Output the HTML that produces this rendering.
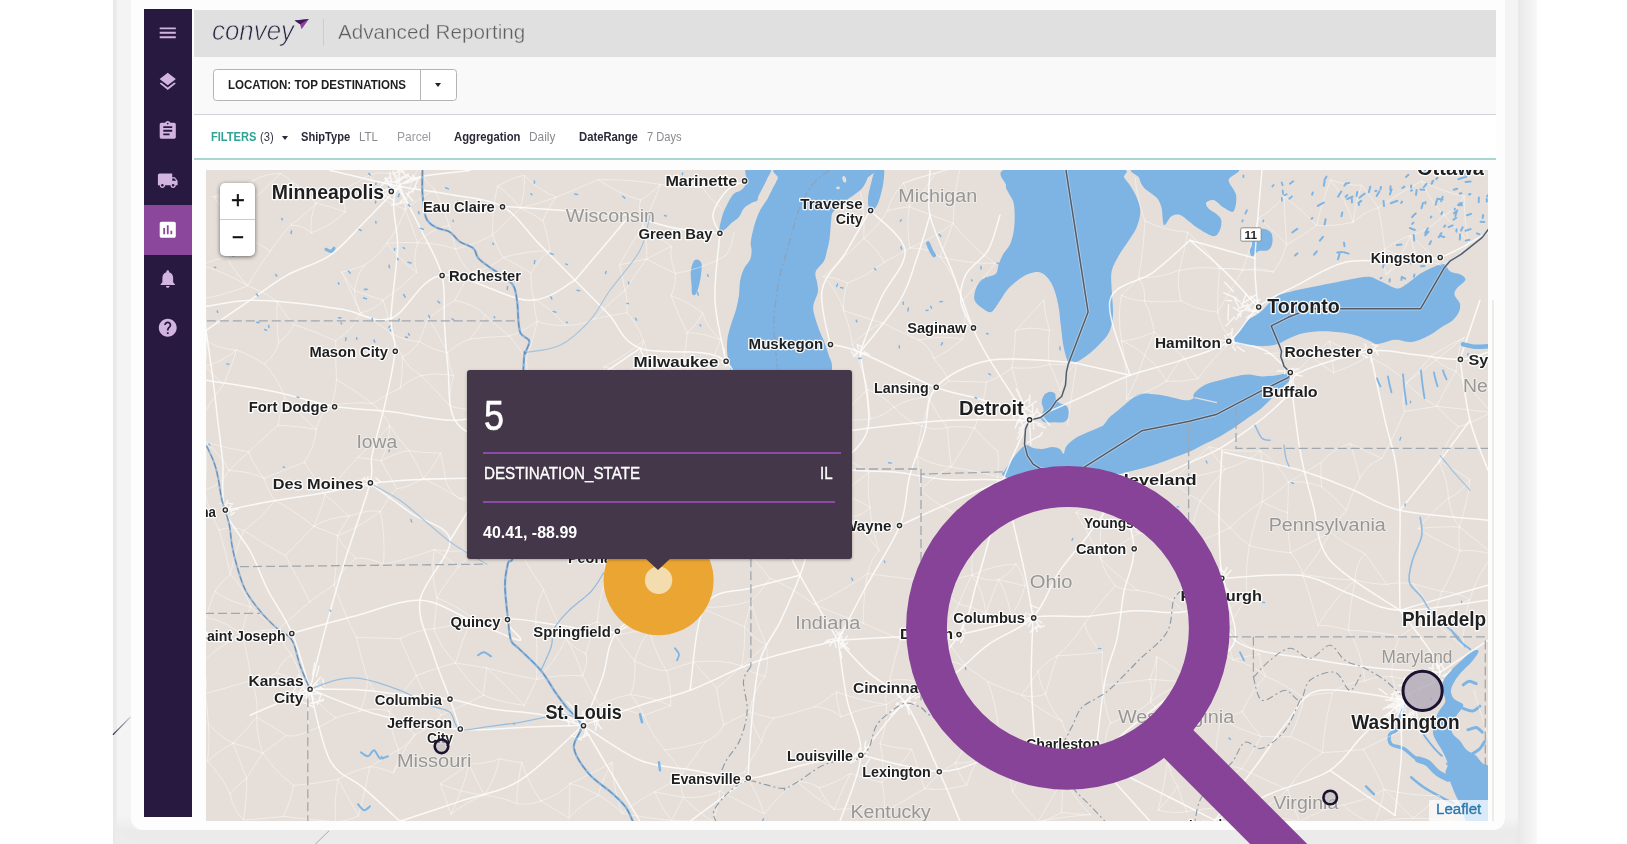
<!DOCTYPE html>
<html lang="en"><head><meta charset="utf-8"><title>Convey - Advanced Reporting</title>
<style>
html,body{margin:0;padding:0;background:#fff;}
body{width:1627px;height:844px;overflow:hidden;position:relative;filter:blur(.55px);font-family:"Liberation Sans",sans-serif;}
.abs{position:absolute;}
.t{position:absolute;white-space:nowrap;line-height:1;transform-origin:0 50%;}
svg{display:block;}
svg text{font-family:"Liberation Sans",sans-serif;}
.lb{font-weight:700;fill:#1f1f1f;stroke:#fff;stroke-width:2.6px;stroke-linejoin:round;paint-order:stroke fill;stroke-opacity:.9}
.sh{font-weight:700;fill:#222}
.st{font-weight:400;fill:#979797;stroke:#f3efeb;stroke-width:2px;stroke-linejoin:round;paint-order:stroke fill;stroke-opacity:.7}

#frame{left:113px;top:-30px;width:1424px;height:900px;background:linear-gradient(90deg,#e8e8e8 0,#ececec 3.5px,#ececec 1400px,#e9e9e9 1406px,#f8f8f8 1424px);}
#bez{left:116.6px;top:-30px;width:1401.6px;height:872px;border-radius:0 0 24px 24px;background:linear-gradient(180deg,#f4f4f4 0,#f4f4f4 846px,#ebebeb 861px);}
#card{left:131px;top:-30px;width:1374.2px;height:860px;background:#fdfdfd;border-radius:0 0 12px 12px;}
#side{left:144px;top:9px;width:47.5px;height:808px;background:#27193f;}
#side .act{left:0;top:196px;width:47.5px;height:49.5px;background:#8a479c;}
#side svg{position:absolute;left:13px;}
#hdr{left:194px;top:9.5px;width:1302px;height:47.5px;background:#e0e0e0;}
#sub{left:194px;top:57px;width:1302px;height:57px;background:#f9f9f9;border-bottom:1.5px solid #d3d2d8;}
#flt{left:194px;top:115.5px;width:1302px;height:42px;background:#fff;border-bottom:2px solid #a9d6d0;}
#dd{left:213px;top:68.8px;width:242px;height:30px;border:1px solid #b4b4b4;border-radius:3.5px;background:#fff;}
#dd i{position:absolute;left:205.5px;top:0;width:1px;height:30px;background:#b4b4b4;}
.car{width:0;height:0;border-left:3.5px solid transparent;border-right:3.5px solid transparent;border-top:4px solid #222;}
#map{left:206px;top:169.7px;width:1282.3px;height:651.3px;overflow:hidden;background:#e6dfd9;}
#zoom{left:219.8px;top:182.8px;width:35.4px;height:73px;background:#fff;border-radius:5px;box-shadow:0 1px 4px rgba(0,0,0,.55);}
#zoom i{position:absolute;left:0;top:36px;width:35px;height:1px;background:#ccc;}
#tip{left:467px;top:370px;width:384.5px;height:188.5px;background:#45374a;border-radius:3px;box-shadow:0 1px 3px rgba(0,0,0,.3);}
#tip:after{content:"";position:absolute;left:178px;top:188px;border-left:13.5px solid transparent;border-right:13.5px solid transparent;border-top:12.5px solid #45374a;}
#tip .ln{position:absolute;height:1.6px;background:#8c4aa8;left:16.3px;}
#leaf{left:1429px;top:799.5px;width:59.5px;height:21.5px;background:rgba(255,255,255,.72);}

</style></head><body>
<div id="frame" class="abs"></div>
<div id="bez" class="abs"></div>
<div id="card" class="abs"></div>
<svg class="abs" style="left:0;top:0" width="1627" height="844" viewBox="0 0 1627 844"><defs><linearGradient id="lg1" x1="113" y1="734" x2="130" y2="717" gradientUnits="userSpaceOnUse"><stop offset="0" stop-color="#2e2444"/><stop offset=".25" stop-color="#6d6680"/><stop offset="1" stop-color="#cfcfd6"/></linearGradient></defs><path d="M113.3 734.4 L130.2 717.2" stroke="url(#lg1)" stroke-width="1.3" stroke-linecap="round"/><path d="M329 830.8 L315 844.5" stroke="#a9a9a9" stroke-width="1"/></svg>
<div id="side" class="abs"><div class="abs act"></div><svg style="top:13.2px" width="21.5" height="21.5" viewBox="0 0 24 24" fill="#d2b4e0"><path d="M3 18h18v-2H3v2zm0-5h18v-2H3v2zm0-7v2h18V6H3z"/></svg><svg style="top:62.2px" width="21.5" height="21.5" viewBox="0 0 24 24" fill="#d2b4e0"><path d="M11.99 18.54l-7.37-5.73L3 14.07l9 7 9-7-1.63-1.27-7.38 5.74zM12 16l7.36-5.73L21 9l-9-7-9 7 1.63 1.27L12 16z"/></svg><svg style="top:111.2px" width="21.5" height="21.5" viewBox="0 0 24 24" fill="#d2b4e0"><path d="M19 3h-4.180C14.400 1.840 13.300 1 12 1c-1.300 0-2.400.840-2.820 2H5c-1.100 0-2 .900-2 2v14c0 1.100.900 2 2 2h14c1.100 0 2-.900 2-2V5c0-1.100-.900-2-2-2zm-7 0c.550 0 1 .450 1 1s-.450 1-1 1-1-.450-1-1 .450-1 1-1zm2 14H7v-2h7v2zm3-4H7v-2h10v2zm0-4H7V7h10v2z"/></svg><svg style="top:161.2px" width="21.5" height="21.5" viewBox="0 0 24 24" fill="#d2b4e0"><path d="M20 8h-3V4H3c-1.100 0-2 .900-2 2v11h2c0 1.660 1.340 3 3 3s3-1.340 3-3h6c0 1.660 1.340 3 3 3s3-1.340 3-3h2v-5l-3-4zM6 18.500c-.830 0-1.500-.670-1.500-1.500s.670-1.500 1.500-1.500 1.500.670 1.500 1.500-.670 1.500-1.500 1.500zm13.500-9l1.960 2.500H17V9.500h2.500zm-1.500 9c-.830 0-1.500-.670-1.500-1.500s.670-1.500 1.500-1.500 1.500.670 1.500 1.500-.670 1.500-1.500 1.500z"/></svg><svg style="top:210.2px" width="21.5" height="21.5" viewBox="0 0 24 24" fill="#fff"><path d="M19 3H5c-1.100 0-2 .900-2 2v14c0 1.100.900 2 2 2h14c1.100 0 2-.900 2-2V5c0-1.100-.900-2-2-2zM9 17H7v-7h2v7zm4 0h-2V7h2v10zm4 0h-2v-4h2v4z"/></svg><svg style="top:259.2px" width="21.5" height="21.5" viewBox="0 0 24 24" fill="#d2b4e0"><path d="M12 22c1.100 0 2-.900 2-2h-4c0 1.100.890 2 2 2zm6-6v-5c0-3.070-1.640-5.640-4.500-6.320V4c0-.830-.670-1.500-1.500-1.500s-1.500.670-1.500 1.500v.680C7.630 5.360 6 7.920 6 11v5l-2 2v1h16v-1l-2-2z"/></svg><svg style="top:308.2px" width="21.5" height="21.5" viewBox="0 0 24 24" fill="#d2b4e0"><path d="M12 2C6.480 2 2 6.480 2 12s4.480 10 10 10 10-4.480 10-10S17.520 2 12 2zm1 17h-2v-2h2v2zm2.070-7.750l-.900.920C13.450 12.900 13 13.500 13 15h-2v-.500c0-1.100.450-2.100 1.170-2.830l1.240-1.260c.370-.360.590-.860.590-1.410 0-1.100-.900-2-2-2s-2 .900-2 2H8c0-2.210 1.790-4 4-4s4 1.790 4 4c0 .880-.360 1.680-.930 2.250z"/></svg></div>
<div id="hdr" class="abs"></div>
<span class="t" style="left:211.6px;top:17.3px;font-size:27.50px;color:#2b2340;font-style:italic;transform:scaleX(0.9411);-webkit-text-stroke:.75px #e0e0e0;">convey</span>
<svg class="abs" style="left:293px;top:17px" width="18" height="14" viewBox="293 17 18 14"><path d="M294.6 20.6 L308.9 18.9 L301.6 29.2 L300 24.2 Z" fill="#8f3f9f"/><path d="M294.6 20.6 L308.9 18.9 L300 24.2 Z" fill="#3d1a55"/></svg>
<div class="abs" style="left:322.5px;top:18.5px;width:1px;height:27.5px;background:#cdcdcd"></div>
<span class="t" style="left:338.3px;top:22.2px;font-size:20.00px;color:#5e5e5e;transform:scaleX(1.0329);-webkit-text-stroke:.35px #e0e0e0;">Advanced Reporting</span>
<div id="sub" class="abs"></div>
<div id="dd" class="abs"><i></i><div class="abs car" style="left:221px;top:13.5px"></div></div>
<span class="t" style="left:227.5px;top:78.7px;font-size:12.20px;color:#1e1e1e;font-weight:700;transform:scaleX(0.9463);">LOCATION: TOP DESTINATIONS</span>
<div id="flt" class="abs"></div>
<span class="t" style="left:210.9px;top:130.9px;font-size:12.40px;color:#2fa394;font-weight:700;transform:scaleX(0.8966);">FILTERS</span>
<span class="t" style="left:260.0px;top:130.9px;font-size:12.40px;color:#3a3545;transform:scaleX(0.9040);">(3)</span>
<div class="abs car" style="left:281.5px;top:136px;border-top-color:#2d2838"></div>
<span class="t" style="left:301.0px;top:130.9px;font-size:12.40px;color:#2d2838;font-weight:700;transform:scaleX(0.8982);">ShipType</span>
<span class="t" style="left:359.4px;top:130.9px;font-size:12.40px;color:#8a8a90;transform:scaleX(0.9243);">LTL</span>
<span class="t" style="left:397.0px;top:130.9px;font-size:12.40px;color:#9a9aa0;transform:scaleX(0.9673);">Parcel</span>
<span class="t" style="left:454.4px;top:130.9px;font-size:12.40px;color:#2d2838;font-weight:700;transform:scaleX(0.9107);">Aggregation</span>
<span class="t" style="left:529.3px;top:130.9px;font-size:12.40px;color:#8a8a90;transform:scaleX(0.9579);">Daily</span>
<span class="t" style="left:578.8px;top:130.9px;font-size:12.40px;color:#2d2838;font-weight:700;transform:scaleX(0.9093);">DateRange</span>
<span class="t" style="left:646.6px;top:130.9px;font-size:12.40px;color:#8a8a90;transform:scaleX(0.8991);">7 Days</span>
<div id="map" class="abs"><svg width="1282.3" height="651.3" viewBox="206 169.7 1282.3 651.3"><rect x="206" y="169" width="1284" height="654" fill="#e6dfd9"/>
<path d="M780.3 168.0 C765.0 169.7 779.1 174.5 777.8 177.9 C776.5 181.3 774.3 184.8 772.6 188.2 C770.9 191.6 769.1 195.6 767.4 198.6 C765.7 201.6 764.0 203.3 762.3 206.3 C760.6 209.3 758.6 212.7 757.1 216.6 C755.6 220.5 754.3 225.2 753.2 229.5 C752.1 233.8 751.0 239.0 750.7 242.4 C750.4 245.8 751.7 247.2 751.6 250.0 C751.5 252.8 751.4 256.1 750.1 259.2 C748.8 262.3 745.6 264.9 743.9 268.5 C742.2 272.1 740.9 276.4 740.1 280.8 C739.3 285.2 739.6 290.1 739.0 294.7 C738.4 299.3 737.4 304.0 736.2 308.6 C735.0 313.2 733.0 317.8 731.6 322.4 C730.2 327.0 728.6 331.7 727.8 336.3 C727.0 340.9 726.8 345.6 727.0 350.2 C727.2 354.8 728.7 360.7 729.3 364.0 C729.9 367.3 729.8 364.2 730.4 370.2 C731.0 376.2 731.1 390.0 733.0 400.0 C734.9 410.0 732.5 423.3 742.0 430.0 C751.5 436.7 776.7 443.3 790.0 440.0 C803.3 436.7 815.0 421.6 822.0 410.0 C829.0 398.4 830.7 379.4 831.8 370.2 C832.9 361.0 830.0 359.7 828.7 354.8 C827.4 349.9 825.5 345.0 824.0 340.9 C822.5 336.8 820.9 334.2 819.4 330.1 C817.9 326.0 815.8 320.4 814.8 316.3 C813.8 312.2 812.8 309.6 813.3 305.5 C813.8 301.4 817.3 295.5 817.9 291.6 C818.5 287.8 817.5 285.7 817.1 282.4 C816.7 279.1 814.5 275.2 815.6 271.6 C816.8 268.0 822.1 264.4 824.0 260.8 C825.9 257.2 826.2 253.5 827.1 250.0 C828.0 246.5 828.9 243.3 829.4 239.9 C829.9 236.5 830.1 232.9 830.4 229.5 C830.7 226.1 830.8 222.2 831.3 219.2 C831.8 216.2 831.0 214.5 833.3 211.5 C835.6 208.5 841.0 204.2 844.9 201.1 C848.8 198.0 853.5 195.1 856.5 192.7 C859.5 190.3 861.1 189.4 862.9 186.9 C864.7 184.4 866.4 181.1 867.5 177.9 C868.6 174.8 883.9 169.7 869.4 168.0 C854.9 166.3 795.6 166.3 780.3 168.0 Z" fill="#7db4e4"/>
<path d="M746.8 168.0 C742.9 170.3 747.7 178.2 746.8 181.8 C745.9 185.4 743.8 187.6 741.6 189.5 C739.5 191.4 736.0 191.5 733.9 193.4 C731.8 195.3 730.3 198.3 728.7 201.1 C727.1 203.9 725.5 207.0 724.2 210.2 C722.9 213.4 721.8 217.2 721.0 220.5 C720.2 223.8 719.1 228.5 719.2 230.3 C719.3 232.1 720.4 231.7 721.5 231.3 C722.6 231.0 724.2 229.8 726.1 228.2 C728.0 226.6 730.5 223.7 732.6 221.8 C734.8 219.9 737.1 219.0 739.0 216.6 C740.9 214.2 742.0 210.0 744.2 207.6 C746.4 205.2 749.9 203.6 752.0 202.4 C754.1 201.2 756.0 201.6 757.1 200.5 C758.2 199.4 757.5 198.1 758.4 196.0 C759.3 193.9 760.8 191.2 762.3 188.2 C763.8 185.2 766.1 181.3 767.4 177.9 C768.7 174.5 773.4 169.7 770.0 168.0 C766.6 166.3 750.7 165.7 746.8 168.0 Z" fill="#7db4e4"/>
<path d="M875.9 168.0 C873.8 170.7 872.0 179.5 870.7 184.4 C869.4 189.3 868.4 193.4 868.1 197.3 C867.8 201.2 868.1 205.3 868.8 207.6 C869.4 209.8 870.6 211.2 872.0 210.8 C873.4 210.4 875.6 207.9 877.1 205.0 C878.6 202.1 879.9 197.5 881.0 193.4 C882.1 189.3 883.2 184.7 883.6 180.5 C884.0 176.3 884.9 170.1 883.6 168.0 C882.3 165.9 878.0 165.3 875.9 168.0 Z" fill="#7db4e4"/>
<path d="M1009.7 168.0 C991.2 170.8 1006.2 180.8 1006.0 184.9 C1005.8 189.0 1007.2 189.5 1008.5 192.4 C1009.8 195.3 1012.5 198.2 1013.5 202.3 C1014.5 206.4 1014.7 212.2 1014.7 217.2 C1014.7 222.2 1014.3 227.6 1013.5 232.2 C1012.7 236.8 1011.4 241.1 1009.7 244.6 C1008.0 248.1 1005.4 250.0 1003.5 253.3 C1001.6 256.6 999.8 261.2 998.6 264.5 C997.4 267.8 998.0 271.1 996.1 273.2 C994.2 275.3 990.1 275.6 987.4 276.9 C984.7 278.1 982.0 278.2 979.9 280.7 C977.8 283.2 975.7 288.5 974.9 291.8 C974.1 295.1 973.6 297.9 974.9 300.6 C976.1 303.3 979.7 306.1 982.4 308.0 C985.1 309.9 988.2 312.9 991.1 311.7 C994.0 310.5 997.1 304.3 999.8 300.6 C1002.5 296.9 1004.2 292.9 1007.3 289.4 C1010.4 285.9 1014.7 282.1 1018.4 279.4 C1022.1 276.7 1026.1 274.4 1029.6 273.2 C1033.1 271.9 1036.7 271.3 1039.6 271.9 C1042.5 272.5 1044.8 274.4 1047.1 276.9 C1049.4 279.4 1051.4 282.3 1053.3 286.9 C1055.2 291.5 1057.0 298.1 1058.2 304.3 C1059.4 310.5 1059.9 317.6 1060.7 324.2 C1061.5 330.8 1062.2 338.3 1063.2 344.1 C1064.2 349.9 1065.8 355.9 1066.9 359.0 C1068.0 362.1 1068.3 362.1 1070.0 362.5 C1071.7 362.9 1074.1 362.7 1076.9 361.5 C1079.7 360.3 1083.1 358.2 1086.8 355.3 C1090.5 352.4 1095.6 348.1 1099.3 344.1 C1103.0 340.2 1106.9 336.6 1109.2 331.6 C1111.5 326.6 1112.6 321.2 1113.0 314.2 C1113.4 307.2 1111.9 296.6 1111.7 289.4 C1111.5 282.1 1110.5 276.5 1111.7 270.7 C1113.0 264.9 1116.3 259.7 1119.2 254.5 C1122.1 249.3 1126.2 244.2 1129.1 239.6 C1132.0 235.0 1134.7 231.8 1136.6 227.2 C1138.5 222.6 1140.1 216.9 1140.3 212.3 C1140.5 207.7 1139.2 204.0 1137.8 199.8 C1136.3 195.7 1133.9 191.1 1131.6 187.4 C1129.3 183.7 1126.7 180.6 1124.2 177.4 C1121.7 174.2 1135.8 169.6 1116.7 168.0 C1097.6 166.4 1028.2 165.2 1009.7 168.0 Z" fill="#7db4e4"/>
<path d="M1137.8 168.0 C1122.0 169.6 1138.1 174.2 1139.1 177.4 C1140.1 180.6 1141.1 184.1 1144.0 187.4 C1146.9 190.7 1153.6 194.0 1156.5 197.3 C1159.4 200.6 1160.2 202.7 1161.5 207.3 C1162.8 211.9 1162.3 223.2 1164.0 224.7 C1165.7 226.1 1168.7 217.7 1171.4 216.0 C1174.1 214.3 1177.2 213.9 1180.1 214.7 C1183.0 215.5 1185.7 218.7 1188.8 221.0 C1191.9 223.3 1194.6 225.9 1198.8 228.4 C1203.0 230.9 1210.2 235.7 1213.7 235.9 C1217.2 236.1 1218.7 232.4 1219.9 229.7 C1221.2 227.0 1221.8 222.4 1221.2 219.7 C1220.6 217.0 1218.3 215.4 1216.2 213.5 C1214.1 211.6 1210.4 210.4 1208.7 208.5 C1207.0 206.6 1205.4 203.8 1206.2 202.3 C1207.0 200.9 1210.8 199.0 1213.7 199.8 C1216.6 200.6 1220.3 205.4 1223.6 207.3 C1226.9 209.2 1231.5 213.1 1233.6 211.0 C1235.7 208.9 1236.9 200.0 1236.1 194.8 C1235.3 189.6 1229.0 184.4 1228.6 179.9 C1228.2 175.4 1248.7 170.0 1233.6 168.0 C1218.5 166.0 1153.5 166.4 1137.8 168.0 Z" fill="#7db4e4"/>
<path d="M1233.9 339.4 C1233.9 337.3 1236.9 334.1 1239.2 330.9 C1241.5 327.7 1244.2 323.4 1247.7 320.2 C1251.2 317.0 1255.9 315.6 1260.5 311.7 C1265.1 307.8 1270.4 300.2 1275.4 296.8 C1280.4 293.4 1284.7 293.0 1290.4 291.4 C1296.1 289.8 1302.8 288.6 1309.6 287.2 C1316.3 285.8 1323.8 284.3 1330.9 282.9 C1338.0 281.5 1345.8 279.7 1352.2 278.6 C1358.6 277.5 1364.3 276.0 1369.3 276.5 C1374.3 277.0 1377.5 279.9 1382.1 281.8 C1386.7 283.8 1392.7 288.0 1397.0 288.2 C1401.3 288.4 1403.8 285.4 1407.7 282.9 C1411.6 280.4 1416.2 276.0 1420.5 273.3 C1424.8 270.6 1429.4 268.5 1433.3 266.9 C1437.2 265.3 1441.1 263.0 1443.9 263.7 C1446.7 264.4 1447.5 269.4 1450.3 271.2 C1453.1 273.0 1458.5 273.0 1461.0 274.4 C1463.5 275.8 1466.0 277.4 1465.3 279.7 C1464.6 282.0 1458.5 285.7 1456.7 288.2 C1454.9 290.7 1454.1 292.1 1454.6 294.6 C1455.1 297.1 1459.2 300.4 1459.9 303.2 C1460.6 306.0 1460.1 308.9 1458.9 311.7 C1457.7 314.5 1455.3 317.7 1452.5 320.2 C1449.7 322.7 1445.7 324.1 1441.8 326.6 C1437.9 329.1 1434.0 332.7 1429.0 335.2 C1424.0 337.7 1417.6 340.9 1411.9 341.6 C1406.2 342.3 1400.6 339.0 1394.9 339.4 C1389.2 339.8 1382.1 343.5 1377.8 343.7 C1373.5 343.9 1372.8 341.9 1369.3 340.5 C1365.8 339.1 1361.5 336.6 1356.5 335.2 C1351.5 333.8 1345.5 332.7 1339.4 332.0 C1333.4 331.3 1326.2 330.7 1320.2 330.9 C1314.2 331.1 1308.5 331.8 1303.2 333.0 C1297.9 334.2 1292.5 336.6 1288.2 338.4 C1283.9 340.2 1281.5 342.5 1277.6 343.7 C1273.7 344.9 1269.4 345.6 1264.8 345.8 C1260.2 346.0 1254.2 345.2 1249.9 344.8 C1245.6 344.4 1241.9 344.6 1239.2 343.7 C1236.5 342.8 1233.9 341.5 1233.9 339.4 Z" fill="#7db4e4"/>
<path d="M1004.5 470.5 C1006.0 467.9 1009.6 462.6 1012.1 459.1 C1014.6 455.6 1017.4 452.0 1019.8 449.6 C1022.2 447.2 1024.2 445.1 1026.4 444.8 C1028.6 444.5 1030.4 447.1 1033.1 447.7 C1035.8 448.3 1039.4 448.8 1042.6 448.6 C1045.8 448.4 1049.3 446.7 1052.2 446.7 C1055.1 446.7 1057.9 447.5 1059.8 448.6 C1061.7 449.7 1062.5 453.9 1063.6 453.4 C1064.7 452.9 1064.6 448.2 1066.5 445.7 C1068.4 443.1 1071.7 440.3 1075.0 438.1 C1078.3 435.9 1082.7 434.1 1086.5 432.4 C1090.3 430.6 1095.1 428.9 1097.9 427.6 C1100.8 426.3 1101.7 426.5 1103.6 424.8 C1105.5 423.1 1106.4 420.1 1109.3 417.2 C1112.2 414.3 1117.0 410.8 1120.8 407.6 C1124.6 404.4 1128.7 400.5 1132.2 398.1 C1135.7 395.7 1137.6 393.9 1141.7 393.3 C1145.8 392.7 1151.9 393.7 1157.0 394.3 C1162.1 394.9 1167.5 396.2 1172.2 397.2 C1177.0 398.1 1182.0 399.9 1185.5 400.0 C1189.0 400.1 1191.8 399.2 1193.2 398.1 C1194.6 397.0 1192.2 395.5 1194.1 393.3 C1196.0 391.1 1200.3 387.0 1204.6 384.8 C1208.9 382.6 1214.7 381.4 1219.8 380.0 C1224.9 378.6 1230.3 377.1 1235.1 376.2 C1239.9 375.2 1244.0 374.3 1248.4 374.3 C1252.9 374.3 1257.3 376.1 1261.8 376.2 C1266.2 376.3 1270.7 375.7 1275.1 375.2 C1279.5 374.7 1285.9 372.6 1288.4 373.3 C1291.0 374.0 1291.7 376.6 1290.4 379.1 C1289.1 381.7 1284.0 385.4 1280.8 388.6 C1277.6 391.8 1274.5 394.9 1271.3 398.1 C1268.1 401.3 1265.6 404.4 1261.8 407.6 C1258.0 410.8 1252.9 414.0 1248.4 417.2 C1244.0 420.4 1239.9 423.5 1235.1 426.7 C1230.3 429.9 1224.9 433.3 1219.8 436.2 C1214.7 439.1 1209.7 441.2 1204.6 443.8 C1199.5 446.4 1194.5 449.3 1189.4 451.5 C1184.3 453.7 1179.2 455.3 1174.1 457.2 C1169.0 459.1 1164.0 461.1 1158.9 462.9 C1153.8 464.6 1148.7 466.3 1143.6 467.7 C1138.5 469.1 1132.5 470.4 1128.4 471.5 C1124.3 472.6 1123.6 472.9 1118.9 474.3 C1114.2 475.7 1109.8 478.4 1100.0 480.0 C1090.2 481.6 1073.3 483.7 1060.0 484.0 C1046.7 484.3 1029.5 483.5 1020.0 482.0 C1010.5 480.5 1005.6 476.9 1003.0 475.0 C1000.4 473.1 1003.0 473.1 1004.5 470.5 Z" fill="#7db4e4"/>
<path d="M1041.7 401.9 C1041.9 399.4 1043.1 396.1 1044.5 394.3 C1045.9 392.6 1048.5 391.6 1050.3 391.4 C1052.0 391.2 1054.0 392.0 1055.0 393.3 C1056.0 394.6 1055.2 397.5 1056.0 399.1 C1056.8 400.7 1058.2 401.9 1059.8 402.9 C1061.4 403.8 1064.1 403.7 1065.5 404.8 C1066.9 405.9 1067.9 407.4 1068.4 409.5 C1068.9 411.6 1069.2 415.1 1068.4 417.2 C1067.6 419.3 1066.0 421.1 1063.6 421.9 C1061.2 422.7 1057.3 421.9 1054.1 421.9 C1050.9 421.9 1046.7 422.7 1044.5 421.9 C1042.3 421.1 1040.9 419.3 1040.7 417.2 C1040.5 415.1 1043.4 412.1 1043.6 409.5 C1043.8 406.9 1041.5 404.4 1041.7 401.9 Z" fill="#7db4e4"/>
<path d="M1471.8 650.9 C1469.0 652.3 1465.4 656.6 1462.1 659.6 C1458.7 662.7 1454.8 665.9 1451.9 669.1 C1448.9 672.3 1445.9 675.6 1444.3 678.6 C1442.6 681.6 1441.9 684.1 1441.9 686.9 C1441.9 689.7 1443.8 692.6 1444.3 695.2 C1444.8 697.7 1446.0 699.5 1445.0 702.3 C1444.0 705.1 1440.1 708.6 1438.4 711.8 C1436.7 714.9 1435.7 717.9 1434.8 721.3 C1433.9 724.6 1432.7 728.8 1432.9 731.9 C1433.1 735.1 1434.3 736.9 1436.0 740.2 C1437.7 743.6 1441.1 748.1 1443.1 752.1 C1445.1 756.0 1447.5 760.6 1447.8 763.9 C1448.2 767.3 1445.1 769.3 1445.5 772.2 C1445.9 775.2 1448.6 778.1 1450.2 781.7 C1451.8 785.3 1453.6 790.4 1455.0 793.5 C1456.3 796.7 1457.1 797.9 1458.5 800.7 C1459.9 803.4 1461.7 806.6 1463.3 810.1 C1464.8 813.7 1463.3 820.0 1468.0 822.0 C1472.7 824.0 1487.7 830.3 1491.7 822.0 C1495.6 813.7 1493.3 782.1 1491.7 772.2 C1490.1 762.3 1485.0 765.7 1482.2 762.7 C1479.4 759.8 1477.7 756.6 1475.1 754.4 C1472.5 752.3 1469.4 752.1 1466.8 749.7 C1464.2 747.3 1462.1 743.0 1459.7 740.2 C1457.3 737.5 1454.0 735.9 1452.6 733.1 C1451.2 730.3 1450.6 726.8 1451.4 723.6 C1452.2 720.5 1455.4 717.3 1457.3 714.1 C1459.3 711.0 1463.8 707.2 1463.3 704.7 C1462.7 702.1 1456.3 701.1 1454.2 698.7 C1452.2 696.4 1450.8 693.4 1450.9 690.4 C1451.0 687.5 1452.9 684.1 1454.7 681.0 C1456.5 677.8 1459.1 674.6 1461.8 671.5 C1464.6 668.3 1468.5 665.4 1471.3 662.0 C1474.1 658.6 1478.6 652.7 1478.7 650.9 C1478.7 649.0 1474.6 649.4 1471.8 650.9 Z" fill="#7db4e4"/>
<path d="M696.9 259.2 C698.3 259.5 701.1 260.3 701.6 263.9 C702.1 267.5 700.9 275.9 700.0 280.8 C699.1 285.7 697.5 290.9 696.2 293.1 C694.9 295.3 693.1 295.4 692.3 293.9 C691.5 292.4 691.8 287.6 691.5 283.9 C691.2 280.2 690.5 275.2 690.8 271.6 C691.1 268.0 692.1 264.4 693.1 262.3 C694.1 260.2 695.5 258.9 696.9 259.2 Z" fill="#7db4e4"/>
<path d="M1262.7 228.5 C1265.9 228.5 1269.6 230.3 1271.2 232.8 C1272.8 235.3 1272.8 240.6 1272.2 243.5 C1271.7 246.3 1270.3 248.6 1268.0 249.9 C1265.7 251.1 1261.1 249.9 1258.4 250.9 C1255.7 252.0 1253.4 256.4 1252.0 256.3 C1250.6 256.1 1249.9 251.8 1249.9 249.9 C1249.9 247.9 1251.6 247.4 1252.0 244.5 C1252.3 241.7 1250.2 235.5 1252.0 232.8 C1253.8 230.1 1259.5 228.5 1262.7 228.5 Z" fill="#7db4e4"/>
<ellipse cx="844.3" cy="179" rx="1.8" ry="3.4" fill="#e6dfd9" transform="rotate(-15 844.3 179)"/>
<ellipse cx="838" cy="187.6" rx="1.8" ry="1.3" fill="#e6dfd9"/>
<path d="M1194.5 397.3 L1217 402.3" stroke="#e6dfd9" stroke-width="1.4" fill="none"/>
<path d="M1404.0 705.8 C1403.2 708.2 1400.4 716.1 1399.3 720.1 C1398.1 724.0 1398.5 727.2 1396.9 729.5 C1395.3 731.9 1390.8 731.9 1389.8 734.3 C1388.8 736.7 1388.6 741.4 1391.0 743.8 C1393.3 746.1 1399.8 746.1 1404.0 748.5 C1408.1 750.9 1411.9 755.6 1415.8 758.0 C1419.8 760.4 1424.1 760.4 1427.7 762.7 C1431.3 765.1 1434.0 769.6 1437.2 772.2 C1440.3 774.8 1445.1 777.2 1446.7 778.1" fill="none" stroke="#7db4e4" stroke-width="3.4" stroke-linecap="round"/>
<path d="M1418.2 759.2 C1419.8 759.8 1424.5 760.6 1427.7 762.7 C1430.9 764.9 1433.8 769.6 1437.2 772.2 C1440.5 774.8 1446.1 777.2 1447.8 778.1" fill="none" stroke="#7db4e4" stroke-width="6.5" stroke-linecap="round"/>
<path d="M1411.1 777.0 C1413.1 778.5 1418.2 783.3 1423.0 786.4 C1427.7 789.6 1434.4 793.2 1439.5 795.9 C1444.7 798.7 1451.4 801.8 1453.8 803.0" fill="none" stroke="#7db4e4" stroke-width="2.4" stroke-linecap="round"/>
<path d="M1418.2 724.8 C1419.4 726.8 1422.6 732.7 1425.3 736.7 C1428.1 740.6 1432.0 745.4 1434.8 748.5 C1437.6 751.7 1440.7 754.4 1441.9 755.6" fill="none" stroke="#7db4e4" stroke-width="2" stroke-linecap="round"/>
<path d="M1451.4 630.0 C1452.6 631.6 1455.4 636.3 1458.5 639.5 C1461.7 642.6 1468.4 647.4 1470.4 649.0" fill="none" stroke="#7db4e4" stroke-width="1.8" stroke-linecap="round"/>
<path d="M1463.3 684.5 C1464.2 683.9 1467.0 681.2 1469.2 681.0 C1471.4 680.8 1475.1 682.9 1476.3 683.3" fill="none" stroke="#7db4e4" stroke-width="3" stroke-linecap="round"/>
<path d="M1463.3 708.2 C1464.8 708.6 1470.0 711.0 1472.7 710.6 C1475.5 710.2 1478.7 706.6 1479.8 705.8" fill="none" stroke="#7db4e4" stroke-width="3" stroke-linecap="round"/>
<path d="M1468.0 729.5 C1469.4 729.2 1473.9 726.8 1476.3 727.2 C1478.7 727.6 1481.2 731.1 1482.2 731.9" fill="none" stroke="#7db4e4" stroke-width="3" stroke-linecap="round"/>
<path d="M1472.7 753.3 C1473.9 752.5 1477.9 750.5 1479.8 748.5 C1481.8 746.5 1483.8 742.6 1484.6 741.4" fill="none" stroke="#7db4e4" stroke-width="3" stroke-linecap="round"/>
<path d="M236.2 349.7 Q248.9 354.1 264.4 363.6 M1246.9 596.8 Q1225.7 609.4 1202.4 627.8 M951.0 466.6 Q966.5 443.3 974.5 427.7 M1144.6 355.3 Q1149.5 343.9 1154.1 331.7 M664.6 749.5 Q651.9 735.0 643.8 715.1 M723.8 724.4 Q719.1 707.7 716.7 687.9 M291.6 654.7 Q298.8 668.4 304.7 685.8 M1262.2 501.3 Q1254.7 519.1 1249.4 545.3 M1228.7 627.0 Q1234.6 615.5 1246.9 596.8 M1171.4 481.0 Q1188.5 465.4 1209.1 446.6 M434.8 189.4 Q416.2 199.9 405.3 209.2 M1187.0 811.4 Q1181.0 798.7 1177.7 785.9 M1012.5 791.4 Q1019.1 774.6 1029.7 766.4 M1318.0 625.2 Q1331.4 624.8 1348.5 629.9 M1242.1 711.3 Q1227.6 717.5 1220.6 719.4 M1311.7 356.4 Q1320.6 363.4 1333.7 372.4 M276.3 672.8 Q267.9 679.1 251.3 679.9 M1150.3 701.9 Q1157.3 682.7 1156.7 656.3 M1332.5 692.4 Q1314.6 692.9 1304.2 697.8 M935.3 173.2 Q943.1 171.0 960.4 165.1 M951.0 466.6 Q981.1 471.2 1008.0 478.9 M1225.2 468.9 Q1216.3 459.3 1209.1 446.6 M1138.6 277.4 Q1143.8 246.5 1145.0 220.7 M880.1 743.5 Q884.5 761.3 881.9 782.1 M229.9 793.6 Q239.6 782.7 246.6 778.2 M1154.1 331.7 Q1134.0 340.4 1121.6 340.8 M814.0 604.0 Q840.9 615.6 863.2 622.9 M634.5 660.5 Q620.5 643.2 615.7 635.1 M943.3 660.2 Q951.2 660.0 965.9 666.0 M1043.9 299.5 Q1044.7 313.7 1049.5 330.3 M863.2 622.9 Q877.3 629.1 900.6 639.1 M251.3 679.9 Q247.9 653.7 241.8 634.0 M434.0 549.4 Q449.6 558.9 458.4 566.9 M1154.1 331.7 Q1151.5 313.7 1144.5 300.6 M335.7 340.5 Q335.5 361.7 336.5 379.1 M440.2 783.6 Q444.0 793.8 450.9 813.9 M678.2 539.4 Q674.1 551.5 663.2 558.1 M1318.0 625.2 Q1334.4 597.9 1355.1 579.7 M1440.3 264.8 Q1428.9 251.1 1410.4 235.3 M979.3 757.3 Q984.2 739.5 998.1 726.8 M1190.1 543.8 Q1191.2 525.1 1200.1 500.6 M1330.4 179.4 Q1320.6 206.4 1316.6 225.1 M245.1 206.4 Q244.5 213.4 238.9 228.8 M1158.1 810.0 Q1164.9 783.4 1167.7 758.9 M1418.5 259.0 Q1404.0 257.4 1384.5 249.1 M1311.7 356.4 Q1298.1 353.7 1288.9 359.2 M880.1 743.5 Q887.8 723.1 886.5 704.3 M1260.5 450.7 Q1265.6 477.9 1262.2 501.3 M1171.4 481.0 Q1188.1 494.1 1200.1 500.6 M643.8 715.1 Q658.5 709.8 670.6 705.4 M1090.6 814.4 Q1073.0 797.4 1064.2 776.5 M383.8 199.3 Q393.8 204.3 405.3 209.2 M599.5 704.5 Q619.3 695.7 630.6 694.3 M250.8 606.7 Q243.1 585.8 230.3 574.1 M1158.1 810.0 Q1174.6 813.7 1187.0 811.4 M1410.4 235.3 Q1412.0 247.6 1418.5 259.0 M455.6 248.7 Q478.8 243.0 492.6 234.6 M428.2 318.3 Q424.2 327.3 419.4 341.2 M1038.0 821.4 Q1059.9 816.5 1090.6 814.4 M1167.7 758.9 Q1152.3 755.5 1138.7 758.1 M678.2 539.4 Q685.3 542.1 696.2 552.1 M509.7 335.8 Q525.5 330.1 537.2 321.1 M1332.5 692.4 Q1324.8 719.8 1322.4 752.4 M903.4 182.9 Q932.1 173.4 960.4 165.1 M630.0 565.4 Q651.0 560.3 663.2 558.1 M889.7 680.0 Q893.2 663.4 900.6 639.1 M1330.5 532.0 Q1344.2 543.3 1365.0 553.4 M434.0 549.4 Q451.8 552.5 472.9 549.4 M1406.4 382.6 Q1419.4 371.4 1431.4 355.1 M1436.7 406.0 Q1418.3 396.0 1406.4 382.6 M400.0 638.4 Q379.2 637.5 356.4 637.3 M1011.0 614.9 Q1020.6 603.5 1025.0 585.5 M909.3 206.5 Q905.8 225.0 910.0 247.7 M1321.6 461.9 Q1320.2 471.2 1321.6 486.5 M337.4 535.4 Q321.2 528.5 313.8 526.1 M1167.7 758.9 Q1169.7 774.5 1177.7 785.9 M911.5 748.9 Q917.5 764.8 924.6 788.5 M1441.8 591.1 Q1425.8 587.0 1413.3 583.6 M1361.6 185.0 Q1356.0 200.2 1353.1 222.0 M778.6 454.8 Q759.3 455.4 748.5 465.9 M415.0 734.1 Q432.9 726.9 440.9 714.7 M419.2 166.9 Q422.8 180.3 434.8 189.4 M304.4 461.9 Q315.1 446.1 316.2 429.1 M393.4 772.6 Q400.3 753.2 415.0 734.1 M1286.6 244.3 Q1284.8 217.1 1284.2 196.1 M315.9 203.0 Q298.6 183.2 280.4 173.3 M909.3 206.5 Q935.4 216.3 953.1 223.1 M400.1 387.8 Q402.6 376.6 402.5 356.6 M437.1 597.6 Q456.1 605.0 472.1 617.4 M894.0 406.7 Q908.6 398.0 928.2 396.6 M560.6 439.5 Q565.3 456.8 579.5 468.7 M653.8 527.7 Q661.9 540.9 663.2 558.1 M1249.4 545.3 Q1266.8 550.3 1290.6 552.5 M766.2 644.0 Q769.2 664.2 765.2 676.0 M960.4 165.1 Q953.5 197.0 953.1 223.1 M367.4 678.3 Q366.9 697.0 359.7 710.9 M847.6 282.6 Q833.7 276.4 823.3 276.4 M1363.1 749.0 Q1386.2 737.6 1402.7 729.8 M972.0 574.8 Q964.0 589.8 958.7 603.7 M233.0 742.9 Q219.3 736.4 208.2 723.2 M1469.5 599.5 Q1463.6 618.5 1462.8 646.7 M1188.8 680.6 Q1170.0 681.1 1149.9 679.0 M881.9 782.1 Q869.3 779.6 850.4 773.1 M676.6 377.1 Q685.9 359.3 687.1 332.6 M502.2 485.6 Q481.2 492.1 460.3 498.6 M955.4 762.7 Q936.6 773.6 924.6 788.5 M202.3 661.2 Q222.8 643.4 241.8 634.0 M658.2 467.8 Q649.8 452.1 637.8 443.0 M275.1 500.4 Q258.9 520.0 243.9 530.3 M417.6 242.4 Q429.3 229.1 449.2 225.0 M717.7 459.7 Q732.5 459.7 748.5 465.9 M1011.0 614.9 Q1007.0 592.1 998.6 579.3 M485.5 314.9 Q501.0 328.9 509.7 335.8 M497.8 185.6 Q511.9 195.9 520.3 207.8 M1418.2 528.0 Q1436.9 540.9 1460.0 550.5 M360.3 312.6 Q351.2 291.4 341.7 271.7 M606.8 552.1 Q616.8 558.1 630.0 565.4 M719.8 790.8 Q718.0 809.2 712.9 821.0 M1481.9 715.2 Q1491.2 742.5 1492.5 776.5 M646.6 258.8 Q659.0 265.3 675.4 273.1 M619.4 264.7 Q622.7 275.9 624.9 290.1 M1299.4 821.4 Q1272.1 814.6 1250.9 816.0 M671.6 246.2 Q657.3 252.1 646.6 258.8 M744.7 771.6 Q759.1 796.7 764.1 813.6 M390.9 332.9 Q408.8 341.8 419.4 341.2 M1025.0 585.5 Q1016.4 583.6 998.6 579.3 M485.5 314.9 Q473.2 303.1 454.7 300.1 M334.1 584.3 Q337.5 560.9 337.4 535.4 M1359.9 477.8 Q1351.0 494.6 1346.2 509.9 M389.6 425.1 Q389.8 442.7 381.0 460.6 M1304.2 697.8 Q1286.3 684.8 1265.5 675.8 M1459.5 526.6 Q1458.2 542.4 1460.0 550.5 M1311.7 356.4 Q1291.0 374.8 1279.7 399.5 M293.9 324.1 Q316.6 331.8 335.7 340.5 M304.4 461.9 Q279.9 471.5 263.8 478.0 M1090.6 814.4 Q1074.8 814.1 1061.5 812.1 M619.4 264.7 Q630.3 245.3 642.8 225.2 M803.5 484.8 Q820.5 488.5 836.3 494.3 M1438.7 460.6 Q1450.5 466.7 1470.1 479.3 M486.8 667.7 Q475.0 665.6 455.5 662.7 M1250.9 816.0 Q1232.0 815.3 1220.9 807.3 M867.6 573.2 Q870.9 557.7 879.1 550.3 M1067.3 424.9 Q1072.2 391.2 1076.6 362.5 M1287.8 789.4 Q1293.5 806.0 1299.4 821.4 M360.3 312.6 Q354.6 302.2 354.4 290.3 M621.9 812.9 Q613.0 787.6 611.9 762.0 M396.8 488.2 Q389.5 495.5 380.4 511.2 M882.4 322.6 Q866.4 329.3 852.4 344.6 M275.1 500.4 Q268.8 492.8 263.8 478.0 M316.2 429.1 Q301.0 415.2 284.8 396.9 M918.8 339.8 Q929.0 345.2 934.0 358.3 M1260.5 450.7 Q1247.8 462.0 1225.2 468.9 M416.3 675.3 Q398.8 696.6 389.3 711.3 M556.3 196.9 Q548.6 205.5 543.0 220.6 M1228.7 627.0 Q1220.2 628.0 1202.4 627.8 M1150.3 701.9 Q1152.8 686.8 1149.9 679.0 M290.5 225.0 Q303.6 224.3 311.2 232.5 M535.9 442.0 Q539.1 456.4 547.6 473.3 M958.3 514.8 Q934.7 503.3 920.9 489.8 M1105.5 744.4 Q1105.2 731.5 1110.6 722.7 M1413.4 818.1 Q1428.3 806.1 1439.0 795.5 M1286.6 244.3 Q1276.4 232.2 1258.5 217.7 M887.4 210.8 Q879.3 225.0 863.8 238.0 M630.6 694.3 Q636.7 681.1 634.5 660.5 M565.1 325.1 Q547.8 325.5 537.2 321.1 M369.6 174.4 Q355.7 183.7 345.0 187.8 M1273.4 271.7 Q1281.8 261.3 1286.6 244.3 M819.1 787.3 Q822.9 797.0 834.3 809.2 M699.6 607.0 Q727.8 608.2 751.3 600.5 M657.3 587.2 Q645.9 571.8 630.0 565.4 M682.0 424.7 Q673.3 428.5 662.6 440.3 M485.5 314.9 Q478.1 329.9 469.8 338.8 M658.2 467.8 Q636.3 492.0 622.1 507.6 M715.7 487.1 Q718.5 470.9 717.7 459.7 M509.7 335.8 Q486.7 336.7 469.8 338.8 M909.3 206.5 Q909.8 195.5 903.4 182.9 M1287.8 789.4 Q1301.2 766.1 1322.4 752.4 M455.5 662.7 Q440.9 648.5 434.0 628.4 M938.9 628.0 Q916.6 634.1 900.6 639.1 M386.8 242.9 Q399.7 259.2 416.7 271.9 M526.7 394.6 Q519.4 405.1 514.6 422.7 M1287.8 789.4 Q1273.1 803.1 1250.9 816.0 M1378.3 207.4 Q1383.3 231.4 1384.5 249.1 M741.5 665.5 Q722.2 658.7 693.9 661.6 M664.6 749.5 Q672.1 757.6 682.7 772.8 M814.0 604.0 Q840.8 592.3 867.6 573.2 M396.5 175.3 Q403.9 187.6 405.3 209.2 M357.5 457.2 Q338.0 479.0 324.9 494.5 M233.0 742.9 Q249.7 746.8 262.8 752.9 M621.9 812.9 Q609.9 800.6 598.3 795.1 M736.0 511.5 Q749.8 500.3 756.8 491.2 M484.4 794.6 Q495.7 777.6 499.6 758.4 M389.3 711.3 Q397.9 721.0 415.0 734.1 M256.7 717.1 Q256.9 738.9 262.8 752.9 M241.8 634.0 Q224.9 620.9 206.2 617.0 M1381.7 458.0 Q1362.6 449.2 1350.1 443.2 M1436.7 406.0 Q1447.2 417.1 1458.3 426.6 M585.6 653.5 Q590.3 636.1 597.2 621.6 M702.6 312.8 Q706.6 327.0 720.5 339.7 M1167.7 758.9 Q1166.5 737.1 1168.6 724.9 M998.6 579.3 Q1006.9 576.4 1016.0 563.7 M369.7 766.5 Q377.0 766.0 393.4 772.6 M516.1 544.7 Q496.2 544.8 472.9 549.4 M243.9 530.3 Q262.2 542.8 285.2 555.3 M712.9 821.0 Q689.9 821.2 671.7 820.1 M1288.4 481.9 Q1288.2 501.8 1287.4 512.4 M285.2 555.3 Q304.4 536.0 313.8 526.1 M834.3 809.2 Q816.0 798.0 796.5 781.3 M1193.2 572.8 Q1201.5 603.0 1202.4 627.8 M1287.8 789.4 Q1266.0 780.2 1241.7 768.3 M1012.5 791.4 Q1009.0 773.6 1008.2 760.1 M304.4 461.9 Q317.6 481.9 324.9 494.5 M200.3 265.0 Q205.4 283.6 201.7 298.5 M214.9 591.3 Q208.6 606.8 206.2 617.0 M1144.6 355.3 Q1138.0 377.2 1126.5 398.9 M1038.0 821.4 Q1052.5 797.5 1064.2 776.5 M683.5 797.0 Q678.1 807.6 671.7 820.1 M247.7 285.4 Q232.9 269.6 227.0 257.1 M1102.6 652.0 Q1101.0 673.5 1102.8 685.2 M450.0 405.8 Q435.3 389.2 421.1 375.2 M566.0 638.1 Q579.0 627.2 597.2 621.6 M1413.4 818.1 Q1392.0 817.2 1373.6 823.7 M1406.4 382.6 Q1400.6 400.5 1404.6 411.0 M626.9 312.4 Q610.0 315.1 594.0 318.9 M751.3 600.5 Q748.7 611.5 744.6 626.5 M543.6 589.4 Q551.4 609.4 566.0 638.1 M716.7 687.9 Q703.3 672.8 693.9 661.6 M756.8 491.2 Q754.9 479.0 748.5 465.9 M785.8 517.5 Q801.0 525.4 807.6 536.5 M849.6 516.5 Q832.8 527.4 807.6 536.5 M1469.5 599.5 Q1477.3 573.7 1493.4 554.4 M1441.8 591.1 Q1451.7 575.7 1460.0 550.5 M671.7 820.1 Q661.8 808.6 654.7 791.6 M660.5 184.2 Q650.9 208.4 642.8 225.2 M1367.5 356.6 Q1344.1 348.6 1329.3 341.0 M986.4 381.7 Q984.4 402.4 974.5 427.7 M849.6 516.5 Q862.0 528.6 879.1 550.3 M947.3 427.2 Q957.6 425.1 974.5 427.7 M337.4 535.4 Q345.3 522.8 349.0 515.8 M599.5 704.5 Q620.6 706.8 643.8 715.1 M1464.3 195.8 Q1443.9 192.1 1421.5 181.0 M643.7 340.0 Q636.8 323.2 626.9 312.4 M955.4 762.7 Q963.3 753.1 966.4 734.2 M841.0 716.7 Q864.8 706.3 886.5 704.3 M1049.5 363.9 Q1033.9 369.4 1012.0 367.4 M951.0 466.6 Q934.3 474.6 920.9 489.8 M372.4 403.4 Q383.1 396.0 400.1 387.8 M910.0 247.7 Q935.3 236.8 953.1 223.1 M1158.1 810.0 Q1172.1 795.1 1177.7 785.9 M715.7 487.1 Q696.3 495.3 680.2 498.5 M386.8 242.9 Q403.7 241.7 417.6 242.4 M678.2 539.4 Q696.8 532.4 711.9 528.6 M903.4 182.9 Q914.9 177.2 935.3 173.2 M421.1 375.2 Q407.3 367.2 402.5 356.6 M537.2 321.1 Q533.9 309.6 533.8 298.3 M205.1 693.3 Q207.6 705.8 208.2 723.2 M1105.5 744.4 Q1121.7 746.4 1138.7 758.1 M560.6 439.5 Q580.1 442.3 591.1 443.8 M1364.9 680.6 Q1361.6 650.8 1348.5 629.9 M445.3 478.8 Q444.1 468.0 440.6 452.7 M250.8 606.7 Q244.6 616.3 241.8 634.0 M1105.5 744.4 Q1089.4 747.1 1080.2 756.9 M860.7 191.9 Q864.9 210.9 863.8 238.0 M1187.7 232.0 Q1206.8 249.3 1219.6 268.2 M882.4 322.6 Q901.0 332.1 918.8 339.8 M205.3 441.9 Q203.9 431.2 201.4 417.3 M536.6 679.1 Q531.5 690.4 524.3 705.1 M1172.0 599.6 Q1157.3 592.5 1137.8 590.2 M1373.6 823.7 Q1381.0 809.1 1384.2 789.2 M702.6 312.8 Q689.6 302.2 671.1 295.4 M972.0 574.8 Q988.0 581.8 998.6 579.3 M417.6 242.4 Q411.0 223.6 405.3 209.2 M1217.6 311.8 Q1199.4 310.6 1180.8 300.5 M484.4 794.6 Q473.1 774.3 469.2 763.8 M233.0 742.9 Q244.6 731.6 256.7 717.1 M1304.2 697.8 Q1300.0 715.8 1290.3 736.4 M972.0 574.8 Q983.9 591.1 985.9 612.9 M550.2 250.6 Q529.3 249.8 503.3 257.1 M1080.2 756.9 Q1066.2 735.1 1061.6 720.6 M867.6 573.2 Q891.0 576.6 923.3 580.0 M660.5 184.2 Q629.8 178.6 598.1 179.4 M1008.2 760.1 Q1007.5 742.1 998.1 726.8 M1413.4 818.1 Q1395.3 800.4 1384.2 789.2 M1138.6 277.4 Q1161.3 277.9 1179.3 269.9 M704.4 380.6 Q687.1 374.1 676.6 377.1 M884.1 261.9 Q876.7 247.4 863.8 238.0 M993.2 499.2 Q1000.3 474.9 997.8 450.7 M1316.6 225.1 Q1301.8 209.0 1284.2 196.1 M569.9 783.4 Q593.9 772.3 611.9 762.0 M1228.7 627.0 Q1242.5 644.6 1259.7 654.1 M364.5 264.9 Q349.2 270.6 341.7 271.7 M416.3 675.3 Q424.3 696.4 440.9 714.7 M923.3 580.0 Q946.7 581.0 972.0 574.8 M233.0 742.9 Q215.9 752.6 207.6 761.0 M924.6 788.5 Q944.7 790.9 966.6 784.8 M283.3 816.1 Q313.8 820.0 335.5 821.3 M598.3 795.1 Q580.8 803.9 568.8 817.7 M1434.3 621.4 Q1435.7 605.6 1441.8 591.1 M841.0 716.7 Q836.1 701.2 836.5 691.7 M526.7 394.6 Q529.0 378.1 526.1 358.7 M917.5 456.1 Q917.6 445.9 921.7 425.7 M1363.1 749.0 Q1340.0 751.4 1322.4 752.4 M1386.3 274.1 Q1382.0 265.3 1384.5 249.1 M1144.6 355.3 Q1159.1 365.9 1166.3 381.1 M560.6 439.5 Q564.0 421.6 562.3 397.3 M987.8 681.4 Q974.7 672.0 965.9 666.0 M917.5 456.1 Q919.0 476.9 920.9 489.8 M1045.6 693.6 Q1050.2 708.9 1061.6 720.6 M1179.3 269.9 Q1184.4 250.5 1187.7 232.0 M909.3 206.5 Q923.1 193.7 935.3 173.2 M850.4 773.1 Q839.5 795.0 834.3 809.2 M1330.4 179.4 Q1344.6 185.0 1361.6 185.0 M1138.6 277.4 Q1133.7 283.0 1121.5 295.0 M309.8 601.6 Q301.1 583.4 285.2 555.3 M364.5 264.9 Q357.4 272.9 354.4 290.3 M1038.0 821.4 Q1045.9 821.5 1061.5 812.1 M236.2 349.7 Q216.4 348.8 206.4 339.6 M250.8 606.7 Q229.3 601.4 214.9 591.3 M1321.6 461.9 Q1331.9 449.2 1350.1 443.2 M1288.4 481.9 Q1306.8 480.1 1321.6 486.5 M1288.4 481.9 Q1273.7 495.8 1262.2 501.3 M741.5 665.5 Q745.2 649.8 744.6 626.5 M389.3 711.3 Q379.3 706.4 359.7 710.9 M839.7 417.9 Q852.5 421.1 870.7 418.5 M369.6 174.4 Q385.0 170.2 396.5 175.3 M649.1 630.8 Q632.4 630.3 615.7 635.1 M1064.2 776.5 Q1062.2 790.4 1061.5 812.1 M785.8 517.5 Q766.5 509.3 756.8 491.2 M666.5 670.4 Q656.0 654.4 649.1 630.8 M749.8 711.5 Q752.0 726.3 761.8 741.2 M1220.9 807.3 Q1200.3 808.6 1187.0 811.4 M453.5 375.5 Q448.5 392.5 450.0 405.8 M606.8 552.1 Q611.0 532.2 622.1 507.6 M1359.9 477.8 Q1355.0 456.6 1350.1 443.2 M671.1 295.4 Q677.6 313.9 687.1 332.6 M962.9 338.7 Q967.1 317.8 962.9 300.0 M481.9 408.7 Q495.4 420.4 514.6 422.7 M499.6 758.4 Q488.2 763.4 469.2 763.8 M1049.5 363.9 Q1047.2 343.8 1049.5 330.3 M569.9 783.4 Q581.8 784.9 598.3 795.1 M683.5 797.0 Q678.5 785.0 682.7 772.8 M993.2 499.2 Q974.9 507.5 958.3 514.8 M516.6 803.3 Q517.8 777.9 521.8 762.2 M472.9 549.4 Q467.5 559.7 458.4 566.9 M520.3 207.8 Q506.9 221.7 492.6 234.6 M734.1 232.5 Q731.6 248.8 725.3 255.5 M1121.6 340.8 Q1127.8 372.0 1126.5 398.9 M277.9 425.0 Q280.4 409.1 284.8 396.9 M1233.0 659.6 Q1216.9 648.4 1202.4 627.8 M540.9 800.7 Q553.7 808.1 568.8 817.7 M535.9 442.0 Q524.3 428.7 514.6 422.7 M380.4 511.2 Q369.7 508.6 349.0 515.8 M1448.4 498.0 Q1460.3 492.9 1470.1 479.3 M1045.6 693.6 Q1039.5 683.2 1038.3 670.5 M502.2 485.6 Q494.5 460.5 489.2 440.7 M883.9 811.8 Q856.1 806.7 834.3 809.2 M1150.3 701.9 Q1133.9 715.1 1110.6 722.7 M910.0 247.7 Q929.0 247.5 939.9 256.3 M651.3 380.9 Q641.8 376.0 628.5 374.6 M1318.0 625.2 Q1311.7 599.9 1302.5 573.7 M396.8 488.2 Q408.2 487.8 423.2 478.0 M445.3 478.8 Q447.8 491.2 460.3 498.6 M702.6 312.8 Q698.4 322.8 687.1 332.6 M277.2 301.1 Q286.5 317.5 293.9 324.1 M409.1 450.2 Q422.2 452.8 440.6 452.7 M316.2 429.1 Q299.5 425.8 277.9 425.0 M243.5 819.7 Q247.2 797.9 246.6 778.2 M338.1 779.0 Q348.6 798.5 358.5 815.7 M1139.1 532.8 Q1109.4 520.7 1076.0 512.2 M1012.0 367.4 Q1015.0 349.3 1015.4 330.3 M867.7 389.2 Q850.9 404.6 839.7 417.9 M995.2 263.2 Q971.8 247.2 953.1 223.1 M939.9 256.3 Q946.2 241.9 953.1 223.1 M706.3 741.0 Q694.7 756.7 682.7 772.8 M202.3 661.2 Q201.4 635.5 206.2 617.0 M1436.7 406.0 Q1468.3 409.4 1491.3 412.2 M579.5 468.7 Q585.6 456.5 591.1 443.8 M284.8 396.9 Q277.7 377.6 264.4 363.6 M254.0 179.9 Q230.6 191.3 213.8 196.4 M245.1 206.4 Q262.4 191.2 280.4 173.3 M1469.3 243.0 Q1458.1 257.8 1440.3 264.8 M1021.6 694.9 Q1033.6 678.1 1038.3 670.5 M867.7 389.2 Q868.0 407.2 870.7 418.5 M604.0 366.6 Q605.6 379.9 600.9 400.7 M724.1 394.7 Q710.8 385.2 704.4 380.6 M369.7 766.5 Q350.0 771.3 338.1 779.0 M360.3 312.6 Q378.7 322.9 390.9 332.9 M428.2 318.3 Q437.4 331.3 447.6 352.5 M1258.5 217.7 Q1270.3 211.9 1284.2 196.1 M372.4 403.4 Q356.4 390.8 336.5 379.1 M1250.9 816.0 Q1235.7 801.1 1221.0 780.1 M331.4 405.3 Q354.5 400.9 372.4 403.4 M744.0 550.1 Q758.8 562.7 770.0 577.9 M1100.4 557.9 Q1088.4 532.4 1076.0 512.2 M1217.6 311.8 Q1217.3 288.4 1219.6 268.2 M200.3 265.0 Q222.8 270.4 247.7 285.4 M1259.7 654.1 Q1259.6 665.6 1265.5 675.8 M993.2 499.2 Q980.4 510.7 976.4 528.6 M489.2 440.7 Q487.7 422.4 481.9 408.7 M484.4 794.6 Q465.8 801.7 450.9 813.9 M409.1 450.2 Q398.4 451.3 381.0 460.6 M565.1 325.1 Q580.9 325.6 594.0 318.9 M847.6 282.6 Q842.7 295.7 843.7 310.4 M699.6 607.0 Q725.0 617.9 744.6 626.5 M814.0 604.0 Q790.7 586.4 770.0 577.9 M223.4 384.1 Q211.8 399.4 201.4 417.3 M626.9 312.4 Q628.0 299.2 624.9 290.1 M948.9 380.7 Q937.6 390.1 928.2 396.6 M1413.4 818.1 Q1435.2 817.8 1450.7 820.5 M1045.6 693.6 Q1050.4 675.3 1057.4 655.5 M1434.3 621.4 Q1428.0 599.4 1413.3 583.6 M711.9 528.6 Q708.8 542.5 696.2 552.1 M1464.3 337.0 Q1434.1 361.5 1406.4 382.6 M275.1 500.4 Q292.7 509.0 313.8 526.1 M883.9 811.8 Q885.5 795.8 881.9 782.1 M708.1 428.7 Q695.3 426.7 682.0 424.7 M1011.0 614.9 Q1002.5 616.5 985.9 612.9 M1436.7 406.0 Q1415.9 409.5 1404.6 411.0 M666.5 670.4 Q679.8 665.6 693.9 661.6 M958.7 603.7 Q975.7 607.5 985.9 612.9 M649.1 630.8 Q652.9 612.9 657.3 587.2 M248.6 451.6 Q238.3 460.8 229.2 470.2 M492.6 234.6 Q498.0 249.1 503.3 257.1 M402.5 356.6 Q412.7 351.3 419.4 341.2 M1438.7 460.6 Q1447.5 439.0 1458.3 426.6 M1459.5 526.6 Q1478.3 541.1 1493.4 554.4 M658.2 467.8 Q671.9 485.8 680.2 498.5 M955.4 762.7 Q957.2 771.0 966.6 784.8 M1084.3 623.3 Q1089.3 640.8 1102.6 652.0 M331.4 405.3 Q319.8 413.1 316.2 429.1 M390.9 332.9 Q389.5 317.0 383.1 299.8 M1343.3 804.5 Q1354.0 815.9 1373.6 823.7 M423.2 478.0 Q436.4 478.2 445.3 478.8 M1456.0 371.0 Q1439.2 365.0 1431.4 355.1 M1012.5 791.4 Q1024.5 807.3 1038.0 821.4 M1438.7 460.6 Q1448.5 482.5 1448.4 498.0 M962.9 300.0 Q955.1 274.6 939.9 256.3 M455.5 662.7 Q462.1 640.2 472.1 617.4 M1330.5 532.0 Q1333.4 525.8 1346.2 509.9 M605.4 580.3 Q599.0 598.5 597.2 621.6 M324.9 494.5 Q335.1 502.7 349.0 515.8 M1190.1 543.8 Q1213.6 536.1 1229.9 527.3 M357.5 457.2 Q369.4 458.1 381.0 460.6 M1121.6 340.8 Q1117.1 316.0 1121.5 295.0 M1469.3 243.0 Q1460.3 232.0 1444.0 214.8 M416.3 675.3 Q439.5 666.5 455.5 662.7 M1434.3 621.4 Q1414.0 624.4 1399.7 636.3 M756.8 491.2 Q768.0 471.7 778.6 454.8 M868.9 472.1 Q857.6 465.2 846.9 458.5 M1311.7 356.4 Q1321.3 347.4 1329.3 341.0 M1311.7 356.4 Q1291.1 351.8 1264.4 353.1 M643.7 340.0 Q628.1 353.9 604.0 366.6 M250.8 606.7 Q260.2 615.8 278.6 628.7 M1423.7 683.6 Q1408.1 679.0 1391.8 676.3 M1322.4 752.4 Q1307.0 742.7 1290.3 736.4 M450.0 405.8 Q463.6 410.2 481.9 408.7 M531.0 272.9 Q530.3 287.7 533.8 298.3 M643.7 340.0 Q639.1 358.2 628.5 374.6 M884.1 261.9 Q865.4 276.6 847.6 282.6 M819.1 787.3 Q834.2 784.0 850.4 773.1 M535.9 442.0 Q508.1 440.6 489.2 440.7 M1105.8 494.4 Q1092.3 498.8 1076.0 512.2 M236.2 349.7 Q233.4 362.6 223.4 384.1 M1115.2 585.4 Q1100.7 601.1 1084.3 623.3 M807.6 536.5 Q826.2 516.0 836.3 494.3 M736.0 511.5 Q743.0 530.8 744.0 550.1 M248.6 451.6 Q228.7 448.5 205.3 441.9 M658.2 467.8 Q658.3 451.2 662.6 440.3 M682.0 424.7 Q663.3 430.3 637.8 443.0 M200.3 265.0 Q217.8 258.1 227.0 257.1 M640.4 199.8 Q637.6 208.4 642.8 225.2 M741.5 665.5 Q756.2 675.2 765.2 676.0 M293.8 785.2 Q315.1 783.7 338.1 779.0 M204.6 490.0 Q209.5 513.9 219.2 529.6 M819.1 787.3 Q809.6 780.9 796.5 781.3 M1171.4 481.0 Q1193.9 476.9 1225.2 468.9 M995.2 263.2 Q963.0 263.1 939.9 256.3 M1008.2 760.1 Q1016.9 760.6 1029.7 766.4 M219.2 529.6 Q225.6 550.0 230.3 574.1 M437.1 597.6 Q436.1 609.6 434.0 628.4 M1330.4 179.4 Q1345.9 198.9 1353.1 222.0 M678.2 539.4 Q669.4 530.0 653.8 527.7 M449.2 225.0 Q445.0 212.0 434.8 189.4 M634.5 660.5 Q640.7 641.0 649.1 630.8 M599.5 704.5 Q589.9 691.3 582.7 675.4 M453.5 375.5 Q447.8 364.5 447.6 352.5 M683.5 797.0 Q665.0 793.9 654.7 791.6 M995.2 263.2 Q981.3 280.9 962.9 300.0 M1410.4 235.3 Q1399.2 238.3 1384.5 249.1 M1459.5 526.6 Q1468.1 499.2 1470.1 479.3 M229.2 470.2 Q221.2 485.1 204.6 490.0 M711.9 528.6 Q732.3 539.6 744.0 550.1 M803.5 484.8 Q788.9 468.3 778.6 454.8 M1008.2 760.1 Q996.2 758.7 979.3 757.3 M1043.9 299.5 Q1033.9 310.8 1015.4 330.3 M484.4 794.6 Q462.1 792.8 440.2 783.6 M741.5 665.5 Q754.8 655.1 766.2 644.0 M1386.3 274.1 Q1398.3 263.0 1418.5 259.0 M1355.1 579.7 Q1349.5 608.7 1348.5 629.9 M380.4 511.2 Q385.5 534.9 383.6 564.1 M1367.5 356.6 Q1391.2 364.9 1406.4 382.6 M640.4 199.8 Q620.2 194.3 598.1 179.4 M947.3 427.2 Q933.0 430.9 921.7 425.7 M1038.3 670.5 Q1049.4 658.5 1057.4 655.5 M335.9 717.5 Q346.1 713.7 359.7 710.9 M540.9 800.7 Q528.8 783.9 521.8 762.2 M1439.0 795.5 Q1408.4 795.2 1384.2 789.2 M972.0 574.8 Q992.0 564.9 1016.0 563.7 M1299.4 821.4 Q1321.9 809.0 1343.3 804.5 M416.7 271.9 Q400.4 288.7 383.1 299.8 M469.2 763.8 Q455.7 773.3 440.2 783.6 M486.8 667.7 Q507.0 673.5 536.6 679.1 M230.3 574.1 Q218.6 584.2 214.9 591.3 M708.1 428.7 Q712.4 412.5 724.1 394.7 M369.6 174.4 Q375.2 185.6 383.8 199.3 M276.3 672.8 Q292.2 675.9 304.7 685.8 M308.4 731.0 Q294.1 737.5 286.3 735.3 M335.9 717.5 Q318.6 705.1 304.7 685.8 M205.1 693.3 Q231.9 686.4 251.3 679.9 M1179.3 269.9 Q1176.5 281.2 1180.8 300.5 M653.8 527.7 Q641.8 513.8 622.1 507.6 M354.4 290.3 Q368.7 295.4 383.1 299.8 M1100.4 557.9 Q1115.3 573.7 1137.8 590.2 M337.4 535.4 Q343.3 546.9 355.9 557.8 M315.9 203.0 Q330.6 205.9 345.2 211.5 M248.6 451.6 Q253.1 463.8 263.8 478.0 M1456.0 371.0 Q1470.7 387.9 1491.3 412.2 M238.9 228.8 Q230.4 246.7 227.0 257.1 M1381.7 458.0 Q1393.1 438.4 1404.6 411.0 M889.7 680.0 Q883.3 696.6 886.5 704.3 M962.9 338.7 Q948.4 351.4 934.0 358.3 M1333.7 372.4 Q1351.3 366.4 1367.5 356.6 M293.8 785.2 Q275.6 771.6 262.8 752.9 M604.0 366.6 Q612.8 368.2 628.5 374.6 M715.7 487.1 Q721.2 498.2 736.0 511.5 M1183.6 356.7 Q1169.0 342.1 1154.1 331.7 M843.7 310.4 Q837.4 289.3 823.3 276.4 M277.2 301.1 Q263.2 290.6 247.7 285.4 M341.7 271.7 Q349.0 283.9 354.4 290.3 M469.8 338.8 Q460.8 341.2 447.6 352.5 M749.8 711.5 Q734.2 719.0 723.8 724.4 M889.7 680.0 Q909.3 677.1 919.3 683.4 M1258.5 217.7 Q1251.6 245.9 1242.4 270.2 M1219.6 268.2 Q1234.2 267.7 1242.4 270.2 M524.3 175.1 Q525.4 191.1 520.3 207.8 M921.7 425.7 Q929.2 406.2 928.2 396.6 M923.3 580.0 Q945.4 590.9 958.7 603.7 M1215.2 757.9 Q1216.9 734.6 1220.6 719.4 M1436.7 406.0 Q1443.8 390.9 1456.0 371.0 M206.4 339.6 Q207.5 349.4 205.1 366.2 M277.2 301.1 Q276.3 318.3 278.6 342.7 M1364.9 680.6 Q1375.3 675.6 1391.8 676.3 M894.0 406.7 Q906.2 421.0 921.7 425.7 M360.3 312.6 Q353.0 329.5 335.7 340.5 M1172.0 599.6 Q1182.4 586.2 1193.2 572.8 M205.3 441.9 Q207.8 470.0 204.6 490.0 M671.1 295.4 Q675.8 285.6 675.4 273.1 M1183.6 356.7 Q1171.9 370.1 1166.3 381.1 M736.0 511.5 Q727.4 522.9 711.9 528.6 M1115.2 585.4 Q1122.4 589.9 1137.8 590.2 M416.3 675.3 Q406.7 653.4 400.0 638.4 M1410.4 235.3 Q1403.0 256.4 1386.3 274.1 M526.1 358.7 Q534.1 336.2 537.2 321.1 M1386.8 584.1 Q1379.2 573.1 1365.0 553.4 M948.9 380.7 Q945.5 371.9 934.0 358.3 M223.4 384.1 Q217.6 378.2 205.1 366.2 M839.7 417.9 Q844.2 437.5 846.9 458.5 M642.8 225.2 Q648.0 244.8 646.6 258.8 M229.2 470.2 Q221.0 454.0 205.3 441.9 M229.9 793.6 Q223.4 777.6 207.6 761.0 M841.0 716.7 Q832.4 707.7 814.8 706.4 M536.6 679.1 Q556.0 661.5 566.0 638.1 M1102.8 685.2 Q1104.2 707.3 1110.6 722.7 M335.5 821.3 Q334.1 797.2 338.1 779.0 M979.3 757.3 Q972.4 743.1 966.4 734.2 M489.2 440.7 Q501.8 435.7 514.6 422.7 M1262.2 501.3 Q1276.7 509.0 1287.4 512.4 M640.4 199.8 Q649.3 194.8 660.5 184.2 M867.7 389.2 Q863.0 368.7 852.4 344.6 M360.3 312.6 Q376.1 309.5 383.1 299.8 M400.0 638.4 Q416.1 629.3 434.0 628.4 M540.9 800.7 Q530.3 805.4 516.6 803.3 M516.1 544.7 Q503.3 526.9 493.6 507.2 M643.7 340.0 Q650.9 363.4 651.3 380.9 M903.4 182.9 Q890.4 196.7 887.4 210.8 M671.6 246.2 Q652.4 231.8 642.8 225.2 M1150.3 701.9 Q1162.6 712.6 1168.6 724.9 M1330.5 532.0 Q1311.6 541.8 1290.6 552.5 M1287.4 512.4 Q1287.4 529.6 1290.6 552.5 M766.2 644.0 Q753.9 638.7 744.6 626.5 M836.3 494.3 Q842.8 474.3 846.9 458.5 M761.8 741.2 Q763.8 727.2 774.1 717.8 M1149.9 679.0 Q1155.3 667.1 1156.7 656.3 M396.8 488.2 Q390.5 477.5 381.0 460.6 M1464.3 337.0 Q1444.0 347.8 1431.4 355.1 M1260.5 450.7 Q1230.2 451.8 1209.1 446.6 M1150.3 701.9 Q1166.4 688.9 1188.8 680.6 M619.4 264.7 Q637.6 260.4 646.6 258.8 M229.9 793.6 Q233.9 810.5 243.5 819.7 M997.8 450.7 Q987.2 443.1 974.5 427.7 M334.1 584.3 Q320.9 593.0 309.8 601.6 M493.6 507.2 Q481.5 503.0 460.3 498.6 M1469.5 599.5 Q1460.5 592.2 1441.8 591.1 M206.4 339.6 Q207.4 315.7 201.7 298.5 M419.2 166.9 Q408.1 166.1 396.5 175.3 M535.6 622.8 Q547.5 634.9 566.0 638.1 M247.7 285.4 Q224.2 295.0 201.7 298.5 M400.1 387.8 Q408.1 380.0 421.1 375.2 M1149.9 679.0 Q1122.3 682.6 1102.8 685.2 M1261.0 736.1 Q1279.2 736.4 1290.3 736.4 M1220.9 807.3 Q1219.7 798.0 1221.0 780.1 M393.4 772.6 Q399.9 762.7 398.6 749.4 M278.6 628.7 Q280.8 642.9 291.6 654.7 M423.2 478.0 Q431.4 469.9 440.6 452.7 M409.1 450.2 Q398.0 439.3 389.6 425.1 M520.3 207.8 Q533.0 212.9 543.0 220.6 M621.9 812.9 Q647.0 818.3 671.7 820.1 M1190.1 543.8 Q1168.7 538.3 1139.1 532.8 M337.4 535.4 Q357.5 528.0 380.4 511.2 M286.3 735.3 Q270.1 747.4 262.8 752.9 M526.1 358.7 Q519.7 347.8 509.7 335.8 M880.1 743.5 Q895.3 748.7 911.5 748.9 M236.2 349.7 Q224.5 360.3 205.1 366.2 M594.0 318.9 Q611.9 299.8 624.9 290.1 M1493.4 554.4 Q1475.0 548.8 1460.0 550.5 M637.8 443.0 Q630.1 448.0 613.3 445.1 M1102.6 652.0 Q1076.5 654.6 1057.4 655.5 M836.3 494.3 Q854.0 496.1 870.1 506.9 M1021.6 694.9 Q1040.5 710.2 1061.6 720.6 M1217.6 311.8 Q1231.4 288.8 1242.4 270.2 M1439.0 795.5 Q1447.5 805.9 1450.7 820.5 M369.7 766.5 Q384.6 757.2 398.6 749.4 M660.5 184.2 Q686.5 187.3 702.9 187.4 M386.8 242.9 Q378.7 255.7 364.5 264.9 M724.1 394.7 Q699.1 390.5 676.6 377.1 M1049.5 363.9 Q1065.1 365.1 1076.6 362.5 M536.6 679.1 Q557.4 673.9 582.7 675.4 M398.6 749.4 Q407.5 745.0 415.0 734.1 M884.1 261.9 Q900.0 253.3 910.0 247.7 M702.9 187.4 Q708.9 198.0 722.1 208.3 M248.6 451.6 Q267.0 434.9 277.9 425.0 M1179.3 269.9 Q1201.8 265.8 1219.6 268.2 M962.9 338.7 Q939.0 334.8 918.8 339.8 M1259.7 654.1 Q1244.4 655.7 1233.0 659.6 M987.8 681.4 Q997.6 708.8 998.1 726.8 M1273.4 271.7 Q1243.4 268.1 1219.6 268.2 M229.2 470.2 Q250.9 471.0 263.8 478.0 M1261.0 736.1 Q1249.7 723.1 1242.1 711.3 M535.6 622.8 Q535.7 603.7 543.6 589.4 M909.3 206.5 Q897.3 207.5 887.4 210.8 M630.6 694.3 Q655.2 697.5 670.6 705.4 M1464.3 195.8 Q1463.8 223.5 1469.3 243.0 M868.9 472.1 Q852.1 486.6 836.3 494.3 M233.0 742.9 Q241.2 763.4 246.6 778.2 M1361.6 185.0 Q1368.1 192.7 1378.3 207.4 M1200.1 500.6 Q1217.6 513.6 1229.9 527.3 M369.7 766.5 Q364.7 792.8 358.5 815.7 M372.4 403.4 Q383.5 412.0 389.6 425.1 M751.3 600.5 Q759.3 593.4 770.0 577.9 M428.2 318.3 Q441.8 307.1 454.7 300.1 M470.3 272.3 Q463.8 283.8 454.7 300.1 M938.9 628.0 Q943.8 639.5 943.3 660.2 M526.7 394.6 Q547.8 396.6 562.3 397.3 M1261.0 736.1 Q1249.9 756.6 1241.7 768.3 M315.9 203.0 Q328.1 192.8 345.0 187.8 M585.6 653.5 Q571.5 646.3 566.0 638.1 M579.5 468.7 Q598.9 458.7 613.3 445.1 M419.4 341.2 Q432.6 349.9 447.6 352.5 M311.2 232.5 Q309.6 215.9 315.9 203.0 M386.8 242.9 Q397.5 230.7 405.3 209.2 M357.5 457.2 Q374.9 443.1 389.6 425.1 M308.4 731.0 Q309.3 707.3 304.7 685.8 M1021.6 694.9 Q1009.1 690.6 987.8 681.4 M676.6 377.1 Q662.4 377.9 651.3 380.9 M1025.0 585.5 Q1023.5 573.1 1016.0 563.7 M254.0 179.9 Q246.4 196.8 245.1 206.4 M556.3 196.9 Q577.5 188.4 598.1 179.4 M1045.6 693.6 Q1035.3 698.2 1021.6 694.9 M879.1 550.3 Q871.0 527.0 870.1 506.9 M1100.4 557.9 Q1103.5 570.8 1115.2 585.4 M947.3 427.2 Q937.8 415.4 928.2 396.6 M556.3 196.9 Q540.0 203.1 520.3 207.8 M516.1 544.7 Q528.9 567.8 543.6 589.4 M951.0 466.6 Q932.0 464.8 917.5 456.1 M911.5 748.9 Q899.6 768.9 881.9 782.1 M1200.1 500.6 Q1209.2 486.5 1225.2 468.9 M919.3 683.4 Q905.5 693.9 886.5 704.3 M1464.3 195.8 Q1458.1 209.3 1444.0 214.8 M836.5 691.7 Q863.9 701.2 886.5 704.3 M579.5 468.7 Q565.0 474.8 547.6 473.3 M1215.2 757.9 Q1224.7 765.2 1241.7 768.3 M1330.5 532.0 Q1318.5 554.0 1302.5 573.7 M867.6 573.2 Q863.2 593.7 863.2 622.9 M894.0 406.7 Q883.4 415.9 870.7 418.5 M390.9 332.9 Q394.5 341.9 402.5 356.6 M719.8 790.8 Q729.5 777.2 744.7 771.6 M1333.7 372.4 Q1333.3 361.4 1329.3 341.0 M666.5 670.4 Q671.6 686.5 670.6 705.4 M290.5 225.0 Q282.4 233.6 270.4 250.8 M919.3 683.4 Q934.7 670.0 943.3 660.2 M1100.4 557.9 Q1114.8 546.6 1139.1 532.8 M1135.2 177.9 Q1136.5 197.0 1145.0 220.7 M270.4 250.8 Q250.3 239.2 238.9 228.8 M569.9 783.4 Q569.9 803.7 568.8 817.7 M706.3 741.0 Q680.8 748.5 664.6 749.5 M751.3 600.5 Q754.9 619.5 766.2 644.0 M1346.2 509.9 Q1335.2 496.6 1321.6 486.5 M966.4 734.2 Q980.6 731.2 998.1 726.8 M1458.3 426.6 Q1472.0 422.4 1491.3 412.2 M308.4 731.0 Q319.2 727.6 335.9 717.5 M469.2 763.8 Q463.1 789.3 450.9 813.9 M1217.6 311.8 Q1220.6 328.7 1233.0 340.0 M417.6 242.4 Q412.4 257.2 416.7 271.9 M334.1 584.3 Q344.2 566.7 355.9 557.8 M708.1 428.7 Q714.2 446.5 717.7 459.7 M286.3 735.3 Q272.3 725.2 256.7 717.1 M814.8 706.4 Q794.6 713.0 774.1 717.8 M761.8 741.2 Q750.5 760.1 744.7 771.6 M205.1 693.3 Q208.6 680.3 202.3 661.2 M605.4 580.3 Q622.3 571.2 630.0 565.4 M585.6 653.5 Q589.0 660.2 582.7 675.4 M849.6 516.5 Q842.8 501.8 836.3 494.3 M486.8 667.7 Q484.7 683.1 483.5 694.8 M630.6 694.3 Q639.3 704.3 643.8 715.1 M1064.2 776.5 Q1070.6 763.6 1080.2 756.9 M423.2 478.0 Q440.8 486.1 460.3 498.6 M389.3 711.3 Q390.9 732.7 398.6 749.4 M1434.3 621.4 Q1448.7 633.4 1462.8 646.7 M1144.5 300.6 Q1159.6 302.6 1180.8 300.5 M1246.9 596.8 Q1245.1 568.7 1249.4 545.3 M1229.9 527.3 Q1240.2 538.3 1249.4 545.3 M749.8 711.5 Q766.6 717.2 774.1 717.8 M1363.1 749.0 Q1378.1 773.3 1384.2 789.2 M1355.1 579.7 Q1373.2 584.1 1386.8 584.1 M1076.6 362.5 Q1064.0 373.6 1060.2 390.7 M434.0 549.4 Q430.7 577.2 437.1 597.6 M682.7 772.8 Q670.9 783.5 654.7 791.6 M699.6 607.0 Q676.1 595.7 657.3 587.2 M1402.7 729.8 Q1409.8 708.0 1423.7 683.6 M293.9 324.1 Q291.2 331.4 278.6 342.7 M531.0 272.9 Q512.6 261.8 503.3 257.1 M986.4 381.7 Q997.8 378.5 1012.0 367.4 M566.0 638.1 Q577.4 656.3 582.7 675.4 M383.8 199.3 Q386.2 183.3 396.5 175.3 M606.8 552.1 Q602.6 568.9 605.4 580.3 M334.1 584.3 Q345.0 615.7 356.4 637.3 M706.3 741.0 Q719.2 735.7 723.8 724.4 M683.5 797.0 Q698.0 812.2 712.9 821.0 M1381.7 458.0 Q1367.1 464.0 1359.9 477.8 M883.9 811.8 Q904.9 800.2 924.6 788.5 M1386.8 584.1 Q1397.2 581.3 1413.3 583.6 M1190.1 543.8 Q1186.9 562.4 1193.2 572.8 M311.2 232.5 Q330.3 226.5 345.2 211.5 M251.3 679.9 Q258.8 697.9 256.7 717.1 M1459.5 526.6 Q1441.2 526.2 1418.2 528.0 M843.7 310.4 Q851.2 330.9 852.4 344.6 M1015.4 330.3 Q1028.7 325.4 1049.5 330.3 M283.3 816.1 Q260.5 818.8 243.5 819.7 M550.2 250.6 Q539.4 256.9 531.0 272.9 M958.3 514.8 Q970.7 524.5 976.4 528.6 M1049.5 363.9 Q1054.5 372.7 1060.2 390.7 M1084.3 623.3 Q1074.8 639.7 1057.4 655.5 M1399.7 636.3 Q1391.5 654.5 1391.8 676.3 M803.5 484.8 Q795.9 505.0 785.8 517.5 M814.8 706.4 Q825.5 700.4 836.5 691.7 M1440.3 264.8 Q1426.4 259.3 1418.5 259.0 M290.5 225.0 Q307.2 212.8 315.9 203.0 M1418.2 528.0 Q1429.3 513.9 1448.4 498.0 M1168.6 724.9 Q1149.9 738.5 1138.7 758.1 M367.4 678.3 Q361.5 658.7 356.4 637.3 M331.4 405.3 Q335.3 394.3 336.5 379.1 M947.3 427.2 Q948.6 442.6 951.0 466.6 M1233.0 659.6 Q1251.5 663.3 1265.5 675.8 M993.2 499.2 Q1000.3 488.0 1008.0 478.9 M613.3 445.1 Q603.9 446.6 591.1 443.8 M868.9 472.1 Q866.9 491.0 870.1 506.9 M653.8 527.7 Q668.9 512.8 680.2 498.5 M972.0 574.8 Q970.6 555.8 976.4 528.6 M565.1 325.1 Q550.5 307.3 533.8 298.3 M1459.5 526.6 Q1451.3 517.2 1448.4 498.0 M1262.2 501.3 Q1243.3 513.2 1229.9 527.3 M1343.3 804.5 Q1366.6 800.1 1384.2 789.2 M283.3 816.1 Q289.9 803.1 293.8 785.2 M671.6 246.2 Q668.9 255.6 675.4 273.1 M696.2 552.1 Q684.5 558.2 663.2 558.1 M1364.9 680.6 Q1344.1 682.0 1332.5 692.4 M1166.3 381.1 Q1143.8 394.3 1126.5 398.9 M270.4 250.8 Q256.3 269.8 247.7 285.4 M278.6 342.7 Q275.8 354.5 264.4 363.6 M417.6 242.4 Q440.8 243.2 455.6 248.7 M560.6 439.5 Q544.8 435.9 535.9 442.0 M524.3 175.1 Q513.6 176.4 497.8 185.6 M1302.5 573.7 Q1301.3 565.2 1290.6 552.5 M524.3 175.1 Q537.2 189.1 556.3 196.9 M986.4 381.7 Q964.3 381.3 948.9 380.7 M598.3 795.1 Q601.2 781.4 611.9 762.0 M1410.4 235.3 Q1431.1 229.2 1444.0 214.8 M1288.4 481.9 Q1300.0 475.4 1321.6 461.9 M472.1 617.4 Q453.6 626.1 434.0 628.4 M938.9 628.0 Q952.5 648.2 965.9 666.0 M1144.5 300.6 Q1134.0 300.8 1121.5 295.0 M749.8 711.5 Q753.3 689.3 765.2 676.0 M278.6 628.7 Q260.6 629.2 241.8 634.0 M276.3 672.8 Q282.9 658.8 291.6 654.7 M1402.7 729.8 Q1399.7 698.3 1391.8 676.3 M540.9 800.7 Q558.7 795.2 569.9 783.4 M254.0 179.9 Q266.8 172.8 280.4 173.3 M1144.6 355.3 Q1134.6 345.1 1121.6 340.8 M1353.1 222.0 Q1365.0 210.8 1378.3 207.4 M1138.6 277.4 Q1146.3 289.5 1144.5 300.6 M600.9 400.7 Q613.2 383.6 628.5 374.6 M1139.1 532.8 Q1124.8 517.1 1105.8 494.4 M1288.4 481.9 Q1277.9 462.3 1260.5 450.7 M345.2 211.5 Q343.8 197.7 345.0 187.8 M1421.5 181.0 Q1402.6 190.7 1378.3 207.4 M675.4 273.1 Q701.4 269.1 725.3 255.5 M243.9 530.3 Q234.2 525.0 219.2 529.6 M1228.7 627.0 Q1226.6 639.5 1233.0 659.6 M423.2 478.0 Q418.1 465.1 409.1 450.2 M278.6 628.7 Q294.4 614.7 309.8 601.6 M1261.0 736.1 Q1239.8 728.9 1220.6 719.4 M449.2 225.0 Q453.8 241.0 455.6 248.7 M938.9 628.0 Q951.1 618.8 958.7 603.7 M955.4 762.7 Q971.5 763.4 979.3 757.3 M1064.2 776.5 Q1049.1 766.8 1029.7 766.4 M600.9 400.7 Q583.4 402.5 562.3 397.3 M455.5 662.7 Q468.8 682.5 483.5 694.8 M741.5 665.5 Q725.9 681.1 716.7 687.9 M704.4 380.6 Q711.9 362.2 720.5 339.7 M1233.0 340.0 Q1213.0 357.2 1197.9 378.4 M502.2 485.6 Q496.4 494.6 493.6 507.2 M470.3 272.3 Q458.9 259.9 455.6 248.7 M615.7 635.1 Q611.3 629.9 597.2 621.6 M1215.2 757.9 Q1222.4 771.6 1221.0 780.1 M666.5 670.4 Q653.9 670.4 634.5 660.5 M1348.5 629.9 Q1376.6 630.8 1399.7 636.3 M966.6 784.8 Q970.5 770.2 979.3 757.3 M419.2 166.9 Q407.5 185.3 405.3 209.2 M849.6 516.5 Q863.7 515.9 870.1 506.9 M434.0 549.4 Q407.1 559.4 383.6 564.1 M938.9 628.0 Q933.9 607.9 923.3 580.0 M201.4 417.3 Q206.2 392.1 205.1 366.2 M335.5 821.3 Q343.0 821.8 358.5 815.7 M1183.6 356.7 Q1188.9 368.8 1197.9 378.4 M646.6 258.8 Q634.4 274.8 624.9 290.1 M245.1 206.4 Q234.1 198.0 213.8 196.4 M1172.0 599.6 Q1187.5 615.2 1202.4 627.8 M1481.9 715.2 Q1478.4 707.2 1474.1 690.4 M1187.7 232.0 Q1165.4 230.5 1145.0 220.7 M470.3 272.3 Q488.7 269.4 503.3 257.1 M1100.4 557.9 Q1099.0 523.3 1105.8 494.4 M1421.5 181.0 Q1430.6 202.0 1444.0 214.8 M560.6 439.5 Q549.2 454.0 547.6 473.3 M719.8 790.8 Q703.8 798.8 683.5 797.0 M389.3 711.3 Q375.1 694.2 367.4 678.3 M535.6 622.8 Q538.0 652.8 536.6 679.1 M1355.1 579.7 Q1331.3 579.2 1302.5 573.7 M1242.1 711.3 Q1251.2 691.1 1265.5 675.8 M483.5 694.8 Q499.2 701.9 524.3 705.1 M1264.4 353.1 Q1273.8 353.7 1288.9 359.2 M882.4 322.6 Q867.7 318.0 843.7 310.4 M1221.0 780.1 Q1232.2 775.8 1241.7 768.3 M1166.3 381.1 Q1183.1 381.7 1197.9 378.4 M720.5 339.7 Q701.9 331.8 687.1 332.6 M1434.3 621.4 Q1447.5 605.6 1469.5 599.5 M243.9 530.3 Q235.7 548.6 230.3 574.1 M796.5 781.3 Q776.4 797.4 764.1 813.6 M499.6 758.4 Q515.4 762.2 521.8 762.2 M1027.4 411.2 Q1017.4 392.0 1012.0 367.4 M497.8 185.6 Q492.0 206.1 492.6 234.6 M637.8 443.0 Q648.2 440.7 662.6 440.3 M486.8 667.7 Q507.5 685.9 524.3 705.1 M207.6 761.0 Q210.2 738.0 208.2 723.2 M894.0 406.7 Q885.2 396.4 867.7 389.2 M1273.4 271.7 Q1261.2 266.3 1242.4 270.2 M823.3 276.4 Q846.8 254.5 863.8 238.0 M657.3 587.2 Q663.8 575.7 663.2 558.1 M1188.8 680.6 Q1174.5 666.2 1156.7 656.3 M1355.1 579.7 Q1355.1 563.4 1365.0 553.4 M453.5 375.5 Q441.3 372.0 421.1 375.2 M550.2 250.6 Q548.2 236.5 543.0 220.6 M621.9 812.9 Q639.9 799.1 654.7 791.6 M349.0 515.8 Q327.8 516.9 313.8 526.1 M484.4 794.6 Q505.3 797.8 516.6 803.3 M1286.6 244.3 Q1303.1 235.4 1316.6 225.1 M1464.3 337.0 Q1457.4 349.7 1456.0 371.0 M458.4 566.9 Q442.9 585.8 437.1 597.6 M262.8 752.9 Q251.0 770.2 246.6 778.2 M998.6 579.3 Q990.9 598.4 985.9 612.9 M483.5 694.8 Q458.6 707.6 440.9 714.7 M719.8 790.8 Q739.5 800.9 764.1 813.6 M383.6 564.1 Q370.0 557.1 355.9 557.8 M1316.6 225.1 Q1332.3 226.5 1353.1 222.0 M238.9 228.8 Q224.2 211.4 213.8 196.4 M324.9 494.5 Q322.0 507.5 313.8 526.1" fill="none" stroke="#fff" stroke-width="1" stroke-opacity=".42" stroke-linecap="round"/>
<path d="M330.0 170.0 C341.5 172.7 379.3 182.0 399.0 186.0 C418.7 190.0 431.2 190.7 448.4 194.0 C465.5 197.4 487.1 198.0 502.0 206.0 C516.9 214.0 525.5 229.7 537.7 242.1 C549.9 254.4 563.2 268.0 575.0 280.0 C586.8 292.0 597.7 302.5 608.5 313.8 C619.3 325.1 620.4 340.1 640.0 348.0 C659.6 355.9 708.0 344.8 726.0 361.0 C744.0 377.2 744.3 431.0 748.0 445.0" fill="none" stroke="#fff" stroke-width="1.5" stroke-opacity="0.80" stroke-linecap="round" stroke-linejoin="round"/>
<path d="M470.0 170.0 C458.2 172.7 411.1 172.9 399.0 186.0 C386.9 199.1 398.9 226.9 397.6 248.9 C396.3 270.9 391.4 301.0 391.0 318.0 C390.6 335.0 396.1 336.4 395.0 351.0 C393.9 365.6 388.5 388.0 384.6 405.4 C380.8 422.7 374.4 442.1 372.0 455.0 C369.6 467.9 374.5 465.5 370.0 483.0 C365.5 500.5 352.5 535.5 345.0 560.0 C337.5 584.5 330.8 608.5 325.0 630.0 C319.2 651.5 312.5 679.2 310.0 689.0" fill="none" stroke="#fff" stroke-width="1.5" stroke-opacity="0.80" stroke-linecap="round" stroke-linejoin="round"/>
<path d="M206.0 306.0 C213.3 305.0 235.1 300.5 250.0 300.0 C264.9 299.5 279.5 301.2 295.1 302.7 C310.7 304.3 327.6 306.8 343.6 309.3 C359.5 311.9 374.6 323.7 391.0 318.0 C407.4 312.3 419.2 278.0 442.0 275.0 C464.8 272.0 505.8 299.2 528.0 300.0 C550.2 300.8 567.2 283.3 575.0 280.0" fill="none" stroke="#fff" stroke-width="1.5" stroke-opacity="0.80" stroke-linecap="round" stroke-linejoin="round"/>
<path d="M399.0 186.0 C393.2 192.0 375.7 210.5 364.2 222.0 C352.7 233.5 342.8 246.2 330.0 255.0 C317.2 263.8 300.5 267.3 287.2 274.8 C273.8 282.3 263.5 290.8 250.0 300.0 C236.5 309.2 213.3 325.0 206.0 330.0" fill="none" stroke="#fff" stroke-width="1.5" stroke-opacity="0.80" stroke-linecap="round" stroke-linejoin="round"/>
<path d="M399.0 186.0 C402.6 193.0 413.2 213.4 420.4 228.2 C427.5 243.1 438.0 259.2 442.0 275.0 C446.0 290.8 443.4 307.3 444.4 322.9 C445.4 338.5 446.2 352.5 448.0 368.6 C449.8 384.8 447.2 406.4 455.0 420.0 C462.8 433.6 487.5 440.3 495.0 450.0 C502.5 459.7 499.2 473.3 500.0 478.0" fill="none" stroke="#fff" stroke-width="1.5" stroke-opacity="0.80" stroke-linecap="round" stroke-linejoin="round"/>
<path d="M225.0 510.0 C232.9 508.5 255.7 503.7 272.4 500.8 C289.0 497.8 308.4 495.3 324.7 492.4 C341.0 489.4 352.1 485.3 370.0 483.0 C387.9 480.7 410.3 479.4 432.0 478.6 C453.7 477.7 481.2 477.8 500.0 478.0 C518.8 478.2 537.5 479.7 545.0 480.0" fill="none" stroke="#fff" stroke-width="1.5" stroke-opacity="0.80" stroke-linecap="round" stroke-linejoin="round"/>
<path d="M206.0 330.0 C207.1 337.6 210.4 359.9 212.5 375.4 C214.5 391.0 216.4 408.8 218.1 423.2 C219.8 437.7 221.6 447.8 222.8 462.3 C223.9 476.7 220.4 495.2 225.0 510.0 C229.6 524.8 243.3 537.9 250.4 551.2 C257.6 564.5 260.9 576.1 267.8 589.7 C274.8 603.3 285.0 616.4 292.0 633.0 C299.0 649.6 307.0 679.7 310.0 689.0" fill="none" stroke="#fff" stroke-width="1.5" stroke-opacity="0.80" stroke-linecap="round" stroke-linejoin="round"/>
<path d="M206.0 380.0 C217.1 381.8 251.2 386.7 272.6 391.0 C293.9 395.3 314.2 402.6 334.0 406.0 C353.8 409.4 371.4 409.0 391.6 411.4 C411.7 413.7 435.2 420.7 455.0 420.0 C474.8 419.3 493.0 411.4 510.5 407.2 C528.0 403.1 551.7 397.0 560.0 395.0" fill="none" stroke="#fff" stroke-width="1.5" stroke-opacity="0.80" stroke-linecap="round" stroke-linejoin="round"/>
<path d="M310.0 689.0 C318.0 689.1 342.8 688.5 358.3 689.4 C373.8 690.3 387.7 692.8 403.0 694.4 C418.3 696.0 435.1 696.6 450.0 699.0 C464.9 701.4 477.7 706.4 492.3 708.8 C506.9 711.3 522.6 711.0 537.7 713.7 C552.8 716.4 575.4 723.1 583.0 725.0" fill="none" stroke="#fff" stroke-width="1.5" stroke-opacity="0.80" stroke-linecap="round" stroke-linejoin="round"/>
<path d="M310.0 689.0 L250.0 715.0" fill="none" stroke="#fff" stroke-width="1.5" stroke-opacity="0.80" stroke-linecap="round" stroke-linejoin="round"/>
<path d="M310.0 689.0 C321.7 693.3 355.0 708.3 380.0 715.0 C405.0 721.7 435.9 727.0 460.0 729.0 C484.1 731.0 504.4 727.5 524.9 726.9 C545.4 726.2 573.3 725.3 583.0 725.0" fill="none" stroke="#fff" stroke-width="1.5" stroke-opacity="0.80" stroke-linecap="round" stroke-linejoin="round"/>
<path d="M310.0 689.0 C313.3 700.8 321.2 743.7 330.0 760.0 C338.8 776.3 351.1 776.9 362.8 787.1 C374.4 797.2 393.8 815.3 400.0 821.0" fill="none" stroke="#fff" stroke-width="1.5" stroke-opacity="0.80" stroke-linecap="round" stroke-linejoin="round"/>
<path d="M400.0 821.0 C410.2 817.6 441.1 807.4 461.1 800.6 C481.1 793.8 499.7 792.6 520.0 780.0 C540.3 767.4 572.5 734.2 583.0 725.0" fill="none" stroke="#fff" stroke-width="1.5" stroke-opacity="0.80" stroke-linecap="round" stroke-linejoin="round"/>
<path d="M292.0 633.0 C302.1 630.2 331.3 621.8 352.7 616.3 C374.0 610.8 400.2 599.3 420.0 600.0 C439.8 600.7 455.0 613.6 471.7 620.3 C488.3 626.9 514.1 640.2 520.0 640.0 C525.9 639.8 500.3 621.5 507.0 619.0 C513.7 616.5 541.8 623.0 560.1 625.0 C578.5 627.0 598.7 636.8 617.0 631.0 C635.3 625.2 661.2 596.8 670.0 590.0" fill="none" stroke="#fff" stroke-width="1.5" stroke-opacity="0.80" stroke-linecap="round" stroke-linejoin="round"/>
<path d="M370.0 483.0 C376.8 487.9 397.4 503.1 410.7 512.6 C424.1 522.1 448.5 525.4 450.0 540.0 C451.5 554.6 422.9 581.4 420.0 600.0 C417.1 618.6 427.5 635.1 432.5 651.6 C437.5 668.1 445.4 686.1 450.0 699.0 C454.6 711.9 458.3 724.0 460.0 729.0" fill="none" stroke="#fff" stroke-width="1.5" stroke-opacity="0.80" stroke-linecap="round" stroke-linejoin="round"/>
<path d="M495.0 450.0 C491.8 457.8 483.1 481.7 475.6 496.7 C468.1 511.7 454.3 532.8 450.0 540.0" fill="none" stroke="#fff" stroke-width="1.5" stroke-opacity="0.80" stroke-linecap="round" stroke-linejoin="round"/>
<path d="M583.0 725.0 C586.3 717.0 596.8 692.7 602.5 677.1 C608.2 661.4 605.8 645.5 617.0 631.0 C628.2 616.5 656.2 608.5 670.0 590.0 C683.8 571.5 687.0 544.2 700.0 520.0 C713.0 495.8 740.0 457.5 748.0 445.0" fill="none" stroke="#fff" stroke-width="1.5" stroke-opacity="0.80" stroke-linecap="round" stroke-linejoin="round"/>
<path d="M583.0 725.0 C592.4 721.7 621.5 711.1 639.3 705.3 C657.2 699.4 669.9 697.5 690.0 690.0 C710.1 682.5 735.3 668.3 760.0 660.0 C784.7 651.7 825.0 643.3 838.0 640.0" fill="none" stroke="#fff" stroke-width="1.5" stroke-opacity="0.80" stroke-linecap="round" stroke-linejoin="round"/>
<path d="M583.0 725.0 C592.5 730.8 621.8 752.6 640.0 760.0 C658.2 767.4 674.1 766.7 692.1 769.7 C710.1 772.7 728.8 779.0 748.0 778.0 C767.2 777.0 788.5 767.4 807.3 763.6 C826.1 759.7 852.1 756.4 861.0 755.0" fill="none" stroke="#fff" stroke-width="1.5" stroke-opacity="0.80" stroke-linecap="round" stroke-linejoin="round"/>
<path d="M583.0 725.0 C587.4 732.5 600.0 753.8 609.5 769.8 C619.0 785.8 634.9 812.5 640.0 821.0" fill="none" stroke="#fff" stroke-width="1.5" stroke-opacity="0.80" stroke-linecap="round" stroke-linejoin="round"/>
<path d="M690.0 690.0 C692.5 675.8 694.7 622.1 705.0 605.0 C715.3 587.9 736.2 592.5 752.1 587.5 C767.9 582.5 792.0 577.1 800.0 575.0" fill="none" stroke="#fff" stroke-width="1.5" stroke-opacity="0.80" stroke-linecap="round" stroke-linejoin="round"/>
<path d="M640.0 566.0 C645.0 570.0 659.2 583.5 670.0 590.0 C680.8 596.5 699.2 602.5 705.0 605.0" fill="none" stroke="#fff" stroke-width="1.5" stroke-opacity="0.80" stroke-linecap="round" stroke-linejoin="round"/>
<path d="M748.0 778.0 L690.0 821.0" fill="none" stroke="#fff" stroke-width="1.5" stroke-opacity="0.80" stroke-linecap="round" stroke-linejoin="round"/>
<path d="M748.0 778.0 C748.6 768.5 749.8 740.4 751.8 720.7 C753.8 701.1 755.2 676.7 760.0 660.0 C764.8 643.3 773.9 634.7 780.6 620.6 C787.2 606.4 794.0 591.3 800.0 575.0 C806.0 558.7 811.0 540.6 816.8 522.8 C822.6 504.9 832.0 477.1 835.0 468.0" fill="none" stroke="#fff" stroke-width="1.5" stroke-opacity="0.80" stroke-linecap="round" stroke-linejoin="round"/>
<path d="M720.0 233.0 C718.8 229.8 711.8 221.2 713.0 214.0 C714.2 206.8 721.7 195.5 727.0 190.0 C732.3 184.5 742.0 182.5 745.0 181.0" fill="none" stroke="#fff" stroke-width="1.5" stroke-opacity="0.80" stroke-linecap="round" stroke-linejoin="round"/>
<path d="M720.0 233.0 C719.2 244.2 714.0 278.7 715.0 300.0 C716.0 321.3 724.2 350.8 726.0 361.0" fill="none" stroke="#fff" stroke-width="1.5" stroke-opacity="0.80" stroke-linecap="round" stroke-linejoin="round"/>
<path d="M630.0 215.0 C636.9 217.0 656.6 224.1 671.6 227.1 C686.6 230.1 711.9 232.0 720.0 233.0" fill="none" stroke="#fff" stroke-width="1.5" stroke-opacity="0.80" stroke-linecap="round" stroke-linejoin="round"/>
<path d="M502.0 206.0 C512.4 206.7 542.8 208.8 564.1 210.3 C585.5 211.8 619.0 214.2 630.0 215.0" fill="none" stroke="#fff" stroke-width="1.5" stroke-opacity="0.80" stroke-linecap="round" stroke-linejoin="round"/>
<path d="M575.0 280.0 L630.0 215.0" fill="none" stroke="#fff" stroke-width="1.5" stroke-opacity="0.80" stroke-linecap="round" stroke-linejoin="round"/>
<path d="M640.0 348.0 C633.3 352.4 613.4 366.8 600.1 374.6 C586.7 382.5 566.7 391.6 560.0 395.0" fill="none" stroke="#fff" stroke-width="1.5" stroke-opacity="0.80" stroke-linecap="round" stroke-linejoin="round"/>
<path d="M640.0 348.0 C643.3 356.7 656.3 382.8 660.0 400.0 C663.7 417.2 661.5 435.4 662.4 450.9 C663.4 466.4 664.6 478.1 665.8 493.0 C667.1 507.9 669.1 524.2 669.8 540.4 C670.5 556.6 670.0 581.7 670.0 590.0" fill="none" stroke="#fff" stroke-width="1.5" stroke-opacity="0.80" stroke-linecap="round" stroke-linejoin="round"/>
<path d="M748.0 445.0 C762.5 448.8 810.6 463.6 835.0 468.0 C859.4 472.4 876.1 469.8 894.5 471.7 C912.8 473.6 927.0 477.8 945.1 479.2 C963.2 480.6 983.8 477.9 1003.0 480.0 C1022.2 482.1 1040.5 490.3 1060.0 492.0 C1079.5 493.7 1104.7 492.2 1120.0 490.0 C1135.3 487.8 1141.0 483.3 1152.0 479.0 C1163.0 474.7 1174.7 469.2 1186.0 464.0 C1197.3 458.8 1209.8 453.7 1220.0 448.0 C1230.2 442.3 1238.7 436.0 1247.0 430.0 C1255.3 424.0 1262.5 418.7 1270.0 412.0 C1277.5 405.3 1287.0 396.7 1292.0 390.0 C1297.0 383.3 1287.0 378.5 1300.0 372.0 C1313.0 365.5 1351.0 353.9 1370.0 351.0 C1389.0 348.1 1398.8 353.0 1413.8 354.3 C1428.8 355.7 1447.6 359.4 1460.0 359.0 C1472.4 358.6 1483.3 353.2 1488.0 352.0" fill="none" stroke="#fff" stroke-width="1.5" stroke-opacity="0.80" stroke-linecap="round" stroke-linejoin="round"/>
<path d="M748.0 445.0 C750.7 452.4 759.0 475.2 764.2 489.5 C769.5 503.8 773.4 516.5 779.3 530.8 C785.3 545.0 790.2 556.8 800.0 575.0 C809.8 593.2 831.7 629.2 838.0 640.0" fill="none" stroke="#fff" stroke-width="1.5" stroke-opacity="0.80" stroke-linecap="round" stroke-linejoin="round"/>
<path d="M838.0 640.0 C839.5 650.0 843.3 680.6 847.1 699.8 C851.0 719.0 862.2 734.8 861.0 755.0 C859.8 775.2 843.5 810.0 840.0 821.0" fill="none" stroke="#fff" stroke-width="1.5" stroke-opacity="0.80" stroke-linecap="round" stroke-linejoin="round"/>
<path d="M838.0 640.0 C843.0 645.3 856.8 661.4 868.0 671.8 C879.2 682.1 893.2 685.5 905.0 702.0 C916.8 718.5 929.8 751.2 939.0 771.0 C948.2 790.8 956.5 812.7 960.0 821.0" fill="none" stroke="#fff" stroke-width="1.5" stroke-opacity="0.80" stroke-linecap="round" stroke-linejoin="round"/>
<path d="M838.0 640.0 C847.8 639.4 876.6 637.7 896.8 636.7 C917.0 635.7 936.3 637.3 959.0 634.0 C981.7 630.7 1011.9 620.0 1033.0 617.0 C1054.1 614.0 1068.7 617.2 1085.8 616.1 C1102.8 615.1 1117.8 611.5 1135.1 610.5 C1152.5 609.5 1175.5 615.4 1190.0 610.0 C1204.5 604.6 1216.7 583.3 1222.0 578.0" fill="none" stroke="#fff" stroke-width="1.5" stroke-opacity="0.80" stroke-linecap="round" stroke-linejoin="round"/>
<path d="M838.0 640.0 C842.7 631.0 856.0 604.9 866.3 585.7 C876.7 566.6 892.8 543.2 900.0 525.0 C907.2 506.8 905.5 491.7 909.5 476.5 C913.6 461.2 919.7 448.5 924.2 433.6 C928.6 418.7 925.0 399.3 936.0 387.0 C947.0 374.7 967.3 364.2 990.0 360.0 C1012.7 355.8 1058.3 361.7 1072.0 362.0" fill="none" stroke="#fff" stroke-width="1.5" stroke-opacity="0.80" stroke-linecap="round" stroke-linejoin="round"/>
<path d="M830.0 344.0 C835.0 345.3 842.3 344.8 860.0 352.0 C877.7 359.2 915.1 378.9 936.0 387.0 C956.9 395.1 969.7 394.9 985.2 400.4 C1000.7 405.9 1021.7 416.7 1029.0 420.0" fill="none" stroke="#fff" stroke-width="1.5" stroke-opacity="0.80" stroke-linecap="round" stroke-linejoin="round"/>
<path d="M748.0 445.0 C755.0 444.2 770.0 442.8 790.0 440.0 C810.0 437.2 841.3 431.3 868.0 428.0 C894.7 424.7 923.2 421.3 950.0 420.0 C976.8 418.7 1015.8 420.0 1029.0 420.0" fill="none" stroke="#fff" stroke-width="1.5" stroke-opacity="0.80" stroke-linecap="round" stroke-linejoin="round"/>
<path d="M860.0 352.0 C861.3 364.7 872.2 408.7 868.0 428.0 C863.8 447.3 840.5 461.3 835.0 468.0" fill="none" stroke="#fff" stroke-width="1.5" stroke-opacity="0.80" stroke-linecap="round" stroke-linejoin="round"/>
<path d="M860.0 352.0 C863.4 343.1 873.1 315.7 880.6 298.7 C888.1 281.7 906.8 264.8 905.0 250.0 C903.2 235.2 875.8 216.7 870.0 210.0" fill="none" stroke="#fff" stroke-width="1.5" stroke-opacity="0.80" stroke-linecap="round" stroke-linejoin="round"/>
<path d="M1029.0 420.0 C1022.5 410.0 999.3 375.3 990.0 360.0 C980.7 344.7 979.3 342.8 973.0 328.0 C966.7 313.2 959.3 290.0 952.1 271.2 C944.9 252.3 933.7 231.9 930.0 215.0 C926.3 198.1 930.0 177.5 930.0 170.0" fill="none" stroke="#fff" stroke-width="1.5" stroke-opacity="0.80" stroke-linecap="round" stroke-linejoin="round"/>
<path d="M973.0 328.0 C971.0 323.7 962.2 311.0 961.0 302.0 C959.8 293.0 961.5 282.7 966.0 274.0 C970.5 265.3 982.3 259.8 988.0 250.0 C993.7 240.2 998.0 220.8 1000.0 215.0" fill="none" stroke="#fff" stroke-width="1.5" stroke-opacity="0.80" stroke-linecap="round" stroke-linejoin="round"/>
<path d="M830.0 344.0 C828.7 335.0 819.4 305.2 822.0 290.0 C824.6 274.8 837.4 266.1 845.4 252.7 C853.4 239.4 865.9 217.1 870.0 210.0" fill="none" stroke="#fff" stroke-width="1.5" stroke-opacity="0.80" stroke-linecap="round" stroke-linejoin="round"/>
<path d="M860.0 352.0 C866.7 343.3 890.6 315.3 900.0 300.0 C909.4 284.7 911.1 274.2 916.1 260.0 C921.1 245.9 927.7 222.5 930.0 215.0" fill="none" stroke="#fff" stroke-width="1.5" stroke-opacity="0.80" stroke-linecap="round" stroke-linejoin="round"/>
<path d="M1029.0 420.0 C1024.7 430.0 1009.2 461.7 1003.0 480.0 C996.8 498.3 995.9 512.7 991.5 529.7 C987.2 546.7 982.2 564.6 976.8 582.0 C971.3 599.4 971.0 614.0 959.0 634.0 C947.0 654.0 914.0 690.7 905.0 702.0" fill="none" stroke="#fff" stroke-width="1.5" stroke-opacity="0.80" stroke-linecap="round" stroke-linejoin="round"/>
<path d="M1120.0 490.0 C1114.6 497.5 1098.0 521.7 1087.9 535.2 C1077.7 548.8 1068.4 557.7 1059.2 571.3 C1050.1 584.9 1044.7 604.9 1033.0 617.0 C1021.3 629.1 1002.5 634.0 988.9 643.9 C975.2 653.7 964.9 666.6 950.9 676.3 C937.0 686.0 920.0 688.9 905.0 702.0 C890.0 715.1 868.3 746.2 861.0 755.0" fill="none" stroke="#fff" stroke-width="1.5" stroke-opacity="0.80" stroke-linecap="round" stroke-linejoin="round"/>
<path d="M1120.0 490.0 C1122.3 499.7 1133.4 531.0 1134.0 548.0 C1134.6 565.0 1126.6 577.2 1123.8 592.2 C1121.0 607.2 1120.2 623.5 1117.1 638.1 C1114.0 652.8 1108.7 659.7 1105.0 680.0 C1101.3 700.3 1096.7 746.7 1095.0 760.0" fill="none" stroke="#fff" stroke-width="1.5" stroke-opacity="0.80" stroke-linecap="round" stroke-linejoin="round"/>
<path d="M861.0 755.0 C874.0 757.7 917.8 770.5 939.0 771.0 C960.2 771.5 972.1 762.4 988.1 758.1 C1004.1 753.8 1017.2 744.7 1035.0 745.0 C1052.8 745.3 1085.0 757.5 1095.0 760.0" fill="none" stroke="#fff" stroke-width="1.5" stroke-opacity="0.80" stroke-linecap="round" stroke-linejoin="round"/>
<path d="M1033.0 617.0 C1032.7 627.4 1031.0 657.9 1031.3 679.2 C1031.6 700.5 1034.4 734.0 1035.0 745.0" fill="none" stroke="#fff" stroke-width="1.5" stroke-opacity="0.80" stroke-linecap="round" stroke-linejoin="round"/>
<path d="M1003.0 480.0 C1004.9 487.7 1010.4 510.6 1014.1 526.3 C1017.8 542.0 1022.0 559.0 1025.1 574.1 C1028.3 589.2 1031.7 609.9 1033.0 617.0" fill="none" stroke="#fff" stroke-width="1.5" stroke-opacity="0.80" stroke-linecap="round" stroke-linejoin="round"/>
<path d="M900.0 525.0 C909.1 520.9 937.6 507.8 954.7 500.3 C971.9 492.8 995.0 483.4 1003.0 480.0" fill="none" stroke="#fff" stroke-width="1.5" stroke-opacity="0.80" stroke-linecap="round" stroke-linejoin="round"/>
<path d="M1120.0 490.0 C1130.0 495.0 1163.0 505.3 1180.0 520.0 C1197.0 534.7 1215.0 568.3 1222.0 578.0" fill="none" stroke="#fff" stroke-width="1.5" stroke-opacity="0.80" stroke-linecap="round" stroke-linejoin="round"/>
<path d="M1222.0 450.0 C1221.5 461.1 1219.0 495.4 1219.0 516.8 C1219.0 538.1 1219.3 557.5 1222.0 578.0 C1224.7 598.5 1238.6 625.0 1235.0 640.0 C1231.4 655.0 1211.9 658.1 1200.5 667.8 C1189.0 677.5 1178.4 688.1 1166.3 698.3 C1154.3 708.5 1140.0 718.8 1128.2 729.1 C1116.3 739.3 1100.5 754.8 1095.0 760.0" fill="none" stroke="#fff" stroke-width="1.5" stroke-opacity="0.80" stroke-linecap="round" stroke-linejoin="round"/>
<path d="M1222.0 578.0 C1235.0 577.5 1278.6 572.4 1300.0 575.0 C1321.4 577.6 1333.5 587.9 1350.2 593.7 C1366.8 599.6 1377.0 609.0 1400.0 610.0 C1423.0 611.0 1473.3 601.7 1488.0 600.0" fill="none" stroke="#fff" stroke-width="1.5" stroke-opacity="0.80" stroke-linecap="round" stroke-linejoin="round"/>
<path d="M1222.0 578.0 C1224.2 588.3 1218.7 626.3 1235.0 640.0 C1251.3 653.7 1296.3 655.4 1320.0 660.0 C1343.7 664.6 1357.0 665.7 1377.0 667.7 C1397.0 669.7 1429.5 671.3 1440.0 672.0" fill="none" stroke="#fff" stroke-width="1.5" stroke-opacity="0.80" stroke-linecap="round" stroke-linejoin="round"/>
<path d="M1029.0 420.0 C1037.6 416.2 1063.5 404.8 1080.4 397.3 C1097.2 389.8 1113.3 381.2 1130.0 375.0 C1146.7 368.8 1164.2 365.8 1180.7 360.1 C1197.2 354.4 1216.1 349.8 1229.0 341.0 C1241.9 332.2 1246.5 316.4 1258.0 307.0 C1269.5 297.6 1283.6 291.8 1298.1 284.3 C1312.6 276.8 1329.1 265.9 1345.0 262.0 C1360.9 258.1 1377.9 261.8 1393.7 261.0 C1409.6 260.1 1424.3 261.8 1440.0 257.0 C1455.7 252.2 1480.0 236.2 1488.0 232.0" fill="none" stroke="#fff" stroke-width="1.5" stroke-opacity="0.80" stroke-linecap="round" stroke-linejoin="round"/>
<path d="M1072.0 362.0 L1130.0 375.0" fill="none" stroke="#fff" stroke-width="1.5" stroke-opacity="0.80" stroke-linecap="round" stroke-linejoin="round"/>
<path d="M1258.0 307.0 C1257.5 298.8 1254.3 280.8 1255.0 258.0 C1255.7 235.2 1260.8 184.7 1262.0 170.0" fill="none" stroke="#fff" stroke-width="1.5" stroke-opacity="0.80" stroke-linecap="round" stroke-linejoin="round"/>
<path d="M1229.0 341.0 C1235.0 342.5 1254.8 344.8 1265.0 350.0 C1275.2 355.2 1285.8 368.3 1290.0 372.0" fill="none" stroke="#fff" stroke-width="1.5" stroke-opacity="0.80" stroke-linecap="round" stroke-linejoin="round"/>
<path d="M1190.0 240.0 L1255.0 258.0" fill="none" stroke="#fff" stroke-width="1.5" stroke-opacity="0.80" stroke-linecap="round" stroke-linejoin="round"/>
<path d="M1190.0 240.0 C1195.8 245.2 1213.7 260.1 1225.0 271.3 C1236.4 282.4 1252.5 301.0 1258.0 307.0" fill="none" stroke="#fff" stroke-width="1.5" stroke-opacity="0.80" stroke-linecap="round" stroke-linejoin="round"/>
<path d="M1130.0 375.0 C1126.7 362.5 1106.1 317.2 1110.0 300.0 C1113.9 282.8 1139.9 282.0 1153.2 272.0 C1166.5 262.0 1183.9 245.3 1190.0 240.0" fill="none" stroke="#fff" stroke-width="1.5" stroke-opacity="0.80" stroke-linecap="round" stroke-linejoin="round"/>
<path d="M1290.0 372.0 C1291.7 385.0 1296.1 427.9 1300.0 450.0 C1303.9 472.1 1308.1 486.2 1313.1 504.5 C1318.1 522.8 1315.5 542.4 1330.0 560.0 C1344.5 577.6 1388.3 601.7 1400.0 610.0" fill="none" stroke="#fff" stroke-width="1.5" stroke-opacity="0.80" stroke-linecap="round" stroke-linejoin="round"/>
<path d="M1370.0 351.0 C1372.5 362.5 1380.7 401.3 1385.0 420.0 C1389.3 438.7 1393.2 448.0 1395.7 463.0 C1398.2 478.0 1399.4 493.3 1400.0 510.0 C1400.6 526.7 1399.4 546.6 1399.4 563.2 C1399.4 579.9 1399.9 602.2 1400.0 610.0" fill="none" stroke="#fff" stroke-width="1.5" stroke-opacity="0.80" stroke-linecap="round" stroke-linejoin="round"/>
<path d="M1460.0 359.0 C1461.7 369.2 1465.3 401.5 1470.0 420.0 C1474.7 438.5 1485.0 461.7 1488.0 470.0" fill="none" stroke="#fff" stroke-width="1.5" stroke-opacity="0.80" stroke-linecap="round" stroke-linejoin="round"/>
<path d="M1460.0 359.0 L1480.0 300.0" fill="none" stroke="#fff" stroke-width="1.5" stroke-opacity="0.80" stroke-linecap="round" stroke-linejoin="round"/>
<path d="M1470.0 420.0 C1464.6 427.2 1449.5 448.1 1437.8 463.1 C1426.1 478.1 1406.3 502.2 1400.0 510.0" fill="none" stroke="#fff" stroke-width="1.5" stroke-opacity="0.80" stroke-linecap="round" stroke-linejoin="round"/>
<path d="M1224.0 452.0 C1236.7 455.0 1278.7 463.8 1300.0 470.0 C1321.3 476.2 1335.0 482.4 1351.6 489.0 C1368.3 495.7 1377.3 504.8 1400.0 510.0 C1422.7 515.2 1473.3 518.3 1488.0 520.0" fill="none" stroke="#fff" stroke-width="1.5" stroke-opacity="0.80" stroke-linecap="round" stroke-linejoin="round"/>
<path d="M1400.0 610.0 C1406.7 620.3 1439.2 657.0 1440.0 672.0 C1440.8 687.0 1411.5 685.4 1405.0 700.0 C1398.5 714.6 1402.8 740.2 1401.1 759.4 C1399.5 778.5 1396.0 805.7 1395.0 815.0" fill="none" stroke="#fff" stroke-width="1.5" stroke-opacity="0.80" stroke-linecap="round" stroke-linejoin="round"/>
<path d="M1405.0 700.0 C1398.3 705.5 1377.4 721.4 1364.9 733.1 C1352.4 744.7 1345.7 759.9 1330.0 770.0 C1314.3 780.1 1289.7 785.0 1270.5 793.4 C1251.3 801.7 1224.3 815.6 1215.0 820.0" fill="none" stroke="#fff" stroke-width="1.5" stroke-opacity="0.80" stroke-linecap="round" stroke-linejoin="round"/>
<path d="M1405.0 700.0 C1390.8 698.3 1339.7 686.3 1320.0 690.0 C1300.3 693.7 1296.7 710.8 1286.7 722.5 C1276.7 734.1 1272.0 743.7 1260.0 760.0 C1248.0 776.3 1222.5 810.0 1215.0 820.0" fill="none" stroke="#fff" stroke-width="1.5" stroke-opacity="0.80" stroke-linecap="round" stroke-linejoin="round"/>
<path d="M1095.0 760.0 C1104.9 764.9 1134.3 779.4 1154.3 789.4 C1174.3 799.4 1204.9 814.9 1215.0 820.0" fill="none" stroke="#fff" stroke-width="1.5" stroke-opacity="0.80" stroke-linecap="round" stroke-linejoin="round"/>
<path d="M1395.0 815.0 L1330.0 770.0" fill="none" stroke="#fff" stroke-width="1.5" stroke-opacity="0.80" stroke-linecap="round" stroke-linejoin="round"/>
<path d="M1400.0 610.0 C1406.8 608.0 1426.4 602.2 1441.0 598.1 C1455.7 593.9 1480.2 587.2 1488.0 585.0" fill="none" stroke="#fff" stroke-width="1.5" stroke-opacity="0.80" stroke-linecap="round" stroke-linejoin="round"/>
<path d="M1440.0 672.0 L1488.0 640.0" fill="none" stroke="#fff" stroke-width="1.5" stroke-opacity="0.80" stroke-linecap="round" stroke-linejoin="round"/>
<path d="M1095.0 760.0 L1150.0 821.0" fill="none" stroke="#fff" stroke-width="1.5" stroke-opacity="0.80" stroke-linecap="round" stroke-linejoin="round"/>
<path d="M409.5 182.0 L421.4 176.2 M393.1 199.8 L381.3 193.2 M396.0 188.4 L385.4 193.7 M390.2 176.1 L380.2 186.4 M396.3 182.3 L408.3 174.5 M407.1 177.9 L401.2 168.3 M389.7 191.7 L386.7 188.9 M405.1 197.6 L400.3 201.5 M410.8 177.5 L406.5 174.2 M415.1 179.0 L413.0 174.5 M395.1 191.4 L401.1 186.1 M404.6 183.3 L413.4 175.7 M397.0 180.1 L392.8 171.1 M405.4 201.6 L391.5 205.0 M393.1 189.1 L384.8 178.2 M400.1 182.7 L387.6 180.9 M403.9 172.2 L391.0 166.5 M390.2 187.6 L386.2 177.2 M408.5 193.6 L415.9 186.8 M391.8 185.0 L389.9 172.3 M400.2 192.5 L398.5 177.6 M401.0 192.7 L403.3 196.9 M391.8 187.7 L381.8 190.7 M394.0 199.5 L393.5 204.1 M394.6 185.6 L394.2 192.0 M406.4 192.9 L412.8 200.4 M397.8 189.0 L389.4 184.9 M412.6 192.0 L418.0 178.7 M407.0 182.7 L419.7 177.8 M397.9 179.1 L406.7 175.4 M394.8 181.1 L408.4 173.7 M396.2 184.9 L397.3 180.2 M399.1 171.7 L399.0 177.4 M394.6 173.3 L407.0 164.6" fill="none" stroke="#fff" stroke-width="1.5" stroke-opacity=".7" stroke-linecap="round"/>
<path d="M1023.5 409.9 L1036.1 401.0 M1021.6 414.4 L1015.1 427.6 M1021.8 423.6 L1019.4 413.5 M1025.5 418.8 L1042.1 424.1 M1023.3 415.6 L1029.0 419.4 M1032.6 404.9 L1032.6 420.3 M1025.6 425.5 L1017.3 438.5 M1022.4 401.6 L1016.2 388.8 M1037.3 408.4 L1035.9 412.1 M1029.9 428.1 L1030.8 444.7 M1023.2 426.5 L1018.3 432.8 M1031.1 419.2 L1016.6 422.3 M1012.2 412.5 L1021.5 401.8 M1029.5 403.4 L1029.8 394.8 M1022.1 422.9 L1025.2 431.0 M1032.5 412.6 L1019.6 402.7 M1041.1 434.5 L1027.4 442.4 M1033.0 415.7 L1036.0 411.9 M1042.2 432.2 L1039.5 436.3 M1025.0 429.8 L1028.4 417.4 M1037.7 411.2 L1049.7 424.6 M1031.6 418.0 L1019.1 428.6 M1026.1 415.0 L1017.9 400.2 M1019.5 405.3 L1029.4 398.5 M1033.3 420.6 L1033.6 428.7 M1013.7 418.5 L1012.6 404.1 M1030.9 414.4 L1029.4 427.2 M1037.4 424.4 L1045.5 427.5 M1028.4 414.7 L1034.4 414.6" fill="none" stroke="#fff" stroke-width="1.5" stroke-opacity=".7" stroke-linecap="round"/>
<path d="M1231.6 300.5 L1226.9 300.3 M1228.6 304.5 L1228.0 319.9 M1241.0 303.4 L1248.8 308.3 M1240.1 301.3 L1234.2 298.2 M1243.0 302.9 L1255.6 294.7 M1245.5 309.8 L1258.1 312.0 M1252.2 311.0 L1259.7 298.9 M1247.5 303.7 L1250.0 308.1 M1258.4 311.2 L1249.0 309.1 M1233.4 291.3 L1224.7 281.9 M1250.6 304.9 L1241.4 305.9 M1240.5 316.3 L1241.3 310.0 M1246.3 293.6 L1242.7 302.7 M1248.7 315.9 L1255.2 313.7 M1240.1 311.5 L1233.2 307.0 M1238.2 308.5 L1247.2 304.8 M1250.5 295.7 L1260.0 304.4 M1237.6 314.6 L1246.9 307.6 M1251.9 315.4 L1246.4 317.2 M1234.6 316.7 L1226.0 325.4 M1235.8 319.4 L1240.4 313.5 M1239.0 307.3 L1234.4 297.9 M1256.0 299.7 L1250.5 304.2 M1236.5 298.0 L1223.8 292.6" fill="none" stroke="#fff" stroke-width="1.5" stroke-opacity=".7" stroke-linecap="round"/>
<path d="M584.8 721.2 L583.9 727.1 M595.4 729.8 L597.0 723.8 M579.6 726.4 L578.3 716.8 M585.9 723.5 L582.8 718.3 M582.8 711.0 L583.5 721.5 M581.8 720.6 L577.5 720.5 M586.5 726.3 L583.8 737.2 M587.2 732.4 L579.3 739.1 M575.7 711.2 L567.2 701.5 M579.5 731.9 L583.8 718.4 M594.9 724.6 L591.8 711.7 M585.9 714.6 L596.1 717.1 M593.7 717.7 L601.4 728.4 M577.6 721.0 L582.0 724.3 M595.4 728.9 L598.7 718.2 M589.1 734.2 L581.9 737.1 M581.7 720.5 L582.9 728.7 M597.9 721.2 L595.1 713.8 M581.3 739.5 L571.0 735.1 M577.8 736.5 L573.5 742.6 M574.4 720.7 L563.2 711.7 M569.4 725.7 L566.3 714.2 M569.8 718.5 L573.2 720.7 M579.7 722.9 L584.4 725.1 M588.6 719.1 L592.9 711.5 M581.3 726.8 L575.5 735.9" fill="none" stroke="#fff" stroke-width="1.5" stroke-opacity=".7" stroke-linecap="round"/>
<path d="M308.8 695.7 L312.3 685.7 M306.6 684.5 L298.2 674.6 M306.5 689.6 L306.4 696.4 M299.4 681.1 L293.0 691.4 M313.4 684.8 L316.8 687.4 M320.7 695.0 L317.4 704.2 M312.2 686.9 L320.4 677.0 M311.5 692.5 L300.1 696.2 M309.7 693.1 L321.2 693.7 M310.0 702.9 L323.2 700.2 M305.2 703.1 L296.9 699.6 M314.8 682.9 L321.7 687.7 M308.9 691.6 L310.9 683.4 M316.4 676.0 L319.1 665.8 M303.1 686.6 L296.2 697.0 M296.1 691.7 L288.2 695.3 M316.2 688.0 L323.7 688.5 M324.3 685.3 L322.6 678.8 M305.4 697.3 L309.4 699.0 M311.0 692.5 L313.3 699.6 M312.5 675.0 L314.6 662.4 M314.7 702.7 L323.6 698.8 M305.5 702.9 L314.1 707.0 M305.9 691.3 L300.3 684.4" fill="none" stroke="#fff" stroke-width="1.5" stroke-opacity=".7" stroke-linecap="round"/>
<path d="M1412.6 713.5 L1399.8 724.7 M1414.2 701.3 L1417.5 718.6 M1406.0 705.7 L1401.3 713.2 M1397.1 690.8 L1391.3 694.3 M1407.3 717.3 L1402.7 720.6 M1386.8 694.2 L1379.3 688.6 M1402.5 701.9 L1388.6 705.9 M1399.4 706.6 L1397.9 710.7 M1402.9 702.5 L1390.2 699.3 M1408.0 714.8 L1421.3 704.8 M1399.9 706.5 L1405.3 705.6 M1401.2 697.9 L1404.7 686.4 M1391.2 698.5 L1394.8 692.1 M1411.9 716.4 L1401.5 728.0 M1400.2 705.7 L1400.2 695.7 M1397.3 702.4 L1395.3 691.5 M1411.4 696.1 L1406.7 690.0 M1402.3 686.6 L1404.7 676.9 M1396.0 712.5 L1397.3 706.4 M1397.3 709.4 L1388.4 704.8 M1401.4 704.4 L1387.5 707.8 M1399.2 685.3 L1403.7 684.5 M1410.9 705.4 L1412.8 699.3 M1395.3 693.4 L1406.6 705.6 M1406.0 702.1 L1396.5 704.2 M1393.0 700.4 L1385.3 699.4 M1397.1 696.7 L1405.4 710.2 M1403.2 703.5 L1395.3 719.5 M1403.3 700.2 L1399.0 703.4 M1410.8 696.5 L1396.7 706.1 M1404.1 692.3 L1394.1 690.9 M1398.7 699.9 L1383.3 708.7 M1414.3 706.2 L1413.8 714.7 M1411.8 706.1 L1425.1 709.5 M1390.1 713.0 L1385.0 721.7 M1401.9 706.0 L1399.0 693.4 M1409.9 716.7 L1403.6 723.5 M1399.0 700.2 L1404.0 698.8" fill="none" stroke="#fff" stroke-width="1.5" stroke-opacity=".7" stroke-linecap="round"/>
<path d="M1117.3 497.4 L1122.2 490.7 M1127.3 487.5 L1125.0 482.7 M1119.5 486.8 L1118.5 478.8 M1120.8 494.7 L1127.6 493.5 M1118.0 486.7 L1112.3 479.5 M1117.2 480.6 L1121.6 489.9 M1114.3 489.6 L1104.6 490.2 M1124.5 490.9 L1129.6 492.7 M1114.7 491.7 L1110.3 493.1 M1114.5 496.6 L1118.4 502.3 M1119.6 485.5 L1119.7 479.6 M1125.2 492.1 L1122.5 499.8 M1128.2 483.2 L1133.1 480.5 M1118.4 492.6 L1124.0 496.0 M1119.1 496.8 L1128.3 500.3 M1124.3 485.3 L1121.8 489.6" fill="none" stroke="#fff" stroke-width="1.5" stroke-opacity=".7" stroke-linecap="round"/>
<path d="M1216.2 570.9 L1208.8 563.9 M1225.2 573.8 L1220.8 568.4 M1225.5 587.1 L1227.1 591.6 M1221.0 585.0 L1218.3 591.1 M1225.9 587.0 L1229.5 592.0 M1223.6 579.7 L1228.3 573.2 M1218.1 576.1 L1220.8 566.7 M1225.6 575.7 L1231.2 570.0 M1211.5 576.9 L1212.1 572.1 M1223.2 583.0 L1223.2 578.9 M1222.7 583.3 L1219.9 573.9 M1222.3 585.9 L1222.6 578.3 M1217.2 576.4 L1223.7 579.8 M1224.5 577.8 L1216.5 578.6 M1225.6 585.1 L1222.8 579.1 M1222.9 575.1 L1227.0 567.0" fill="none" stroke="#fff" stroke-width="1.5" stroke-opacity=".7" stroke-linecap="round"/>
<path d="M915.0 698.0 L920.0 695.8 M907.9 702.0 L908.6 706.0 M899.5 705.5 L890.4 711.1 M908.5 708.2 L904.4 703.8 M900.9 700.9 L907.1 702.0 M899.3 697.0 L894.0 690.6 M902.8 691.8 L901.9 684.2 M902.5 706.7 L896.2 704.1 M910.4 700.5 L901.3 706.3 M907.4 708.9 L909.5 714.1 M906.6 695.6 L908.5 691.7 M897.2 709.6 L890.5 714.9 M898.3 702.1 L898.2 706.6 M906.8 705.4 L915.4 702.2 M899.2 693.0 L896.7 688.8 M896.9 702.9 L898.3 708.7" fill="none" stroke="#fff" stroke-width="1.5" stroke-opacity=".7" stroke-linecap="round"/>
<path d="M1036.3 627.3 L1044.5 625.6 M1031.7 619.8 L1028.6 626.4 M1034.3 619.2 L1028.9 624.6 M1026.1 612.5 L1022.3 620.7 M1037.2 625.5 L1030.4 631.8 M1024.2 620.5 L1032.7 617.3 M1035.9 626.7 L1037.0 631.3 M1025.9 624.3 L1022.8 620.8 M1035.5 620.9 L1040.8 627.3 M1036.3 619.0 L1028.3 613.4 M1031.1 616.3 L1033.5 611.6 M1041.7 622.6 L1034.4 617.2 M1038.1 623.5 L1032.2 617.1 M1038.0 607.8 L1030.2 604.8" fill="none" stroke="#fff" stroke-width="1.5" stroke-opacity=".7" stroke-linecap="round"/>
<path d="M840.2 636.1 L842.6 631.1 M840.4 651.3 L841.8 657.5 M829.8 640.8 L824.8 641.6 M826.9 640.3 L835.8 638.2 M834.6 641.7 L836.1 646.9 M837.0 634.5 L843.1 632.6 M841.5 643.3 L847.2 635.8 M841.5 636.4 L835.9 630.6 M835.7 637.7 L829.6 645.4 M840.0 631.4 L838.4 639.9 M841.7 638.9 L844.2 643.4 M842.1 636.9 L838.3 640.2 M841.2 647.1 L847.7 642.4 M841.0 647.9 L840.3 643.9 M841.6 638.3 L843.3 646.5 M843.1 643.8 L849.1 649.1" fill="none" stroke="#fff" stroke-width="1.5" stroke-opacity=".7" stroke-linecap="round"/>
<path d="M1293.0 370.8 L1298.3 368.2 M1296.0 374.6 L1302.1 375.8 M1289.7 369.3 L1294.4 367.9 M1289.7 379.8 L1289.6 384.9 M1284.8 373.6 L1284.8 368.7 M1297.1 373.7 L1291.2 371.7 M1290.8 376.9 L1290.4 370.5 M1282.8 370.6 L1277.2 370.6" fill="none" stroke="#fff" stroke-width="1.5" stroke-opacity=".7" stroke-linecap="round"/>
<path d="M373.4 480.2 L376.8 484.6 M366.9 481.4 L368.0 476.4 M375.8 477.6 L380.1 481.1 M371.7 485.6 L376.8 483.8 M365.0 477.3 L360.1 480.9 M368.8 481.2 L371.3 486.3 M370.3 485.4 L365.4 485.5 M371.0 479.3 L364.6 479.1" fill="none" stroke="#fff" stroke-width="1.5" stroke-opacity=".7" stroke-linecap="round"/>
<path d="M869.6 758.9 L864.8 766.0 M859.1 748.3 L859.3 752.9 M855.3 756.3 L861.2 754.5 M862.3 764.7 L863.5 772.1 M856.5 759.2 L850.7 762.9 M858.6 751.7 L854.6 756.0 M857.2 751.9 L852.0 758.8 M864.1 752.7 L866.8 755.9 M852.2 758.2 L846.1 758.8 M861.2 752.2 L867.8 752.3 M864.5 747.3 L865.8 741.0 M864.2 755.3 L865.7 747.4" fill="none" stroke="#fff" stroke-width="1.5" stroke-opacity=".7" stroke-linecap="round"/>
<path d="M1432.4 669.4 L1433.5 659.9 M1436.1 674.3 L1442.3 682.8 M1429.2 667.4 L1433.4 668.7 M1444.8 676.1 L1450.9 669.6 M1438.8 678.9 L1442.8 679.8 M1434.9 673.4 L1427.6 674.8 M1433.0 671.6 L1426.2 671.8 M1443.7 669.0 L1439.8 659.4 M1442.1 676.1 L1446.5 673.5 M1437.1 667.9 L1442.8 661.9 M1433.9 670.9 L1431.0 676.9 M1438.4 668.4 L1434.9 661.3 M1436.1 671.6 L1432.7 680.3" fill="none" stroke="#fff" stroke-width="1.5" stroke-opacity=".7" stroke-linecap="round"/>
<path d="M724.3 353.6 L724.4 348.7 M728.4 359.0 L724.9 356.2 M723.0 359.6 L718.5 356.2 M728.8 362.6 L725.5 365.9 M721.5 362.0 L725.8 361.8" fill="none" stroke="#fff" stroke-width="1.5" stroke-opacity=".7" stroke-linecap="round"/>
<path d="M1233.9 339.2 L1231.3 335.6 M1227.3 334.6 L1232.3 332.4 M1233.9 340.1 L1233.7 344.7 M1230.3 339.2 L1225.4 345.7 M1232.6 346.2 L1235.6 349.9 M1237.3 346.3 L1244.3 351.3 M1231.5 335.0 L1232.3 328.5 M1226.7 340.9 L1218.2 339.5 M1224.6 335.2 L1227.5 340.7 M1221.2 342.9 L1213.7 342.8" fill="none" stroke="#fff" stroke-width="1.5" stroke-opacity=".7" stroke-linecap="round"/>
<path d="M861.2 354.4 L864.9 351.6 M858.4 349.3 L857.3 344.0 M861.5 346.4 L857.8 344.6 M857.7 352.8 L854.5 348.3 M853.4 356.1 L856.8 353.1 M864.2 353.4 L869.7 354.5 M855.4 355.6 L851.2 351.3 M863.2 351.9 L867.2 353.0" fill="none" stroke="#fff" stroke-width="1.5" stroke-opacity=".7" stroke-linecap="round"/>
<path d="M962.9 628.0 L958.3 633.5 M961.9 629.3 L963.2 624.2 M958.6 639.7 L952.9 639.3 M961.1 635.6 L957.8 639.9 M956.9 633.9 L963.8 635.7 M959.1 631.7 L958.4 636.6 M965.1 630.7 L962.0 626.1 M963.6 637.5 L960.6 642.4" fill="none" stroke="#fff" stroke-width="1.5" stroke-opacity=".7" stroke-linecap="round"/>
<path d="M1374.9 348.6 L1378.1 354.7 M1366.4 346.9 L1362.0 350.3 M1366.5 347.1 L1364.7 343.5 M1366.9 357.6 L1362.9 354.9 M1372.5 349.4 L1376.4 346.0 M1370.9 357.2 L1371.3 361.6 M1372.4 344.5 L1377.9 345.6 M1366.9 353.7 L1370.5 349.1" fill="none" stroke="#fff" stroke-width="1.5" stroke-opacity=".7" stroke-linecap="round"/>
<path d="M226.1 502.5 L232.6 503.6 M227.6 510.9 L226.1 516.4 M227.1 509.0 L231.1 505.6 M229.8 507.8 L231.4 511.8 M226.6 505.2 L220.3 503.1 M230.3 515.0 L234.2 512.3 M232.2 510.0 L238.5 508.5 M225.8 504.3 L227.7 500.3" fill="none" stroke="#fff" stroke-width="1.5" stroke-opacity=".7" stroke-linecap="round"/>
<path d="M1412.2 223.6 l1.2 -1.3 M1457.9 204.7 l4.0 0.3 M1412.1 216.9 l1.1 -1.4 M1459.6 173.5 l2.0 0.4 M1423.5 172.5 l2.6 -3.9 M1480.6 221.5 l3.7 0.3 M1436.2 178.8 l1.3 -1.4 M1414.3 240.1 l-0.6 -5.5 M1432.3 181.2 l1.0 -0.8 M1482.7 217.7 l0.4 -3.0 M1413.7 214.9 l2.0 -1.8 M1437.2 198.4 l5.3 0.9 M1401.2 202.6 l0.8 -1.4 M1435.6 204.4 l1.5 -5.2 M1469.0 194.2 l1.4 -0.5 M1406.0 176.6 l2.4 -2.1 M1441.0 200.8 l1.7 -4.2 M1454.6 209.3 l0.3 -1.0 M1476.9 233.0 l2.5 1.1 M1454.6 212.7 l1.4 -0.2 M1431.5 183.4 l1.1 -1.2 M1425.2 232.6 l2.6 -4.7 M1467.1 215.0 l3.9 -1.4 M1411.1 190.5 l0.9 -0.6 M1461.0 230.3 l1.7 -3.3 M1441.2 236.0 l3.1 0.7 M1396.9 244.7 l4.5 -0.4 M1458.5 178.8 l5.7 -1.8 M1423.8 186.8 l2.7 -3.3 M1458.8 205.2 l2.2 -2.0 M1416.0 194.5 l0.6 -4.7 M1465.7 240.3 l3.7 -0.9 M1453.8 189.5 l3.4 -1.1 M1487.1 196.1 l3.9 -4.5 M1463.0 174.7 l2.9 -2.0 M1456.5 231.4 l-0.0 -2.5 M1402.3 187.7 l2.1 -1.4 M1478.7 201.9 l0.2 -4.7 M1411.1 187.1 l0.1 -1.8 M1444.1 226.5 l1.1 -1.3 M1425.2 203.2 l0.2 -1.4 M1425.2 234.9 l3.2 -3.4 M1429.5 243.9 l1.5 -3.0 M1409.8 227.7 l5.1 2.0 M1465.6 181.8 l5.0 -0.6 M1465.9 176.8 l1.4 -2.4 M1420.4 189.2 l3.8 0.3 M1430.7 217.2 l0.6 -0.9 M1459.2 203.5 l2.7 -0.9 M1441.4 213.8 l0.7 -1.9 M1453.9 213.0 l2.2 -1.7 M1459.8 239.2 l0.3 -5.3 M1448.5 226.9 l4.1 -1.8 M1453.6 219.3 l2.6 -1.8 M1455.3 215.7 l1.9 -5.6 M1438.7 236.9 l2.7 -4.1 M1459.7 193.3 l1.7 -0.3 M1465.5 230.5 l5.0 -1.7 M1421.5 207.9 l1.5 -5.3 M1486.9 201.1 l-0.2 -2.5" fill="none" stroke="#7db4e4" stroke-width="2.0" stroke-linecap="round"/>
<path d="M1390.3 189.4 l0.3 -3.5 M1317.8 205.6 l5.9 -3.3 M1319.9 240.4 l3.1 -3.8 M1337.3 252.3 l5.0 -0.6 M1390.9 202.9 l6.4 -2.4 M1368.8 192.0 l1.5 -5.5 M1376.7 195.7 l2.7 -4.7 M1359.4 197.4 l5.3 -4.2 M1358.4 202.8 l2.8 -2.2 M1295.0 255.2 l2.4 -2.1 M1344.5 245.9 l-0.5 -3.5 M1356.6 195.6 l0.7 -3.9 M1389.9 194.0 l1.7 -4.8 M1312.1 194.3 l0.7 -2.1 M1345.2 183.8 l3.8 -1.2 M1384.0 205.6 l-0.5 -5.0 M1311.5 218.6 l0.9 -0.9 M1324.5 179.7 l2.0 -3.4 M1344.0 251.9 l4.6 1.4 M1344.4 185.4 l1.6 -2.3 M1352.0 202.1 l-0.2 -3.9 M1375.3 190.6 l1.1 -0.1 M1341.5 216.0 l0.8 -3.9 M1338.0 259.0 l1.5 -5.4 M1323.8 185.5 l0.8 -4.3 M1358.9 204.6 l-0.1 -1.6 M1347.2 198.7 l5.3 -2.4 M1338.2 196.3 l3.0 -5.1 M1380.5 188.9 l0.4 -2.2 M1324.6 224.3 l1.0 -5.3 M1292.3 232.2 l4.9 -3.6 M1290.0 183.4 l3.1 -2.4 M1314.1 254.4 l2.7 -3.4 M1345.7 196.4 l1.6 -1.6" fill="none" stroke="#7db4e4" stroke-width="2.0" stroke-linecap="round"/>
<path d="M1282.6 184.9 l-1.0 -2.7 M1272.4 186.3 l1.2 -1.7 M1284.5 195.0 l2.2 -1.1 M1289.3 198.4 l2.7 -2.3 M1283.1 193.5 l-0.4 -3.3 M1245.4 213.2 l1.6 -3.3 M1263.2 221.4 l0.2 -1.2 M1242.2 221.2 l0.5 -1.2 M1281.9 200.3 l-0.1 -2.6 M1243.4 176.9 l0.1 -1.7" fill="none" stroke="#7db4e4" stroke-width="1.8" stroke-linecap="round"/>
<path d="M1383.1 267.1 l0.6 -3.3 M1421.1 266.0 l3.3 -0.3 M1410.6 263.2 l1.9 -0.8 M1401.7 276.6 l3.5 1.8 M1389.6 281.2 l0.2 -2.3 M1380.5 278.2 l1.0 -0.8 M1401.4 279.6 l0.3 -2.2 M1413.8 276.5 l0.7 -2.2" fill="none" stroke="#7db4e4" stroke-width="2.0" stroke-linecap="round"/>
<path d="M275.6 274.3 l1.1 1.3 M232.7 255.3 l1.2 0.3 M214.6 267.0 l1.1 0.3 M372.1 318.2 l0.5 2.8 M418.6 211.5 l0.4 1.9 M399.2 319.0 l-0.6 1.8 M233.3 203.3 l-0.3 2.6 M291.5 230.7 l-0.3 2.4 M389.8 325.7 l-0.8 1.7 M256.5 293.7 l1.4 1.7 M390.4 329.4 l-0.0 1.3 M368.8 173.3 l1.4 1.4 M374.0 339.9 l0.7 1.7 M256.9 322.1 l2.2 0.2 M403.7 294.3 l1.5 2.5 M376.0 183.0 l-0.3 1.0 M264.6 329.3 l1.9 0.6 M403.3 247.3 l1.2 0.8 M408.1 262.0 l2.9 0.7 M268.6 325.2 l0.3 1.9 M375.8 221.3 l0.2 1.4 M348.3 270.7 l1.8 2.1 M375.7 201.1 l-0.2 1.6 M405.6 336.8 l1.7 0.4 M217.3 310.8 l0.3 1.3 M420.4 228.0 l2.8 1.0 M399.3 193.6 l-1.0 2.8 M397.6 258.2 l0.4 1.2 M356.7 337.4 l-0.0 1.5 M363.6 297.6 l2.8 0.9 M227.4 190.3 l1.7 1.0 M346.0 337.6 l-0.4 2.5 M364.5 289.1 l2.5 0.0 M338.4 282.6 l0.4 1.0 M338.5 317.4 l2.3 0.2 M408.5 204.4 l1.2 1.7 M394.7 248.3 l-0.3 1.6 M437.9 300.9 l1.8 1.8 M389.1 264.9 l0.3 2.5 M428.8 315.2 l0.8 2.3 M281.8 218.1 l0.5 1.4 M388.2 186.3 l1.6 1.4 M359.1 229.1 l2.0 1.1 M408.5 333.4 l0.8 1.4 M341.1 322.5 l0.5 1.0" fill="none" stroke="#7db4e4" stroke-width="1.6" stroke-linecap="round"/>
<path d="M550.3 253.2 l2.8 0.9 M565.8 263.7 l1.6 0.6 M465.8 274.7 l-0.3 1.0 M458.0 201.0 l2.1 1.6 M700.1 324.5 l0.6 1.2 M707.6 274.5 l0.6 1.5 M492.7 243.0 l0.8 1.1 M530.9 193.4 l1.1 1.0 M550.9 296.6 l0.9 2.0 M577.1 290.0 l2.4 0.5 M606.2 271.2 l-0.7 2.0 M622.8 196.0 l2.0 1.8 M445.7 187.5 l2.7 1.1 M566.4 321.7 l0.9 0.6 M664.5 215.2 l1.6 0.5 M635.4 318.0 l1.2 1.9 M453.1 220.0 l0.0 1.2 M534.4 180.8 l0.0 2.1 M645.1 228.3 l0.8 2.0 M574.8 193.8 l2.7 0.4 M628.5 281.6 l0.2 1.8 M452.1 318.5 l2.3 1.7 M494.2 316.3 l0.5 1.2 M514.8 279.4 l-0.9 1.6 M627.0 303.1 l1.5 0.0 M507.6 286.3 l-0.3 2.8 M553.2 311.1 l2.6 0.9 M697.4 291.9 l0.9 2.8 M682.7 172.7 l-0.4 1.4 M534.8 260.3 l-0.4 2.8" fill="none" stroke="#7db4e4" stroke-width="1.5" stroke-linecap="round"/>
<path d="M840.7 287.2 l2.2 0.4 M856.3 319.9 l0.4 1.6 M942.4 342.4 l-1.1 2.2 M926.1 310.1 l1.9 -0.2 M971.6 279.6 l0.4 1.0 M916.4 383.1 l0.7 0.9 M901.0 246.5 l0.5 2.2 M908.4 307.8 l-0.5 2.8 M930.7 306.1 l0.9 1.7 M975.0 397.2 l1.7 0.7 M903.2 301.9 l0.2 2.1 M986.7 333.2 l1.4 0.5 M874.6 268.3 l1.1 1.1 M837.5 283.7 l-0.9 2.4 M899.3 345.5 l-0.0 2.1 M939.1 234.0 l1.7 2.1 M901.2 219.5 l-0.7 1.5 M940.0 301.4 l2.4 -0.1 M988.9 373.6 l1.6 0.7 M935.8 320.5 l1.8 1.3 M986.0 277.5 l0.1 2.9 M980.9 266.1 l0.2 2.6 M858.5 358.1 l2.7 -0.1 M997.2 262.8 l1.9 0.7" fill="none" stroke="#7db4e4" stroke-width="1.5" stroke-linecap="round"/>
<path d="M208.8 443.7 l1.1 1.1 M630.7 597.3 l2.1 0.1 M1098.6 648.2 l2.1 0.1 M1116.1 524.0 l1.1 2.6 M1177.0 506.6 l1.6 -0.1 M226.9 363.7 l2.1 0.1 M884.3 560.6 l0.6 1.6 M888.5 462.5 l2.9 0.3 M1157.4 717.0 l-0.4 1.9 M508.7 425.9 l0.3 2.6 M1405.3 503.6 l-0.3 1.9 M1206.3 460.7 l0.7 2.0 M1461.7 601.0 l-0.2 1.1 M1229.0 737.8 l1.4 1.1 M1291.4 482.3 l2.2 0.8 M1262.7 602.0 l1.9 0.3 M965.5 666.8 l0.2 2.4 M1468.1 353.1 l-0.3 1.6 M283.3 466.7 l1.1 0.5 M784.4 788.3 l0.4 1.4 M501.1 387.5 l0.5 1.1 M763.5 818.5 l-1.0 2.4 M693.7 555.5 l1.1 2.1 M330.0 609.9 l0.6 1.0 M514.2 722.8 l-0.2 1.1 M1072.8 538.3 l-0.8 1.6 M381.4 756.0 l1.6 2.4 M575.0 385.8 l1.0 2.6 M410.8 519.2 l0.9 2.5 M509.6 554.4 l-0.3 2.7 M851.6 577.9 l1.2 2.3 M389.4 449.6 l-0.3 1.6 M297.1 396.7 l1.8 0.6 M1446.5 763.0 l1.1 1.4 M949.1 590.8 l2.8 0.9 M1410.5 400.8 l0.0 1.7 M623.1 440.8 l0.3 1.3 M1400.8 437.1 l-0.9 2.7 M1431.3 698.0 l-0.2 1.1 M1059.8 346.6 l0.3 2.9" fill="none" stroke="#7db4e4" stroke-width="1.4" stroke-linecap="round"/>
<path d="M326.0 249.0 C326.8 249.3 329.7 251.2 331.0 251.0 C332.3 250.8 333.5 248.5 334.0 248.0" fill="none" stroke="#7db4e4" stroke-width="3.2" stroke-linecap="round" stroke-linejoin="round" stroke-opacity="1.00"/>
<path d="M928.0 243.0 C928.5 244.2 930.0 248.0 931.0 250.0 C932.0 252.0 933.5 254.2 934.0 255.0" fill="none" stroke="#7db4e4" stroke-width="4.0" stroke-linecap="round" stroke-linejoin="round" stroke-opacity="1.00"/>
<path d="M1463.0 344.0 C1465.0 344.4 1471.0 346.2 1475.0 346.5 C1479.0 346.8 1485.0 346.1 1487.0 346.0" fill="none" stroke="#7db4e4" stroke-width="4.5" stroke-linecap="round" stroke-linejoin="round" stroke-opacity="1.00"/>
<path d="M1388.0 376.0 C1388.2 377.3 1388.9 381.3 1389.5 384.0 C1390.1 386.7 1391.2 390.7 1391.5 392.0" fill="none" stroke="#7db4e4" stroke-width="1.8" stroke-linecap="round" stroke-linejoin="round" stroke-opacity="1.00"/>
<path d="M1403.0 374.0 C1403.2 376.5 1403.9 384.0 1404.5 389.0 C1405.1 394.0 1406.2 401.5 1406.5 404.0" fill="none" stroke="#7db4e4" stroke-width="1.8" stroke-linecap="round" stroke-linejoin="round" stroke-opacity="1.00"/>
<path d="M1421.0 370.0 C1421.2 372.3 1421.9 379.3 1422.5 384.0 C1423.1 388.7 1424.2 395.7 1424.5 398.0" fill="none" stroke="#7db4e4" stroke-width="1.8" stroke-linecap="round" stroke-linejoin="round" stroke-opacity="1.00"/>
<path d="M1434.0 372.0 C1434.2 373.2 1434.9 376.7 1435.5 379.0 C1436.1 381.3 1437.2 384.8 1437.5 386.0" fill="none" stroke="#7db4e4" stroke-width="1.8" stroke-linecap="round" stroke-linejoin="round" stroke-opacity="1.00"/>
<path d="M1443.0 370.0 C1443.2 370.8 1443.9 373.0 1444.5 374.5 C1445.1 376.0 1446.2 378.2 1446.5 379.0" fill="none" stroke="#7db4e4" stroke-width="1.8" stroke-linecap="round" stroke-linejoin="round" stroke-opacity="1.00"/>
<path d="M1377.0 378.0 C1377.2 378.7 1377.9 380.7 1378.5 382.0 C1379.1 383.3 1380.2 385.3 1380.5 386.0" fill="none" stroke="#7db4e4" stroke-width="1.8" stroke-linecap="round" stroke-linejoin="round" stroke-opacity="1.00"/>
<path d="M361.0 752.0 C362.2 752.7 365.8 756.3 368.0 756.0 C370.2 755.7 372.0 749.7 374.0 750.0 C376.0 750.3 377.7 757.0 380.0 758.0 C382.3 759.0 386.7 756.3 388.0 756.0" fill="none" stroke="#7db4e4" stroke-width="2.0" stroke-linecap="round" stroke-linejoin="round" stroke-opacity="1.00"/>
<path d="M358.0 804.0 C359.0 805.0 362.0 809.7 364.0 810.0 C366.0 810.3 369.0 806.7 370.0 806.0" fill="none" stroke="#7db4e4" stroke-width="2.0" stroke-linecap="round" stroke-linejoin="round" stroke-opacity="1.00"/>
<path d="M478.0 655.0 C479.0 654.5 481.8 651.8 484.0 652.0 C486.2 652.2 489.8 655.3 491.0 656.0" fill="none" stroke="#7db4e4" stroke-width="2.0" stroke-linecap="round" stroke-linejoin="round" stroke-opacity="1.00"/>
<path d="M640.0 714.0 L642.0 722.0" fill="none" stroke="#7db4e4" stroke-width="2.6" stroke-linecap="round" stroke-linejoin="round" stroke-opacity="1.00"/>
<path d="M659.0 762.0 L660.0 770.0" fill="none" stroke="#7db4e4" stroke-width="2.4" stroke-linecap="round" stroke-linejoin="round" stroke-opacity="1.00"/>
<path d="M675.0 648.0 C675.7 649.0 678.7 652.0 679.0 654.0 C679.3 656.0 677.3 659.0 677.0 660.0" fill="none" stroke="#7db4e4" stroke-width="1.8" stroke-linecap="round" stroke-linejoin="round" stroke-opacity="1.00"/>
<path d="M1366.0 786.0 L1374.0 794.0" fill="none" stroke="#7db4e4" stroke-width="2.4" stroke-linecap="round" stroke-linejoin="round" stroke-opacity="1.00"/>
<path d="M1240.0 652.0 L1244.0 660.0" fill="none" stroke="#7db4e4" stroke-width="1.8" stroke-linecap="round" stroke-linejoin="round" stroke-opacity="1.00"/>
<path d="M422.5 170.0 C422.5 173.9 421.9 185.8 422.5 193.7 C423.1 201.6 423.8 211.9 426.0 217.4 C428.2 222.9 431.6 224.5 435.6 226.9 C439.6 229.3 445.9 229.2 449.8 231.6 C453.8 234.0 455.4 238.3 459.3 241.1 C463.2 243.9 470.4 245.4 473.5 248.2 C476.6 251.0 475.4 254.5 478.2 257.7 C480.9 260.9 485.6 264.0 490.0 267.2 C494.4 270.4 500.3 273.5 504.3 276.7 C508.3 279.9 511.6 281.8 513.8 286.1 C516.0 290.4 516.5 296.8 517.3 302.7 C518.1 308.6 517.9 316.6 518.5 321.7 C519.1 326.8 519.1 330.3 520.9 333.5 C522.7 336.7 528.4 337.5 529.2 340.7 C530.0 343.9 526.6 347.6 525.6 352.5 C524.6 357.4 525.1 338.8 523.3 370.0 C521.5 401.2 517.5 507.8 515.0 540.0 C512.5 572.2 509.7 555.5 508.0 563.0 C506.3 570.5 505.0 575.7 505.0 585.0 C505.0 594.3 507.0 609.8 508.0 619.0 C509.0 628.2 509.2 635.2 511.0 640.0 C512.8 644.8 513.6 643.0 518.6 648.0 C523.6 653.0 534.6 662.6 540.7 670.0 C546.9 677.4 551.2 686.0 555.5 692.2 C559.8 698.4 562.2 701.5 566.5 707.0 C570.8 712.5 580.1 718.6 581.3 725.4 C582.5 732.1 572.7 739.5 573.9 747.5 C575.1 755.5 582.5 765.9 588.6 773.3 C594.8 780.7 604.6 786.3 610.8 791.8 C616.9 797.3 621.8 801.6 625.5 806.5 C629.2 811.4 631.7 818.8 632.9 821.3" fill="none" stroke="#80b2e2" stroke-width="2.3" stroke-linecap="round" stroke-linejoin="round" stroke-opacity="0.95"/>
<path d="M422.5 170.0 C422.5 173.9 421.9 185.8 422.5 193.7 C423.1 201.6 423.8 211.9 426.0 217.4 C428.2 222.9 431.6 224.5 435.6 226.9 C439.6 229.3 445.9 229.2 449.8 231.6 C453.8 234.0 455.4 238.3 459.3 241.1 C463.2 243.9 470.4 245.4 473.5 248.2 C476.6 251.0 475.4 254.5 478.2 257.7 C480.9 260.9 485.6 264.0 490.0 267.2 C494.4 270.4 500.3 273.5 504.3 276.7 C508.3 279.9 511.6 281.8 513.8 286.1 C516.0 290.4 516.5 296.8 517.3 302.7 C518.1 308.6 517.9 316.6 518.5 321.7 C519.1 326.8 519.1 330.3 520.9 333.5 C522.7 336.7 528.4 337.5 529.2 340.7 C530.0 343.9 526.6 347.6 525.6 352.5 C524.6 357.4 525.1 338.8 523.3 370.0 C521.5 401.2 517.5 507.8 515.0 540.0 C512.5 572.2 509.7 555.5 508.0 563.0 C506.3 570.5 505.0 575.7 505.0 585.0 C505.0 594.3 507.0 609.8 508.0 619.0 C509.0 628.2 509.2 635.2 511.0 640.0 C512.8 644.8 513.6 643.0 518.6 648.0 C523.6 653.0 534.6 662.6 540.7 670.0 C546.9 677.4 551.2 686.0 555.5 692.2 C559.8 698.4 562.2 701.5 566.5 707.0 C570.8 712.5 580.1 718.6 581.3 725.4 C582.5 732.1 572.7 739.5 573.9 747.5 C575.1 755.5 582.5 765.9 588.6 773.3 C594.8 780.7 604.6 786.3 610.8 791.8 C616.9 797.3 621.8 801.6 625.5 806.5 C629.2 811.4 631.7 818.8 632.9 821.3" fill="none" stroke="#66778a" stroke-width="1.0" stroke-dasharray="6 3" stroke-opacity=".8"/>
<path d="M603.6 572.5 C601.5 575.6 596.9 584.8 591.2 591.0 C585.6 597.2 575.9 603.3 569.7 609.5 C563.6 615.7 557.4 621.8 554.3 628.0 C551.2 634.2 553.4 639.5 551.2 646.5 C549.0 653.5 542.7 666.1 541.0 670.0" fill="none" stroke="#86b6e0" stroke-width="1.2" stroke-linecap="round" stroke-linejoin="round" stroke-opacity="0.90"/>
<path d="M310.0 689.0 C314.2 687.5 326.7 681.8 335.0 680.0 C343.3 678.2 349.2 676.3 360.0 678.0 C370.8 679.7 388.3 685.5 400.0 690.0 C411.7 694.5 421.7 701.3 430.0 705.0 C438.3 708.7 445.0 708.0 450.0 712.0 C455.0 716.0 453.3 726.7 460.0 729.0 C466.7 731.3 480.0 727.2 490.0 726.0 C500.0 724.8 510.0 723.7 520.0 722.0 C530.0 720.3 541.7 717.2 550.0 716.0 C558.3 714.8 564.8 714.0 570.0 715.0 C575.2 716.0 579.2 720.8 581.0 722.0" fill="none" stroke="#86b6e0" stroke-width="1.3" stroke-linecap="round" stroke-linejoin="round" stroke-opacity="0.80"/>
<path d="M206.8 446.0 C208.0 448.7 212.1 456.8 214.0 462.0 C215.9 467.2 216.7 470.7 218.0 477.0 C219.3 483.3 220.2 492.3 222.0 500.0 C223.8 507.7 227.3 515.5 229.0 523.0 C230.7 530.5 230.7 537.8 232.0 545.0 C233.3 552.2 234.7 558.3 237.0 566.0 C239.3 573.7 241.8 583.2 246.0 591.0 C250.2 598.8 256.8 606.8 262.0 613.0 C267.2 619.2 272.0 623.5 277.0 628.0 C282.0 632.5 288.2 633.8 292.0 640.0 C295.8 646.2 297.0 656.8 300.0 665.0 C303.0 673.2 308.3 685.0 310.0 689.0" fill="none" stroke="#8fb6dc" stroke-width="2.0" stroke-linecap="round" stroke-linejoin="round" stroke-opacity="0.90"/>
<path d="M206.8 446.0 C208.0 448.7 212.1 456.8 214.0 462.0 C215.9 467.2 216.7 470.7 218.0 477.0 C219.3 483.3 220.2 492.3 222.0 500.0 C223.8 507.7 227.3 515.5 229.0 523.0 C230.7 530.5 230.7 537.8 232.0 545.0 C233.3 552.2 234.7 558.3 237.0 566.0 C239.3 573.7 241.8 583.2 246.0 591.0 C250.2 598.8 256.8 606.8 262.0 613.0 C267.2 619.2 272.0 623.5 277.0 628.0 C282.0 632.5 288.2 633.8 292.0 640.0 C295.8 646.2 297.0 656.8 300.0 665.0 C303.0 673.2 308.3 685.0 310.0 689.0" fill="none" stroke="#66778a" stroke-width="1.0" stroke-dasharray="6 3" stroke-opacity=".8"/>
<path d="M650.0 215.0 C648.3 220.8 646.7 237.5 640.0 250.0 C633.3 262.5 618.3 278.3 610.0 290.0 C601.7 301.7 598.3 310.8 590.0 320.0 C581.7 329.2 570.5 339.7 560.0 345.0 C549.5 350.3 532.5 350.8 527.0 352.0" fill="none" stroke="#86b6e0" stroke-width="1.1" stroke-linecap="round" stroke-linejoin="round" stroke-opacity="0.70"/>
<path d="M370.0 483.0 C375.0 485.8 390.0 493.0 400.0 500.0 C410.0 507.0 420.8 517.5 430.0 525.0 C439.2 532.5 445.5 538.5 455.0 545.0 C464.5 551.5 481.7 560.8 487.0 564.0" fill="none" stroke="#86b6e0" stroke-width="1.1" stroke-linecap="round" stroke-linejoin="round" stroke-opacity="0.70"/>
<path d="M1440.2 455.4 C1442.8 458.5 1450.6 468.1 1455.6 473.9 C1460.6 479.7 1467.6 487.3 1470.0 490.0" fill="none" stroke="#86b6e0" stroke-width="1.2" stroke-linecap="round" stroke-linejoin="round" stroke-opacity="0.70"/>
<path d="M1420.2 517.0 C1420.5 520.1 1423.0 528.3 1421.7 535.5 C1420.4 542.7 1414.5 552.3 1412.5 560.0 C1410.5 567.7 1407.9 575.5 1409.4 581.7 C1410.9 587.9 1417.6 591.4 1421.7 597.0 C1425.8 602.6 1428.3 609.4 1434.0 615.6 C1439.7 621.8 1450.5 628.9 1455.6 634.0 C1460.7 639.1 1463.3 644.3 1464.8 646.4" fill="none" stroke="#86b6e0" stroke-width="1.7" stroke-linecap="round" stroke-linejoin="round" stroke-opacity="0.85"/>
<path d="M1255.0 425.0 C1256.2 427.2 1259.5 435.5 1262.0 438.0 C1264.5 440.5 1268.7 439.7 1270.0 440.0" fill="none" stroke="#86b6e0" stroke-width="1.6" stroke-linecap="round" stroke-linejoin="round" stroke-opacity="0.90"/>
<path d="M1284.0 445.0 C1284.3 447.2 1285.2 454.5 1286.0 458.0 C1286.8 461.5 1288.5 464.7 1289.0 466.0" fill="none" stroke="#86b6e0" stroke-width="1.4" stroke-linecap="round" stroke-linejoin="round" stroke-opacity="0.80"/>
<path d="M1222.0 578.0 C1219.2 577.5 1210.3 573.8 1205.0 575.0 C1199.7 576.2 1195.1 581.2 1190.0 585.0 C1184.9 588.8 1178.2 590.2 1174.4 598.0 C1170.6 605.8 1173.2 621.1 1167.2 631.5 C1161.2 641.9 1148.1 650.6 1138.5 660.2 C1128.9 669.8 1117.0 682.6 1109.8 689.0 C1102.6 695.4 1100.2 695.3 1095.4 698.5 C1090.6 701.7 1085.0 703.2 1081.0 708.0 C1077.0 712.8 1075.0 721.0 1071.5 727.2 C1068.0 733.4 1065.2 741.5 1060.0 745.0 C1054.8 748.5 1046.7 748.8 1040.0 748.0 C1033.3 747.2 1026.7 742.2 1020.0 740.0 C1013.3 737.8 1007.5 737.0 1000.0 735.0 C992.5 733.0 983.3 730.2 975.0 728.0 C966.7 725.8 957.5 724.2 950.0 722.0 C942.5 719.8 934.9 717.5 930.0 715.0 C925.1 712.5 924.7 709.0 920.5 707.0 C916.3 705.0 910.1 702.2 905.0 703.0 C899.9 703.8 894.8 708.3 890.0 712.0 C885.2 715.7 879.8 719.5 876.3 725.4 C872.8 731.3 872.0 742.0 868.9 747.5 C865.8 753.0 862.6 756.5 857.8 758.6 C853.0 760.7 846.1 758.8 840.0 760.0 C833.9 761.2 827.7 762.7 821.0 766.0 C814.3 769.3 806.1 776.3 800.0 780.0 C793.9 783.7 789.8 787.3 784.1 788.0 C778.4 788.7 771.8 785.6 765.6 784.4 C759.5 783.2 753.3 779.5 747.2 780.7 C741.1 781.9 734.3 786.9 728.8 791.8 C723.3 796.7 716.1 805.3 714.0 810.2 C711.9 815.1 715.6 819.4 715.9 821.3" fill="none" stroke="#8f9ca8" stroke-width="1.2" stroke-dasharray="7 3 2 3"/>
<path d="M750.9 666.0 C749.7 668.5 744.1 673.6 743.5 681.0 C742.9 688.4 747.8 700.8 747.2 710.6 C746.6 720.4 743.5 731.4 739.8 740.0 C736.1 748.6 728.8 754.9 725.1 762.3 C721.4 769.7 718.9 780.7 717.7 784.4" fill="none" stroke="#8f9ca8" stroke-width="1.2" stroke-dasharray="7 3 2 3"/>
<path d="M206.8 320.5 L517.3 320.5" fill="none" stroke="#a0a8af" stroke-width="1.3" stroke-dasharray="9 4" />
<path d="M240.0 566.4 L483.4 563.9" fill="none" stroke="#a0a8af" stroke-width="1.3" stroke-dasharray="9 4" />
<path d="M205.0 613.0 L260.0 613.0" fill="none" stroke="#a0a8af" stroke-width="1.3" stroke-dasharray="9 4" />
<path d="M307.8 698.0 L307.8 822.0" fill="none" stroke="#a0a8af" stroke-width="1.3" stroke-dasharray="9 4" />
<path d="M750.9 558.0 L750.9 666.0" fill="none" stroke="#a0a8af" stroke-width="1.3" stroke-dasharray="9 4" />
<path d="M830.0 468.7 L921.0 468.7 L921.0 473.8 L1004.9 471.5" fill="none" stroke="#a0a8af" stroke-width="1.3" stroke-dasharray="9 4" />
<path d="M921.0 473.8 L921.0 700.0" fill="none" stroke="#a0a8af" stroke-width="1.3" stroke-dasharray="9 4" />
<path d="M1188.6 421.0 L1188.6 600.0" fill="none" stroke="#a0a8af" stroke-width="1.3" stroke-dasharray="9 4" />
<path d="M1236.0 406.7 L1236.0 448.0 L1489.0 448.0" fill="none" stroke="#a0a8af" stroke-width="1.3" stroke-dasharray="9 4" />
<path d="M1229.0 636.5 L1485.3 636.5 L1485.3 770.0" fill="none" stroke="#a0a8af" stroke-width="1.3" stroke-dasharray="9 4" />
<path d="M1253.4 636.5 L1253.4 677.0" fill="none" stroke="#a0a8af" stroke-width="1.3" stroke-dasharray="9 4" />
<path d="M206.8 613.0 L206.8 613.0" fill="none" stroke="#a0a8af" stroke-width="1.3" stroke-dasharray="9 4" />
<path d="M829.4 169.9 C826.6 172.3 817.5 178.1 812.6 184.4 C807.7 190.7 803.4 198.8 799.7 207.6 C796.1 216.4 793.3 228.6 790.7 237.3 C788.1 246.0 786.1 253.3 784.2 260.0 C782.3 266.7 781.0 269.6 779.4 277.7 C777.8 285.8 775.6 299.9 774.7 308.6 C773.8 317.3 773.5 319.4 774.0 330.0 C774.5 340.6 777.2 365.0 777.8 372.0" fill="none" stroke="#8da2b8" stroke-width="1.2" stroke-dasharray="8 3 2 3"/>
<path d="M1188.6 421.0 L1188.6 452.0" fill="none" stroke="#a0a8af" stroke-width="1.3" stroke-dasharray="9 4" stroke-opacity=".7"/>
<path d="M1253.4 677.0 C1256.2 674.2 1263.9 664.8 1270.0 660.0 C1276.1 655.2 1283.3 648.3 1290.0 648.0 C1296.7 647.7 1303.3 658.5 1310.0 658.0 C1316.7 657.5 1324.2 644.7 1330.0 645.0 C1335.8 645.3 1339.2 656.2 1345.0 660.0 C1350.8 663.8 1358.3 664.7 1365.0 668.0 C1371.7 671.3 1379.2 675.7 1385.0 680.0 C1390.8 684.3 1397.5 691.7 1400.0 694.0" fill="none" stroke="#8f9ca8" stroke-width="1.1" stroke-dasharray="7 3 2 3"/>
<path d="M1253.4 677.0 C1254.8 680.8 1256.7 697.8 1262.0 700.0 C1267.3 702.2 1278.7 690.0 1285.0 690.0 C1291.3 690.0 1295.8 701.7 1300.0 700.0 C1304.2 698.3 1304.2 684.7 1310.0 680.0 C1315.8 675.3 1328.3 670.3 1335.0 672.0 C1341.7 673.7 1345.5 690.0 1350.0 690.0 C1354.5 690.0 1360.0 675.0 1362.0 672.0" fill="none" stroke="#8f9ca8" stroke-width="1.1" stroke-dasharray="7 3 2 3"/>
<path d="M1300.0 700.0 C1297.5 705.0 1291.3 722.0 1285.0 730.0 C1278.7 738.0 1268.7 746.0 1262.0 748.0 C1255.3 750.0 1250.0 739.7 1245.0 742.0 C1240.0 744.3 1237.0 756.0 1232.0 762.0 C1227.0 768.0 1220.3 771.7 1215.0 778.0 C1209.7 784.3 1203.3 792.8 1200.0 800.0 C1196.7 807.2 1195.8 817.5 1195.0 821.0" fill="none" stroke="#8f9ca8" stroke-width="1.1" stroke-dasharray="7 3 2 3"/>
<path d="M1060.0 745.0 C1060.3 749.2 1059.5 762.5 1062.0 770.0 C1064.5 777.5 1070.3 784.2 1075.0 790.0 C1079.7 795.8 1085.0 799.8 1090.0 805.0 C1095.0 810.2 1102.5 818.3 1105.0 821.0" fill="none" stroke="#8f9ca8" stroke-width="1.1" stroke-dasharray="7 3 2 3"/>
<path d="M1065.7 168.0 L1088.1 311.7 L1068.2 364.0 L1066.5 371.4 L1065.5 384.8 L1061.7 396.2 L1056.0 401.0 L1050.3 409.5 L1040.7 417.2 L1029.3 420.0 L1025.5 428.6 L1024.5 443.8 L1027.4 455.3 L1033.1 463.8 L1040.7 468.6 L1082.0 468.4 L1141.7 430.5 L1189.4 421.0 L1216.0 414.3 L1259.9 391.4 L1288.4 377.1 L1290.4 372.5 L1284.0 366.0 L1282.5 361.0 L1280.8 356.5 L1281.5 351.0 L1279.7 345.8 L1271.2 325.6 L1288.2 317.0 L1310.0 308.5 L1420.5 308.5 L1443.9 268.0 L1450.3 260.5 L1461.0 254.1 L1471.7 245.6 L1482.3 237.1 L1488.7 228.5" fill="none" stroke="#d9e4ee" stroke-width="3.2" stroke-linejoin="round" stroke-opacity=".55"/>
<path d="M1065.7 168.0 L1088.1 311.7 L1068.2 364.0 L1066.5 371.4 L1065.5 384.8 L1061.7 396.2 L1056.0 401.0 L1050.3 409.5 L1040.7 417.2 L1029.3 420.0 L1025.5 428.6 L1024.5 443.8 L1027.4 455.3 L1033.1 463.8 L1040.7 468.6 L1082.0 468.4 L1141.7 430.5 L1189.4 421.0 L1216.0 414.3 L1259.9 391.4 L1288.4 377.1 L1290.4 372.5 L1284.0 366.0 L1282.5 361.0 L1280.8 356.5 L1281.5 351.0 L1279.7 345.8 L1271.2 325.6 L1288.2 317.0 L1310.0 308.5 L1420.5 308.5 L1443.9 268.0 L1450.3 260.5 L1461.0 254.1 L1471.7 245.6 L1482.3 237.1 L1488.7 228.5" fill="none" stroke="#565c66" stroke-width="1.5" stroke-linejoin="round"/>
<circle cx="391.3" cy="191.1" r="2.1" fill="#f4f1ee" stroke="#fff" stroke-width="3.6" stroke-opacity=".8"/><circle cx="391.3" cy="191.1" r="2.1" fill="#e9e5e1" stroke="#2a2a2a" stroke-width="1.4"/>
<circle cx="502.5" cy="206.5" r="2.1" fill="#f4f1ee" stroke="#fff" stroke-width="3.6" stroke-opacity=".8"/><circle cx="502.5" cy="206.5" r="2.1" fill="#e9e5e1" stroke="#2a2a2a" stroke-width="1.4"/>
<circle cx="744.6" cy="180.6" r="2.1" fill="#f4f1ee" stroke="#fff" stroke-width="3.6" stroke-opacity=".8"/><circle cx="744.6" cy="180.6" r="2.1" fill="#e9e5e1" stroke="#2a2a2a" stroke-width="1.4"/>
<circle cx="719.9" cy="233.0" r="2.1" fill="#f4f1ee" stroke="#fff" stroke-width="3.6" stroke-opacity=".8"/><circle cx="719.9" cy="233.0" r="2.1" fill="#e9e5e1" stroke="#2a2a2a" stroke-width="1.4"/>
<circle cx="870.6" cy="210.2" r="2.1" fill="#f4f1ee" stroke="#fff" stroke-width="3.6" stroke-opacity=".8"/><circle cx="870.6" cy="210.2" r="2.1" fill="#e9e5e1" stroke="#2a2a2a" stroke-width="1.4"/>
<circle cx="442.1" cy="275.2" r="2.1" fill="#f4f1ee" stroke="#fff" stroke-width="3.6" stroke-opacity=".8"/><circle cx="442.1" cy="275.2" r="2.1" fill="#e9e5e1" stroke="#2a2a2a" stroke-width="1.4"/>
<circle cx="395.3" cy="351.0" r="2.1" fill="#f4f1ee" stroke="#fff" stroke-width="3.6" stroke-opacity=".8"/><circle cx="395.3" cy="351.0" r="2.1" fill="#e9e5e1" stroke="#2a2a2a" stroke-width="1.4"/>
<circle cx="334.6" cy="406.5" r="2.1" fill="#f4f1ee" stroke="#fff" stroke-width="3.6" stroke-opacity=".8"/><circle cx="334.6" cy="406.5" r="2.1" fill="#e9e5e1" stroke="#2a2a2a" stroke-width="1.4"/>
<circle cx="726.1" cy="360.9" r="2.1" fill="#f4f1ee" stroke="#fff" stroke-width="3.6" stroke-opacity=".8"/><circle cx="726.1" cy="360.9" r="2.1" fill="#e9e5e1" stroke="#2a2a2a" stroke-width="1.4"/>
<circle cx="830.5" cy="344.2" r="2.1" fill="#f4f1ee" stroke="#fff" stroke-width="3.6" stroke-opacity=".8"/><circle cx="830.5" cy="344.2" r="2.1" fill="#e9e5e1" stroke="#2a2a2a" stroke-width="1.4"/>
<circle cx="973.5" cy="327.6" r="2.1" fill="#f4f1ee" stroke="#fff" stroke-width="3.6" stroke-opacity=".8"/><circle cx="973.5" cy="327.6" r="2.1" fill="#e9e5e1" stroke="#2a2a2a" stroke-width="1.4"/>
<circle cx="936.2" cy="387.0" r="2.1" fill="#f4f1ee" stroke="#fff" stroke-width="3.6" stroke-opacity=".8"/><circle cx="936.2" cy="387.0" r="2.1" fill="#e9e5e1" stroke="#2a2a2a" stroke-width="1.4"/>
<circle cx="1029.6" cy="419.5" r="2.1" fill="#f4f1ee" stroke="#fff" stroke-width="3.6" stroke-opacity=".8"/><circle cx="1029.6" cy="419.5" r="2.1" fill="#e9e5e1" stroke="#2a2a2a" stroke-width="1.4"/>
<circle cx="1228.8" cy="340.9" r="2.1" fill="#f4f1ee" stroke="#fff" stroke-width="3.6" stroke-opacity=".8"/><circle cx="1228.8" cy="340.9" r="2.1" fill="#e9e5e1" stroke="#2a2a2a" stroke-width="1.4"/>
<circle cx="1440.2" cy="257.2" r="2.1" fill="#f4f1ee" stroke="#fff" stroke-width="3.6" stroke-opacity=".8"/><circle cx="1440.2" cy="257.2" r="2.1" fill="#e9e5e1" stroke="#2a2a2a" stroke-width="1.4"/>
<circle cx="1258.7" cy="306.7" r="2.1" fill="#f4f1ee" stroke="#fff" stroke-width="3.6" stroke-opacity=".8"/><circle cx="1258.7" cy="306.7" r="2.1" fill="#e9e5e1" stroke="#2a2a2a" stroke-width="1.4"/>
<circle cx="1369.8" cy="351.0" r="2.1" fill="#f4f1ee" stroke="#fff" stroke-width="3.6" stroke-opacity=".8"/><circle cx="1369.8" cy="351.0" r="2.1" fill="#e9e5e1" stroke="#2a2a2a" stroke-width="1.4"/>
<circle cx="1290.3" cy="372.2" r="2.1" fill="#f4f1ee" stroke="#fff" stroke-width="3.6" stroke-opacity=".8"/><circle cx="1290.3" cy="372.2" r="2.1" fill="#e9e5e1" stroke="#2a2a2a" stroke-width="1.4"/>
<circle cx="1460.4" cy="359.1" r="2.1" fill="#f4f1ee" stroke="#fff" stroke-width="3.6" stroke-opacity=".8"/><circle cx="1460.4" cy="359.1" r="2.1" fill="#e9e5e1" stroke="#2a2a2a" stroke-width="1.4"/>
<circle cx="1134.2" cy="548.5" r="2.1" fill="#f4f1ee" stroke="#fff" stroke-width="3.6" stroke-opacity=".8"/><circle cx="1134.2" cy="548.5" r="2.1" fill="#e9e5e1" stroke="#2a2a2a" stroke-width="1.4"/>
<circle cx="1033.7" cy="617.6" r="2.1" fill="#f4f1ee" stroke="#fff" stroke-width="3.6" stroke-opacity=".8"/><circle cx="1033.7" cy="617.6" r="2.1" fill="#e9e5e1" stroke="#2a2a2a" stroke-width="1.4"/>
<circle cx="959.0" cy="634.3" r="2.1" fill="#f4f1ee" stroke="#fff" stroke-width="3.6" stroke-opacity=".8"/><circle cx="959.0" cy="634.3" r="2.1" fill="#e9e5e1" stroke="#2a2a2a" stroke-width="1.4"/>
<circle cx="1221.8" cy="577.9" r="2.1" fill="#f4f1ee" stroke="#fff" stroke-width="3.6" stroke-opacity=".8"/><circle cx="1221.8" cy="577.9" r="2.1" fill="#e9e5e1" stroke="#2a2a2a" stroke-width="1.4"/>
<circle cx="939.3" cy="771.5" r="2.1" fill="#f4f1ee" stroke="#fff" stroke-width="3.6" stroke-opacity=".8"/><circle cx="939.3" cy="771.5" r="2.1" fill="#e9e5e1" stroke="#2a2a2a" stroke-width="1.4"/>
<circle cx="860.8" cy="754.9" r="2.1" fill="#f4f1ee" stroke="#fff" stroke-width="3.6" stroke-opacity=".8"/><circle cx="860.8" cy="754.9" r="2.1" fill="#e9e5e1" stroke="#2a2a2a" stroke-width="1.4"/>
<circle cx="748.3" cy="777.7" r="2.1" fill="#f4f1ee" stroke="#fff" stroke-width="3.6" stroke-opacity=".8"/><circle cx="748.3" cy="777.7" r="2.1" fill="#e9e5e1" stroke="#2a2a2a" stroke-width="1.4"/>
<circle cx="583.5" cy="725.4" r="2.1" fill="#f4f1ee" stroke="#fff" stroke-width="3.6" stroke-opacity=".8"/><circle cx="583.5" cy="725.4" r="2.1" fill="#e9e5e1" stroke="#2a2a2a" stroke-width="1.4"/>
<circle cx="450.0" cy="698.8" r="2.1" fill="#f4f1ee" stroke="#fff" stroke-width="3.6" stroke-opacity=".8"/><circle cx="450.0" cy="698.8" r="2.1" fill="#e9e5e1" stroke="#2a2a2a" stroke-width="1.4"/>
<circle cx="460.3" cy="728.7" r="2.1" fill="#f4f1ee" stroke="#fff" stroke-width="3.6" stroke-opacity=".8"/><circle cx="460.3" cy="728.7" r="2.1" fill="#e9e5e1" stroke="#2a2a2a" stroke-width="1.4"/>
<circle cx="310.1" cy="689.0" r="2.1" fill="#f4f1ee" stroke="#fff" stroke-width="3.6" stroke-opacity=".8"/><circle cx="310.1" cy="689.0" r="2.1" fill="#e9e5e1" stroke="#2a2a2a" stroke-width="1.4"/>
<circle cx="291.8" cy="633.2" r="2.1" fill="#f4f1ee" stroke="#fff" stroke-width="3.6" stroke-opacity=".8"/><circle cx="291.8" cy="633.2" r="2.1" fill="#e9e5e1" stroke="#2a2a2a" stroke-width="1.4"/>
<circle cx="225.3" cy="509.7" r="2.1" fill="#f4f1ee" stroke="#fff" stroke-width="3.6" stroke-opacity=".8"/><circle cx="225.3" cy="509.7" r="2.1" fill="#e9e5e1" stroke="#2a2a2a" stroke-width="1.4"/>
<circle cx="370.4" cy="482.6" r="2.1" fill="#f4f1ee" stroke="#fff" stroke-width="3.6" stroke-opacity=".8"/><circle cx="370.4" cy="482.6" r="2.1" fill="#e9e5e1" stroke="#2a2a2a" stroke-width="1.4"/>
<circle cx="507.5" cy="619.3" r="2.1" fill="#f4f1ee" stroke="#fff" stroke-width="3.6" stroke-opacity=".8"/><circle cx="507.5" cy="619.3" r="2.1" fill="#e9e5e1" stroke="#2a2a2a" stroke-width="1.4"/>
<circle cx="617.4" cy="631.0" r="2.1" fill="#f4f1ee" stroke="#fff" stroke-width="3.6" stroke-opacity=".8"/><circle cx="617.4" cy="631.0" r="2.1" fill="#e9e5e1" stroke="#2a2a2a" stroke-width="1.4"/>
<circle cx="899.5" cy="525.3" r="2.1" fill="#f4f1ee" stroke="#fff" stroke-width="3.6" stroke-opacity=".8"/><circle cx="899.5" cy="525.3" r="2.1" fill="#e9e5e1" stroke="#2a2a2a" stroke-width="1.4"/>
<text class="st" x="565.7" y="221.6" font-size="18.50" textLength="89.3" lengthAdjust="spacingAndGlyphs">Wisconsin</text>
<text class="st" x="898.3" y="202.2" font-size="18.50" textLength="78.9" lengthAdjust="spacingAndGlyphs">Michigan</text>
<text class="st" x="356.5" y="447.8" font-size="18.50" textLength="40.7" lengthAdjust="spacingAndGlyphs">Iowa</text>
<text class="st" x="396.9" y="767.0" font-size="18.50" textLength="74.5" lengthAdjust="spacingAndGlyphs">Missouri</text>
<text class="st" x="795.2" y="628.4" font-size="18.50" textLength="65.2" lengthAdjust="spacingAndGlyphs">Indiana</text>
<text class="st" x="850.5" y="817.6" font-size="18.50" textLength="80.4" lengthAdjust="spacingAndGlyphs">Kentucky</text>
<text class="st" x="1029.8" y="587.4" font-size="18.50" textLength="42.6" lengthAdjust="spacingAndGlyphs">Ohio</text>
<text class="st" x="1268.7" y="531.0" font-size="18.50" textLength="117.0" lengthAdjust="spacingAndGlyphs">Pennsylvania</text>
<text class="st" x="1117.9" y="722.4" font-size="18.50" textLength="116.3" lengthAdjust="spacingAndGlyphs">West Virginia</text>
<text class="st" x="1381.6" y="663.0" font-size="18.50" textLength="70.8" lengthAdjust="spacingAndGlyphs">Maryland</text>
<text class="st" x="1273.3" y="808.7" font-size="18.50" textLength="65.0" lengthAdjust="spacingAndGlyphs">Virginia</text>
<text class="st" x="1463.0" y="391.4" font-size="18.50" textLength="82.0" lengthAdjust="spacingAndGlyphs">New York</text>
<clipPath id="cpR"><rect x="200" y="160" width="1286.7" height="680"/></clipPath>
<text class="lb" x="271.8" y="199.0" font-size="19.50" textLength="112.4" lengthAdjust="spacingAndGlyphs">Minneapolis</text>
<text class="lb" x="423.0" y="211.5" font-size="14.20" textLength="71.8" lengthAdjust="spacingAndGlyphs">Eau Claire</text>
<text class="lb" x="665.4" y="185.9" font-size="14.20" textLength="71.8" lengthAdjust="spacingAndGlyphs">Marinette</text>
<text class="lb" x="638.4" y="238.4" font-size="14.20" textLength="74.1" lengthAdjust="spacingAndGlyphs">Green Bay</text>
<text class="lb" x="800.3" y="208.4" font-size="14.20" textLength="62.3" lengthAdjust="spacingAndGlyphs">Traverse</text>
<text class="lb" x="835.8" y="223.8" font-size="14.20" textLength="26.8" lengthAdjust="spacingAndGlyphs">City</text>
<text class="lb" x="448.9" y="280.6" font-size="14.20" textLength="72.1" lengthAdjust="spacingAndGlyphs">Rochester</text>
<text class="lb" x="309.4" y="356.3" font-size="14.20" textLength="78.5" lengthAdjust="spacingAndGlyphs">Mason City</text>
<text class="lb" x="248.7" y="412.0" font-size="14.20" textLength="79.2" lengthAdjust="spacingAndGlyphs">Fort Dodge</text>
<text class="lb" x="633.5" y="366.4" font-size="15.50" textLength="84.9" lengthAdjust="spacingAndGlyphs">Milwaukee</text>
<text class="lb" x="748.6" y="348.8" font-size="14.20" textLength="74.5" lengthAdjust="spacingAndGlyphs">Muskegon</text>
<text class="lb" x="907.2" y="333.1" font-size="14.20" textLength="59.2" lengthAdjust="spacingAndGlyphs">Saginaw</text>
<text class="lb" x="874.0" y="392.6" font-size="14.20" textLength="54.8" lengthAdjust="spacingAndGlyphs">Lansing</text>
<text class="lb" x="959.0" y="414.5" font-size="19.50" textLength="64.7" lengthAdjust="spacingAndGlyphs">Detroit</text>
<text class="lb" x="1155.0" y="347.4" font-size="14.20" textLength="65.8" lengthAdjust="spacingAndGlyphs">Hamilton</text>
<text class="lb" x="1370.8" y="262.7" font-size="14.20" textLength="61.9" lengthAdjust="spacingAndGlyphs">Kingston</text>
<text class="lb" x="1267.2" y="313.2" font-size="19.50" textLength="72.6" lengthAdjust="spacingAndGlyphs">Toronto</text>
<text class="lb" x="1284.5" y="356.5" font-size="15.50" textLength="76.5" lengthAdjust="spacingAndGlyphs">Rochester</text>
<text class="lb" x="1262.3" y="396.3" font-size="15.50" textLength="55.4" lengthAdjust="spacingAndGlyphs">Buffalo</text>
<text class="lb" x="1468.5" y="364.7" font-size="15.50" textLength="72.0" lengthAdjust="spacingAndGlyphs">Syracuse</text>
<text class="lb" x="1417.0" y="174.6" font-size="19.50" textLength="67.0" lengthAdjust="spacingAndGlyphs">Ottawa</text>
<text class="lb" x="1110.5" y="484.6" font-size="15.50" textLength="86.2" lengthAdjust="spacingAndGlyphs">Cleveland</text>
<text class="lb" x="1084.1" y="528.2" font-size="14.20" textLength="82.0" lengthAdjust="spacingAndGlyphs">Youngstown</text>
<text class="lb" x="1076.0" y="553.7" font-size="14.20" textLength="50.3" lengthAdjust="spacingAndGlyphs">Canton</text>
<text class="lb" x="953.2" y="622.9" font-size="14.20" textLength="71.8" lengthAdjust="spacingAndGlyphs">Columbus</text>
<text class="lb" x="900.0" y="638.7" font-size="14.20" textLength="53.0" lengthAdjust="spacingAndGlyphs">Dayton</text>
<text class="lb" x="853.0" y="692.9" font-size="15.50" textLength="74.7" lengthAdjust="spacingAndGlyphs">Cincinnati</text>
<text class="lb" x="1180.6" y="600.4" font-size="15.50" textLength="81.4" lengthAdjust="spacingAndGlyphs">Pittsburgh</text>
<text class="lb" x="1026.0" y="748.8" font-size="14.20" textLength="74.2" lengthAdjust="spacingAndGlyphs">Charleston</text>
<text class="lb" x="862.3" y="777.0" font-size="14.20" textLength="68.5" lengthAdjust="spacingAndGlyphs">Lexington</text>
<text class="lb" x="787.0" y="760.8" font-size="14.20" textLength="66.0" lengthAdjust="spacingAndGlyphs">Louisville</text>
<text class="lb" x="670.9" y="783.3" font-size="14.20" textLength="69.7" lengthAdjust="spacingAndGlyphs">Evansville</text>
<text class="lb" x="545.5" y="718.7" font-size="19.50" textLength="76.3" lengthAdjust="spacingAndGlyphs">St. Louis</text>
<text class="lb" x="374.8" y="704.4" font-size="14.20" textLength="67.1" lengthAdjust="spacingAndGlyphs">Columbia</text>
<text class="lb" x="386.9" y="728.0" font-size="14.20" textLength="65.3" lengthAdjust="spacingAndGlyphs">Jefferson</text>
<text class="lb" x="427.1" y="743.1" font-size="14.20" textLength="25.8" lengthAdjust="spacingAndGlyphs">City</text>
<text class="lb" x="248.6" y="685.8" font-size="15.50" textLength="54.9" lengthAdjust="spacingAndGlyphs">Kansas</text>
<text class="lb" x="274.0" y="703.2" font-size="15.50" textLength="29.5" lengthAdjust="spacingAndGlyphs">City</text>
<text class="lb" x="197.5" y="640.3" font-size="14.20" textLength="88.1" lengthAdjust="spacingAndGlyphs">Saint Joseph</text>
<text class="lb" x="171.0" y="516.5" font-size="15.50" textLength="45.0" lengthAdjust="spacingAndGlyphs">Omaha</text>
<text class="lb" x="272.7" y="488.7" font-size="15.50" textLength="90.6" lengthAdjust="spacingAndGlyphs">Des Moines</text>
<text class="lb" x="450.5" y="626.4" font-size="14.20" textLength="49.9" lengthAdjust="spacingAndGlyphs">Quincy</text>
<text class="lb" x="533.3" y="636.6" font-size="14.20" textLength="77.4" lengthAdjust="spacingAndGlyphs">Springfield</text>
<text class="lb" x="568.0" y="563.0" font-size="14.20" textLength="44.0" lengthAdjust="spacingAndGlyphs">Peoria</text>
<text class="lb" x="809.1" y="530.3" font-size="14.20" textLength="82.5" lengthAdjust="spacingAndGlyphs">Fort Wayne</text>
<text class="lb" x="1189.0" y="829.6" font-size="14.20" textLength="66.0" lengthAdjust="spacingAndGlyphs">Lynchburg</text>
<text class="lb" x="1401.9" y="625.4" font-size="19.50" textLength="111.7" lengthAdjust="spacingAndGlyphs" clip-path="url(#cpR)">Philadelphia</text>
<text class="lb" x="1351.3" y="729.2" font-size="19.50" textLength="108.4" lengthAdjust="spacingAndGlyphs">Washington</text>
<rect x="1240.7" y="227.5" width="20.5" height="13.4" rx="1.5" fill="#fff" stroke="#8a8a8a" stroke-width="1"/>
<text class="sh" x="1244.6" y="238.8" font-size="11.50" textLength="12.5" lengthAdjust="spacingAndGlyphs">11</text>
<circle cx="658.6" cy="580" r="55" fill="#eba533"/><circle cx="658.6" cy="580" r="13.7" fill="#f3dcae"/>
<circle cx="1422.6" cy="690.6" r="19.6" fill="rgba(176,168,182,.78)" stroke="#1b1230" stroke-width="3"/>
<circle cx="1330.2" cy="797.2" r="6.8" fill="rgba(190,185,190,.6)" stroke="#1b1230" stroke-width="2.6"/>
<circle cx="441.5" cy="746" r="6.8" fill="rgba(190,185,190,.6)" stroke="#1b1230" stroke-width="2.6"/></svg></div>
<div id="zoom" class="abs"><i></i></div>
<span class="t" style="left:231.0px;top:189.3px;font-size:23.50px;color:#111;transform:scaleX(1.0056);-webkit-text-stroke:.5px #111;">+</span>
<span class="t" style="left:231.8px;top:225.6px;font-size:23.50px;color:#111;transform:scaleX(0.8744);-webkit-text-stroke:.5px #111;">−</span>
<div id="leaf" class="abs"></div>
<div class="abs" style="left:1492.3px;top:300px;width:2.2px;height:521px;background:#efebe7"></div>
<span class="t" style="left:1436.0px;top:802.0px;font-size:14.00px;color:#2a78ad;transform:scaleX(1.0777);-webkit-text-stroke:.35px #2a78ad;">Leaflet</span>
<div id="tip" class="abs"><div class="ln" style="top:82px;width:357.8px"></div><div class="ln" style="top:131.2px;width:351.7px"></div></div>
<span class="t" style="left:483.7px;top:394.9px;font-size:42.00px;color:#fff;transform:scaleX(0.8562);-webkit-text-stroke:.6px #fff;">5</span>
<span class="t" style="left:484.4px;top:466.1px;font-size:16.80px;color:#fff;transform:scaleX(0.9051);-webkit-text-stroke:.35px #fff;">DESTINATION_STATE</span>
<span class="t" style="left:820.0px;top:466.1px;font-size:16.80px;color:#fff;transform:scaleX(0.8993);-webkit-text-stroke:.35px #fff;">IL</span>
<span class="t" style="left:483.3px;top:525.3px;font-size:15.80px;color:#fff;font-weight:700;transform:scaleX(1.0116);">40.41, -88.99</span>
<svg class="abs" style="left:0;top:0;pointer-events:none" width="1627" height="844" viewBox="0 0 1627 844"><circle cx="1067.9" cy="627.9" r="141.4" fill="none" stroke="#874397" stroke-width="40.8"/><path d="M1165 730.3 L1335 900.3" stroke="#874397" stroke-width="40.4" fill="none"/></svg>
</body></html>
